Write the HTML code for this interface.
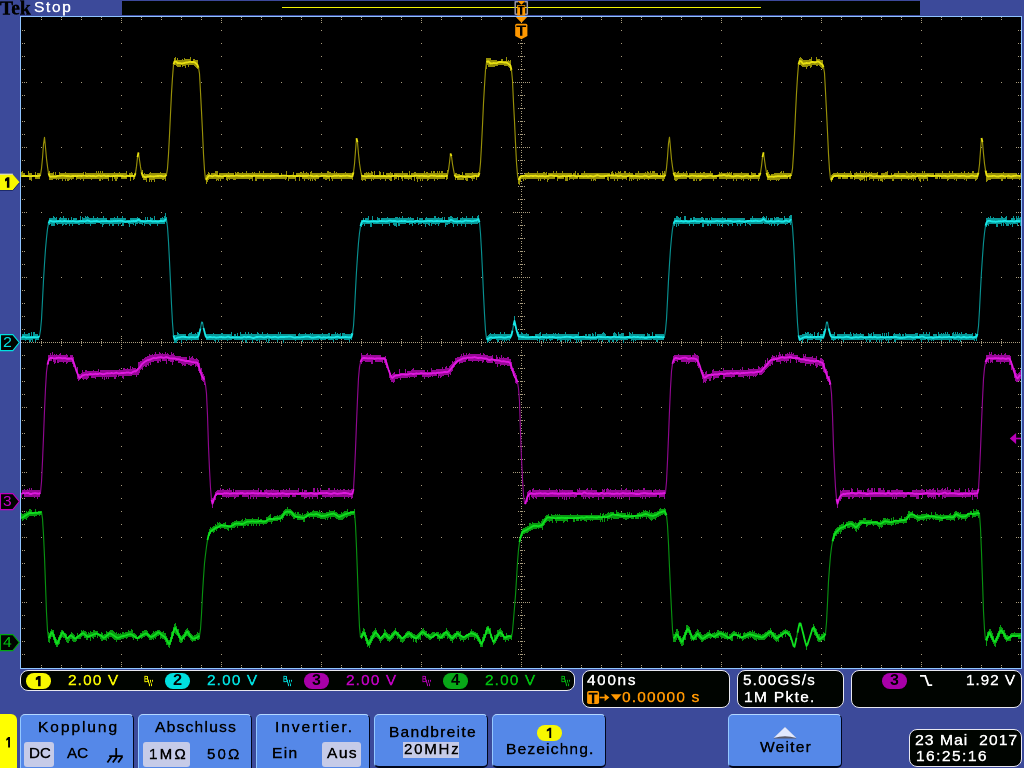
<!DOCTYPE html>
<html><head><meta charset="utf-8"><title>Tek scope</title>
<style>
html,body{margin:0;padding:0}
body{width:1024px;height:768px;overflow:hidden;background:#3c4a9a;position:relative;font-family:"Liberation Sans",sans-serif}
.abs{position:absolute}
.t{position:absolute;line-height:0;white-space:pre;transform-origin:0 0;display:block;-webkit-text-stroke:0.75px currentColor;will-change:transform}
.box{position:absolute;background:#000400;border:1px solid #e8e8f0;border-radius:8px;box-sizing:border-box}
.badge{position:absolute;border-radius:8px/7.8px}
.btn{position:absolute;background:#5588e8;box-sizing:border-box;border-top:1.4px solid #b4d8ff;border-left:1.4px solid #94c8ff;border-right:1.2px solid #00061c;border-radius:5px 5px 0 0;top:714px;height:60px}
.btn.pop{height:54px;border-bottom:2px solid #00061c;border-radius:5px}
.sel{position:absolute;background:#c6cbe8;border-radius:3px}
</style></head><body>
<div class="abs" style="left:122px;top:1px;width:798px;height:14px;background:#000400"></div>
<div class="abs" style="left:282px;top:6.8px;width:479px;height:1.4px;background:#f4f400"></div>
<div class="abs" style="left:20px;top:16px;width:1002px;height:653px;background:#8fc3ff"></div>
<div class="abs" style="left:21px;top:17px;width:1000px;height:651px;background:#000"></div>
<svg class="abs" style="left:0;top:0" width="1024" height="768" viewBox="0 0 1024 768">
<defs><clipPath id="cp"><rect x="21" y="17" width="1000" height="651"/></clipPath></defs>
<g fill="#a99c7e" stroke="#a99c7e" stroke-width="1" shape-rendering="crispEdges"><line x1="41" y1="82.5" x2="1021" y2="82.5" stroke-dasharray="1 19" stroke-dashoffset="0"/><line x1="41" y1="147.5" x2="1021" y2="147.5" stroke-dasharray="1 19" stroke-dashoffset="0"/><line x1="41" y1="212.5" x2="1021" y2="212.5" stroke-dasharray="1 19" stroke-dashoffset="0"/><line x1="41" y1="277.5" x2="1021" y2="277.5" stroke-dasharray="1 19" stroke-dashoffset="0"/><line x1="41" y1="407.5" x2="1021" y2="407.5" stroke-dasharray="1 19" stroke-dashoffset="0"/><line x1="41" y1="472.5" x2="1021" y2="472.5" stroke-dasharray="1 19" stroke-dashoffset="0"/><line x1="41" y1="537.5" x2="1021" y2="537.5" stroke-dasharray="1 19" stroke-dashoffset="0"/><line x1="41" y1="602.5" x2="1021" y2="602.5" stroke-dasharray="1 19" stroke-dashoffset="0"/><line x1="121.5" y1="30" x2="121.5" y2="667" stroke-dasharray="1 12" stroke-dashoffset="0"/><line x1="221.5" y1="30" x2="221.5" y2="667" stroke-dasharray="1 12" stroke-dashoffset="0"/><line x1="321.5" y1="30" x2="321.5" y2="667" stroke-dasharray="1 12" stroke-dashoffset="0"/><line x1="421.5" y1="30" x2="421.5" y2="667" stroke-dasharray="1 12" stroke-dashoffset="0"/><line x1="621.5" y1="30" x2="621.5" y2="667" stroke-dasharray="1 12" stroke-dashoffset="0"/><line x1="721.5" y1="30" x2="721.5" y2="667" stroke-dasharray="1 12" stroke-dashoffset="0"/><line x1="821.5" y1="30" x2="821.5" y2="667" stroke-dasharray="1 12" stroke-dashoffset="0"/><line x1="921.5" y1="30" x2="921.5" y2="667" stroke-dasharray="1 12" stroke-dashoffset="0"/><line x1="21" y1="342.5" x2="1021" y2="342.5" stroke-dasharray="1 1" stroke-dashoffset="0"/><rect stroke="none" x="41" y="339" width="1" height="1"/><rect stroke="none" x="41" y="345" width="1" height="1"/><rect stroke="none" x="41" y="341" width="1" height="3"/><rect stroke="none" x="61" y="339" width="1" height="1"/><rect stroke="none" x="61" y="345" width="1" height="1"/><rect stroke="none" x="61" y="341" width="1" height="3"/><rect stroke="none" x="81" y="339" width="1" height="1"/><rect stroke="none" x="81" y="345" width="1" height="1"/><rect stroke="none" x="81" y="341" width="1" height="3"/><rect stroke="none" x="101" y="339" width="1" height="1"/><rect stroke="none" x="101" y="345" width="1" height="1"/><rect stroke="none" x="101" y="341" width="1" height="3"/><rect stroke="none" x="121" y="336" width="1" height="1"/><rect stroke="none" x="121" y="338" width="1" height="1"/><rect stroke="none" x="121" y="340" width="1" height="1"/><rect stroke="none" x="121" y="344" width="1" height="1"/><rect stroke="none" x="121" y="346" width="1" height="1"/><rect stroke="none" x="121" y="348" width="1" height="1"/><rect stroke="none" x="141" y="339" width="1" height="1"/><rect stroke="none" x="141" y="345" width="1" height="1"/><rect stroke="none" x="141" y="341" width="1" height="3"/><rect stroke="none" x="161" y="339" width="1" height="1"/><rect stroke="none" x="161" y="345" width="1" height="1"/><rect stroke="none" x="161" y="341" width="1" height="3"/><rect stroke="none" x="181" y="339" width="1" height="1"/><rect stroke="none" x="181" y="345" width="1" height="1"/><rect stroke="none" x="181" y="341" width="1" height="3"/><rect stroke="none" x="201" y="339" width="1" height="1"/><rect stroke="none" x="201" y="345" width="1" height="1"/><rect stroke="none" x="201" y="341" width="1" height="3"/><rect stroke="none" x="221" y="336" width="1" height="1"/><rect stroke="none" x="221" y="338" width="1" height="1"/><rect stroke="none" x="221" y="340" width="1" height="1"/><rect stroke="none" x="221" y="344" width="1" height="1"/><rect stroke="none" x="221" y="346" width="1" height="1"/><rect stroke="none" x="221" y="348" width="1" height="1"/><rect stroke="none" x="241" y="339" width="1" height="1"/><rect stroke="none" x="241" y="345" width="1" height="1"/><rect stroke="none" x="241" y="341" width="1" height="3"/><rect stroke="none" x="261" y="339" width="1" height="1"/><rect stroke="none" x="261" y="345" width="1" height="1"/><rect stroke="none" x="261" y="341" width="1" height="3"/><rect stroke="none" x="281" y="339" width="1" height="1"/><rect stroke="none" x="281" y="345" width="1" height="1"/><rect stroke="none" x="281" y="341" width="1" height="3"/><rect stroke="none" x="301" y="339" width="1" height="1"/><rect stroke="none" x="301" y="345" width="1" height="1"/><rect stroke="none" x="301" y="341" width="1" height="3"/><rect stroke="none" x="321" y="336" width="1" height="1"/><rect stroke="none" x="321" y="338" width="1" height="1"/><rect stroke="none" x="321" y="340" width="1" height="1"/><rect stroke="none" x="321" y="344" width="1" height="1"/><rect stroke="none" x="321" y="346" width="1" height="1"/><rect stroke="none" x="321" y="348" width="1" height="1"/><rect stroke="none" x="341" y="339" width="1" height="1"/><rect stroke="none" x="341" y="345" width="1" height="1"/><rect stroke="none" x="341" y="341" width="1" height="3"/><rect stroke="none" x="361" y="339" width="1" height="1"/><rect stroke="none" x="361" y="345" width="1" height="1"/><rect stroke="none" x="361" y="341" width="1" height="3"/><rect stroke="none" x="381" y="339" width="1" height="1"/><rect stroke="none" x="381" y="345" width="1" height="1"/><rect stroke="none" x="381" y="341" width="1" height="3"/><rect stroke="none" x="401" y="339" width="1" height="1"/><rect stroke="none" x="401" y="345" width="1" height="1"/><rect stroke="none" x="401" y="341" width="1" height="3"/><rect stroke="none" x="421" y="336" width="1" height="1"/><rect stroke="none" x="421" y="338" width="1" height="1"/><rect stroke="none" x="421" y="340" width="1" height="1"/><rect stroke="none" x="421" y="344" width="1" height="1"/><rect stroke="none" x="421" y="346" width="1" height="1"/><rect stroke="none" x="421" y="348" width="1" height="1"/><rect stroke="none" x="441" y="339" width="1" height="1"/><rect stroke="none" x="441" y="345" width="1" height="1"/><rect stroke="none" x="441" y="341" width="1" height="3"/><rect stroke="none" x="461" y="339" width="1" height="1"/><rect stroke="none" x="461" y="345" width="1" height="1"/><rect stroke="none" x="461" y="341" width="1" height="3"/><rect stroke="none" x="481" y="339" width="1" height="1"/><rect stroke="none" x="481" y="345" width="1" height="1"/><rect stroke="none" x="481" y="341" width="1" height="3"/><rect stroke="none" x="501" y="339" width="1" height="1"/><rect stroke="none" x="501" y="345" width="1" height="1"/><rect stroke="none" x="501" y="341" width="1" height="3"/><rect stroke="none" x="541" y="339" width="1" height="1"/><rect stroke="none" x="541" y="345" width="1" height="1"/><rect stroke="none" x="541" y="341" width="1" height="3"/><rect stroke="none" x="561" y="339" width="1" height="1"/><rect stroke="none" x="561" y="345" width="1" height="1"/><rect stroke="none" x="561" y="341" width="1" height="3"/><rect stroke="none" x="581" y="339" width="1" height="1"/><rect stroke="none" x="581" y="345" width="1" height="1"/><rect stroke="none" x="581" y="341" width="1" height="3"/><rect stroke="none" x="601" y="339" width="1" height="1"/><rect stroke="none" x="601" y="345" width="1" height="1"/><rect stroke="none" x="601" y="341" width="1" height="3"/><rect stroke="none" x="621" y="336" width="1" height="1"/><rect stroke="none" x="621" y="338" width="1" height="1"/><rect stroke="none" x="621" y="340" width="1" height="1"/><rect stroke="none" x="621" y="344" width="1" height="1"/><rect stroke="none" x="621" y="346" width="1" height="1"/><rect stroke="none" x="621" y="348" width="1" height="1"/><rect stroke="none" x="641" y="339" width="1" height="1"/><rect stroke="none" x="641" y="345" width="1" height="1"/><rect stroke="none" x="641" y="341" width="1" height="3"/><rect stroke="none" x="661" y="339" width="1" height="1"/><rect stroke="none" x="661" y="345" width="1" height="1"/><rect stroke="none" x="661" y="341" width="1" height="3"/><rect stroke="none" x="681" y="339" width="1" height="1"/><rect stroke="none" x="681" y="345" width="1" height="1"/><rect stroke="none" x="681" y="341" width="1" height="3"/><rect stroke="none" x="701" y="339" width="1" height="1"/><rect stroke="none" x="701" y="345" width="1" height="1"/><rect stroke="none" x="701" y="341" width="1" height="3"/><rect stroke="none" x="721" y="336" width="1" height="1"/><rect stroke="none" x="721" y="338" width="1" height="1"/><rect stroke="none" x="721" y="340" width="1" height="1"/><rect stroke="none" x="721" y="344" width="1" height="1"/><rect stroke="none" x="721" y="346" width="1" height="1"/><rect stroke="none" x="721" y="348" width="1" height="1"/><rect stroke="none" x="741" y="339" width="1" height="1"/><rect stroke="none" x="741" y="345" width="1" height="1"/><rect stroke="none" x="741" y="341" width="1" height="3"/><rect stroke="none" x="761" y="339" width="1" height="1"/><rect stroke="none" x="761" y="345" width="1" height="1"/><rect stroke="none" x="761" y="341" width="1" height="3"/><rect stroke="none" x="781" y="339" width="1" height="1"/><rect stroke="none" x="781" y="345" width="1" height="1"/><rect stroke="none" x="781" y="341" width="1" height="3"/><rect stroke="none" x="801" y="339" width="1" height="1"/><rect stroke="none" x="801" y="345" width="1" height="1"/><rect stroke="none" x="801" y="341" width="1" height="3"/><rect stroke="none" x="821" y="336" width="1" height="1"/><rect stroke="none" x="821" y="338" width="1" height="1"/><rect stroke="none" x="821" y="340" width="1" height="1"/><rect stroke="none" x="821" y="344" width="1" height="1"/><rect stroke="none" x="821" y="346" width="1" height="1"/><rect stroke="none" x="821" y="348" width="1" height="1"/><rect stroke="none" x="841" y="339" width="1" height="1"/><rect stroke="none" x="841" y="345" width="1" height="1"/><rect stroke="none" x="841" y="341" width="1" height="3"/><rect stroke="none" x="861" y="339" width="1" height="1"/><rect stroke="none" x="861" y="345" width="1" height="1"/><rect stroke="none" x="861" y="341" width="1" height="3"/><rect stroke="none" x="881" y="339" width="1" height="1"/><rect stroke="none" x="881" y="345" width="1" height="1"/><rect stroke="none" x="881" y="341" width="1" height="3"/><rect stroke="none" x="901" y="339" width="1" height="1"/><rect stroke="none" x="901" y="345" width="1" height="1"/><rect stroke="none" x="901" y="341" width="1" height="3"/><rect stroke="none" x="921" y="336" width="1" height="1"/><rect stroke="none" x="921" y="338" width="1" height="1"/><rect stroke="none" x="921" y="340" width="1" height="1"/><rect stroke="none" x="921" y="344" width="1" height="1"/><rect stroke="none" x="921" y="346" width="1" height="1"/><rect stroke="none" x="921" y="348" width="1" height="1"/><rect stroke="none" x="941" y="339" width="1" height="1"/><rect stroke="none" x="941" y="345" width="1" height="1"/><rect stroke="none" x="941" y="341" width="1" height="3"/><rect stroke="none" x="961" y="339" width="1" height="1"/><rect stroke="none" x="961" y="345" width="1" height="1"/><rect stroke="none" x="961" y="341" width="1" height="3"/><rect stroke="none" x="981" y="339" width="1" height="1"/><rect stroke="none" x="981" y="345" width="1" height="1"/><rect stroke="none" x="981" y="341" width="1" height="3"/><rect stroke="none" x="1001" y="339" width="1" height="1"/><rect stroke="none" x="1001" y="345" width="1" height="1"/><rect stroke="none" x="1001" y="341" width="1" height="3"/><rect stroke="none" x="521" y="19.6" width="1" height="1"/><rect stroke="none" x="521" y="22.2" width="1" height="1"/><rect stroke="none" x="521" y="24.8" width="1" height="1"/><rect stroke="none" x="521" y="27.4" width="1" height="1"/><rect stroke="none" x="521" y="30.0" width="1" height="1"/><rect stroke="none" x="521" y="32.6" width="1" height="1"/><rect stroke="none" x="521" y="35.2" width="1" height="1"/><rect stroke="none" x="521" y="37.8" width="1" height="1"/><rect stroke="none" x="521" y="40.4" width="1" height="1"/><rect stroke="none" x="521" y="43.0" width="1" height="1"/><rect stroke="none" x="521" y="45.6" width="1" height="1"/><rect stroke="none" x="521" y="48.2" width="1" height="1"/><rect stroke="none" x="521" y="50.8" width="1" height="1"/><rect stroke="none" x="521" y="53.4" width="1" height="1"/><rect stroke="none" x="521" y="56.0" width="1" height="1"/><rect stroke="none" x="521" y="58.6" width="1" height="1"/><rect stroke="none" x="521" y="61.2" width="1" height="1"/><rect stroke="none" x="521" y="63.8" width="1" height="1"/><rect stroke="none" x="521" y="66.4" width="1" height="1"/><rect stroke="none" x="521" y="69.0" width="1" height="1"/><rect stroke="none" x="521" y="71.6" width="1" height="1"/><rect stroke="none" x="521" y="74.2" width="1" height="1"/><rect stroke="none" x="521" y="76.8" width="1" height="1"/><rect stroke="none" x="521" y="79.4" width="1" height="1"/><rect stroke="none" x="521" y="82.0" width="1" height="1"/><rect stroke="none" x="521" y="84.6" width="1" height="1"/><rect stroke="none" x="521" y="87.2" width="1" height="1"/><rect stroke="none" x="521" y="89.8" width="1" height="1"/><rect stroke="none" x="521" y="92.4" width="1" height="1"/><rect stroke="none" x="521" y="95.0" width="1" height="1"/><rect stroke="none" x="521" y="97.6" width="1" height="1"/><rect stroke="none" x="521" y="100.2" width="1" height="1"/><rect stroke="none" x="521" y="102.8" width="1" height="1"/><rect stroke="none" x="521" y="105.4" width="1" height="1"/><rect stroke="none" x="521" y="108.0" width="1" height="1"/><rect stroke="none" x="521" y="110.6" width="1" height="1"/><rect stroke="none" x="521" y="113.2" width="1" height="1"/><rect stroke="none" x="521" y="115.8" width="1" height="1"/><rect stroke="none" x="521" y="118.4" width="1" height="1"/><rect stroke="none" x="521" y="121.0" width="1" height="1"/><rect stroke="none" x="521" y="123.6" width="1" height="1"/><rect stroke="none" x="521" y="126.2" width="1" height="1"/><rect stroke="none" x="521" y="128.8" width="1" height="1"/><rect stroke="none" x="521" y="131.4" width="1" height="1"/><rect stroke="none" x="521" y="134.0" width="1" height="1"/><rect stroke="none" x="521" y="136.6" width="1" height="1"/><rect stroke="none" x="521" y="139.2" width="1" height="1"/><rect stroke="none" x="521" y="141.8" width="1" height="1"/><rect stroke="none" x="521" y="144.4" width="1" height="1"/><rect stroke="none" x="521" y="147.0" width="1" height="1"/><rect stroke="none" x="521" y="149.6" width="1" height="1"/><rect stroke="none" x="521" y="152.2" width="1" height="1"/><rect stroke="none" x="521" y="154.8" width="1" height="1"/><rect stroke="none" x="521" y="157.4" width="1" height="1"/><rect stroke="none" x="521" y="160.0" width="1" height="1"/><rect stroke="none" x="521" y="162.6" width="1" height="1"/><rect stroke="none" x="521" y="165.2" width="1" height="1"/><rect stroke="none" x="521" y="167.8" width="1" height="1"/><rect stroke="none" x="521" y="170.4" width="1" height="1"/><rect stroke="none" x="521" y="173.0" width="1" height="1"/><rect stroke="none" x="521" y="175.6" width="1" height="1"/><rect stroke="none" x="521" y="178.2" width="1" height="1"/><rect stroke="none" x="521" y="180.8" width="1" height="1"/><rect stroke="none" x="521" y="183.4" width="1" height="1"/><rect stroke="none" x="521" y="186.0" width="1" height="1"/><rect stroke="none" x="521" y="188.6" width="1" height="1"/><rect stroke="none" x="521" y="191.2" width="1" height="1"/><rect stroke="none" x="521" y="193.8" width="1" height="1"/><rect stroke="none" x="521" y="196.4" width="1" height="1"/><rect stroke="none" x="521" y="199.0" width="1" height="1"/><rect stroke="none" x="521" y="201.6" width="1" height="1"/><rect stroke="none" x="521" y="204.2" width="1" height="1"/><rect stroke="none" x="521" y="206.8" width="1" height="1"/><rect stroke="none" x="521" y="209.4" width="1" height="1"/><rect stroke="none" x="521" y="212.0" width="1" height="1"/><rect stroke="none" x="521" y="214.6" width="1" height="1"/><rect stroke="none" x="521" y="217.2" width="1" height="1"/><rect stroke="none" x="521" y="219.8" width="1" height="1"/><rect stroke="none" x="521" y="222.4" width="1" height="1"/><rect stroke="none" x="521" y="225.0" width="1" height="1"/><rect stroke="none" x="521" y="227.6" width="1" height="1"/><rect stroke="none" x="521" y="230.2" width="1" height="1"/><rect stroke="none" x="521" y="232.8" width="1" height="1"/><rect stroke="none" x="521" y="235.4" width="1" height="1"/><rect stroke="none" x="521" y="238.0" width="1" height="1"/><rect stroke="none" x="521" y="240.6" width="1" height="1"/><rect stroke="none" x="521" y="243.2" width="1" height="1"/><rect stroke="none" x="521" y="245.8" width="1" height="1"/><rect stroke="none" x="521" y="248.4" width="1" height="1"/><rect stroke="none" x="521" y="251.0" width="1" height="1"/><rect stroke="none" x="521" y="253.6" width="1" height="1"/><rect stroke="none" x="521" y="256.2" width="1" height="1"/><rect stroke="none" x="521" y="258.8" width="1" height="1"/><rect stroke="none" x="521" y="261.4" width="1" height="1"/><rect stroke="none" x="521" y="264.0" width="1" height="1"/><rect stroke="none" x="521" y="266.6" width="1" height="1"/><rect stroke="none" x="521" y="269.2" width="1" height="1"/><rect stroke="none" x="521" y="271.8" width="1" height="1"/><rect stroke="none" x="521" y="274.4" width="1" height="1"/><rect stroke="none" x="521" y="277.0" width="1" height="1"/><rect stroke="none" x="521" y="279.6" width="1" height="1"/><rect stroke="none" x="521" y="282.2" width="1" height="1"/><rect stroke="none" x="521" y="284.8" width="1" height="1"/><rect stroke="none" x="521" y="287.4" width="1" height="1"/><rect stroke="none" x="521" y="290.0" width="1" height="1"/><rect stroke="none" x="521" y="292.6" width="1" height="1"/><rect stroke="none" x="521" y="295.2" width="1" height="1"/><rect stroke="none" x="521" y="297.8" width="1" height="1"/><rect stroke="none" x="521" y="300.4" width="1" height="1"/><rect stroke="none" x="521" y="303.0" width="1" height="1"/><rect stroke="none" x="521" y="305.6" width="1" height="1"/><rect stroke="none" x="521" y="308.2" width="1" height="1"/><rect stroke="none" x="521" y="310.8" width="1" height="1"/><rect stroke="none" x="521" y="313.4" width="1" height="1"/><rect stroke="none" x="521" y="316.0" width="1" height="1"/><rect stroke="none" x="521" y="318.6" width="1" height="1"/><rect stroke="none" x="521" y="321.2" width="1" height="1"/><rect stroke="none" x="521" y="323.8" width="1" height="1"/><rect stroke="none" x="521" y="326.4" width="1" height="1"/><rect stroke="none" x="521" y="329.0" width="1" height="1"/><rect stroke="none" x="521" y="331.6" width="1" height="1"/><rect stroke="none" x="521" y="334.2" width="1" height="1"/><rect stroke="none" x="521" y="336.8" width="1" height="1"/><rect stroke="none" x="521" y="339.4" width="1" height="1"/><rect stroke="none" x="521" y="342.0" width="1" height="1"/><rect stroke="none" x="521" y="344.6" width="1" height="1"/><rect stroke="none" x="521" y="347.2" width="1" height="1"/><rect stroke="none" x="521" y="349.8" width="1" height="1"/><rect stroke="none" x="521" y="352.4" width="1" height="1"/><rect stroke="none" x="521" y="355.0" width="1" height="1"/><rect stroke="none" x="521" y="357.6" width="1" height="1"/><rect stroke="none" x="521" y="360.2" width="1" height="1"/><rect stroke="none" x="521" y="362.8" width="1" height="1"/><rect stroke="none" x="521" y="365.4" width="1" height="1"/><rect stroke="none" x="521" y="368.0" width="1" height="1"/><rect stroke="none" x="521" y="370.6" width="1" height="1"/><rect stroke="none" x="521" y="373.2" width="1" height="1"/><rect stroke="none" x="521" y="375.8" width="1" height="1"/><rect stroke="none" x="521" y="378.4" width="1" height="1"/><rect stroke="none" x="521" y="381.0" width="1" height="1"/><rect stroke="none" x="521" y="383.6" width="1" height="1"/><rect stroke="none" x="521" y="386.2" width="1" height="1"/><rect stroke="none" x="521" y="388.8" width="1" height="1"/><rect stroke="none" x="521" y="391.4" width="1" height="1"/><rect stroke="none" x="521" y="394.0" width="1" height="1"/><rect stroke="none" x="521" y="396.6" width="1" height="1"/><rect stroke="none" x="521" y="399.2" width="1" height="1"/><rect stroke="none" x="521" y="401.8" width="1" height="1"/><rect stroke="none" x="521" y="404.4" width="1" height="1"/><rect stroke="none" x="521" y="407.0" width="1" height="1"/><rect stroke="none" x="521" y="409.6" width="1" height="1"/><rect stroke="none" x="521" y="412.2" width="1" height="1"/><rect stroke="none" x="521" y="414.8" width="1" height="1"/><rect stroke="none" x="521" y="417.4" width="1" height="1"/><rect stroke="none" x="521" y="420.0" width="1" height="1"/><rect stroke="none" x="521" y="422.6" width="1" height="1"/><rect stroke="none" x="521" y="425.2" width="1" height="1"/><rect stroke="none" x="521" y="427.8" width="1" height="1"/><rect stroke="none" x="521" y="430.4" width="1" height="1"/><rect stroke="none" x="521" y="433.0" width="1" height="1"/><rect stroke="none" x="521" y="435.6" width="1" height="1"/><rect stroke="none" x="521" y="438.2" width="1" height="1"/><rect stroke="none" x="521" y="440.8" width="1" height="1"/><rect stroke="none" x="521" y="443.4" width="1" height="1"/><rect stroke="none" x="521" y="446.0" width="1" height="1"/><rect stroke="none" x="521" y="448.6" width="1" height="1"/><rect stroke="none" x="521" y="451.2" width="1" height="1"/><rect stroke="none" x="521" y="453.8" width="1" height="1"/><rect stroke="none" x="521" y="456.4" width="1" height="1"/><rect stroke="none" x="521" y="459.0" width="1" height="1"/><rect stroke="none" x="521" y="461.6" width="1" height="1"/><rect stroke="none" x="521" y="464.2" width="1" height="1"/><rect stroke="none" x="521" y="466.8" width="1" height="1"/><rect stroke="none" x="521" y="469.4" width="1" height="1"/><rect stroke="none" x="521" y="472.0" width="1" height="1"/><rect stroke="none" x="521" y="474.6" width="1" height="1"/><rect stroke="none" x="521" y="477.2" width="1" height="1"/><rect stroke="none" x="521" y="479.8" width="1" height="1"/><rect stroke="none" x="521" y="482.4" width="1" height="1"/><rect stroke="none" x="521" y="485.0" width="1" height="1"/><rect stroke="none" x="521" y="487.6" width="1" height="1"/><rect stroke="none" x="521" y="490.2" width="1" height="1"/><rect stroke="none" x="521" y="492.8" width="1" height="1"/><rect stroke="none" x="521" y="495.4" width="1" height="1"/><rect stroke="none" x="521" y="498.0" width="1" height="1"/><rect stroke="none" x="521" y="500.6" width="1" height="1"/><rect stroke="none" x="521" y="503.2" width="1" height="1"/><rect stroke="none" x="521" y="505.8" width="1" height="1"/><rect stroke="none" x="521" y="508.4" width="1" height="1"/><rect stroke="none" x="521" y="511.0" width="1" height="1"/><rect stroke="none" x="521" y="513.6" width="1" height="1"/><rect stroke="none" x="521" y="516.2" width="1" height="1"/><rect stroke="none" x="521" y="518.8" width="1" height="1"/><rect stroke="none" x="521" y="521.4" width="1" height="1"/><rect stroke="none" x="521" y="524.0" width="1" height="1"/><rect stroke="none" x="521" y="526.6" width="1" height="1"/><rect stroke="none" x="521" y="529.2" width="1" height="1"/><rect stroke="none" x="521" y="531.8" width="1" height="1"/><rect stroke="none" x="521" y="534.4" width="1" height="1"/><rect stroke="none" x="521" y="537.0" width="1" height="1"/><rect stroke="none" x="521" y="539.6" width="1" height="1"/><rect stroke="none" x="521" y="542.2" width="1" height="1"/><rect stroke="none" x="521" y="544.8" width="1" height="1"/><rect stroke="none" x="521" y="547.4" width="1" height="1"/><rect stroke="none" x="521" y="550.0" width="1" height="1"/><rect stroke="none" x="521" y="552.6" width="1" height="1"/><rect stroke="none" x="521" y="555.2" width="1" height="1"/><rect stroke="none" x="521" y="557.8" width="1" height="1"/><rect stroke="none" x="521" y="560.4" width="1" height="1"/><rect stroke="none" x="521" y="563.0" width="1" height="1"/><rect stroke="none" x="521" y="565.6" width="1" height="1"/><rect stroke="none" x="521" y="568.2" width="1" height="1"/><rect stroke="none" x="521" y="570.8" width="1" height="1"/><rect stroke="none" x="521" y="573.4" width="1" height="1"/><rect stroke="none" x="521" y="576.0" width="1" height="1"/><rect stroke="none" x="521" y="578.6" width="1" height="1"/><rect stroke="none" x="521" y="581.2" width="1" height="1"/><rect stroke="none" x="521" y="583.8" width="1" height="1"/><rect stroke="none" x="521" y="586.4" width="1" height="1"/><rect stroke="none" x="521" y="589.0" width="1" height="1"/><rect stroke="none" x="521" y="591.6" width="1" height="1"/><rect stroke="none" x="521" y="594.2" width="1" height="1"/><rect stroke="none" x="521" y="596.8" width="1" height="1"/><rect stroke="none" x="521" y="599.4" width="1" height="1"/><rect stroke="none" x="521" y="602.0" width="1" height="1"/><rect stroke="none" x="521" y="604.6" width="1" height="1"/><rect stroke="none" x="521" y="607.2" width="1" height="1"/><rect stroke="none" x="521" y="609.8" width="1" height="1"/><rect stroke="none" x="521" y="612.4" width="1" height="1"/><rect stroke="none" x="521" y="615.0" width="1" height="1"/><rect stroke="none" x="521" y="617.6" width="1" height="1"/><rect stroke="none" x="521" y="620.2" width="1" height="1"/><rect stroke="none" x="521" y="622.8" width="1" height="1"/><rect stroke="none" x="521" y="625.4" width="1" height="1"/><rect stroke="none" x="521" y="628.0" width="1" height="1"/><rect stroke="none" x="521" y="630.6" width="1" height="1"/><rect stroke="none" x="521" y="633.2" width="1" height="1"/><rect stroke="none" x="521" y="635.8" width="1" height="1"/><rect stroke="none" x="521" y="638.4" width="1" height="1"/><rect stroke="none" x="521" y="641.0" width="1" height="1"/><rect stroke="none" x="521" y="643.6" width="1" height="1"/><rect stroke="none" x="521" y="646.2" width="1" height="1"/><rect stroke="none" x="521" y="648.8" width="1" height="1"/><rect stroke="none" x="521" y="651.4" width="1" height="1"/><rect stroke="none" x="521" y="654.0" width="1" height="1"/><rect stroke="none" x="521" y="656.6" width="1" height="1"/><rect stroke="none" x="521" y="659.2" width="1" height="1"/><rect stroke="none" x="521" y="661.8" width="1" height="1"/><rect stroke="none" x="521" y="664.4" width="1" height="1"/><rect stroke="none" x="518" y="30" width="1" height="1"/><rect stroke="none" x="520" y="30" width="1" height="1"/><rect stroke="none" x="522" y="30" width="1" height="1"/><rect stroke="none" x="524" y="30" width="1" height="1"/><rect stroke="none" x="518" y="43" width="1" height="1"/><rect stroke="none" x="520" y="43" width="1" height="1"/><rect stroke="none" x="522" y="43" width="1" height="1"/><rect stroke="none" x="524" y="43" width="1" height="1"/><rect stroke="none" x="518" y="56" width="1" height="1"/><rect stroke="none" x="520" y="56" width="1" height="1"/><rect stroke="none" x="522" y="56" width="1" height="1"/><rect stroke="none" x="524" y="56" width="1" height="1"/><rect stroke="none" x="518" y="69" width="1" height="1"/><rect stroke="none" x="520" y="69" width="1" height="1"/><rect stroke="none" x="522" y="69" width="1" height="1"/><rect stroke="none" x="524" y="69" width="1" height="1"/><rect stroke="none" x="513" y="82" width="1" height="1"/><rect stroke="none" x="515" y="82" width="1" height="1"/><rect stroke="none" x="517" y="82" width="1" height="1"/><rect stroke="none" x="519" y="82" width="1" height="1"/><rect stroke="none" x="523" y="82" width="1" height="1"/><rect stroke="none" x="525" y="82" width="1" height="1"/><rect stroke="none" x="527" y="82" width="1" height="1"/><rect stroke="none" x="529" y="82" width="1" height="1"/><rect stroke="none" x="518" y="95" width="1" height="1"/><rect stroke="none" x="520" y="95" width="1" height="1"/><rect stroke="none" x="522" y="95" width="1" height="1"/><rect stroke="none" x="524" y="95" width="1" height="1"/><rect stroke="none" x="518" y="108" width="1" height="1"/><rect stroke="none" x="520" y="108" width="1" height="1"/><rect stroke="none" x="522" y="108" width="1" height="1"/><rect stroke="none" x="524" y="108" width="1" height="1"/><rect stroke="none" x="518" y="121" width="1" height="1"/><rect stroke="none" x="520" y="121" width="1" height="1"/><rect stroke="none" x="522" y="121" width="1" height="1"/><rect stroke="none" x="524" y="121" width="1" height="1"/><rect stroke="none" x="518" y="134" width="1" height="1"/><rect stroke="none" x="520" y="134" width="1" height="1"/><rect stroke="none" x="522" y="134" width="1" height="1"/><rect stroke="none" x="524" y="134" width="1" height="1"/><rect stroke="none" x="513" y="147" width="1" height="1"/><rect stroke="none" x="515" y="147" width="1" height="1"/><rect stroke="none" x="517" y="147" width="1" height="1"/><rect stroke="none" x="519" y="147" width="1" height="1"/><rect stroke="none" x="523" y="147" width="1" height="1"/><rect stroke="none" x="525" y="147" width="1" height="1"/><rect stroke="none" x="527" y="147" width="1" height="1"/><rect stroke="none" x="529" y="147" width="1" height="1"/><rect stroke="none" x="518" y="160" width="1" height="1"/><rect stroke="none" x="520" y="160" width="1" height="1"/><rect stroke="none" x="522" y="160" width="1" height="1"/><rect stroke="none" x="524" y="160" width="1" height="1"/><rect stroke="none" x="518" y="173" width="1" height="1"/><rect stroke="none" x="520" y="173" width="1" height="1"/><rect stroke="none" x="522" y="173" width="1" height="1"/><rect stroke="none" x="524" y="173" width="1" height="1"/><rect stroke="none" x="518" y="186" width="1" height="1"/><rect stroke="none" x="520" y="186" width="1" height="1"/><rect stroke="none" x="522" y="186" width="1" height="1"/><rect stroke="none" x="524" y="186" width="1" height="1"/><rect stroke="none" x="518" y="199" width="1" height="1"/><rect stroke="none" x="520" y="199" width="1" height="1"/><rect stroke="none" x="522" y="199" width="1" height="1"/><rect stroke="none" x="524" y="199" width="1" height="1"/><rect stroke="none" x="513" y="212" width="1" height="1"/><rect stroke="none" x="515" y="212" width="1" height="1"/><rect stroke="none" x="517" y="212" width="1" height="1"/><rect stroke="none" x="519" y="212" width="1" height="1"/><rect stroke="none" x="523" y="212" width="1" height="1"/><rect stroke="none" x="525" y="212" width="1" height="1"/><rect stroke="none" x="527" y="212" width="1" height="1"/><rect stroke="none" x="529" y="212" width="1" height="1"/><rect stroke="none" x="518" y="225" width="1" height="1"/><rect stroke="none" x="520" y="225" width="1" height="1"/><rect stroke="none" x="522" y="225" width="1" height="1"/><rect stroke="none" x="524" y="225" width="1" height="1"/><rect stroke="none" x="518" y="238" width="1" height="1"/><rect stroke="none" x="520" y="238" width="1" height="1"/><rect stroke="none" x="522" y="238" width="1" height="1"/><rect stroke="none" x="524" y="238" width="1" height="1"/><rect stroke="none" x="518" y="251" width="1" height="1"/><rect stroke="none" x="520" y="251" width="1" height="1"/><rect stroke="none" x="522" y="251" width="1" height="1"/><rect stroke="none" x="524" y="251" width="1" height="1"/><rect stroke="none" x="518" y="264" width="1" height="1"/><rect stroke="none" x="520" y="264" width="1" height="1"/><rect stroke="none" x="522" y="264" width="1" height="1"/><rect stroke="none" x="524" y="264" width="1" height="1"/><rect stroke="none" x="513" y="277" width="1" height="1"/><rect stroke="none" x="515" y="277" width="1" height="1"/><rect stroke="none" x="517" y="277" width="1" height="1"/><rect stroke="none" x="519" y="277" width="1" height="1"/><rect stroke="none" x="523" y="277" width="1" height="1"/><rect stroke="none" x="525" y="277" width="1" height="1"/><rect stroke="none" x="527" y="277" width="1" height="1"/><rect stroke="none" x="529" y="277" width="1" height="1"/><rect stroke="none" x="518" y="290" width="1" height="1"/><rect stroke="none" x="520" y="290" width="1" height="1"/><rect stroke="none" x="522" y="290" width="1" height="1"/><rect stroke="none" x="524" y="290" width="1" height="1"/><rect stroke="none" x="518" y="303" width="1" height="1"/><rect stroke="none" x="520" y="303" width="1" height="1"/><rect stroke="none" x="522" y="303" width="1" height="1"/><rect stroke="none" x="524" y="303" width="1" height="1"/><rect stroke="none" x="518" y="316" width="1" height="1"/><rect stroke="none" x="520" y="316" width="1" height="1"/><rect stroke="none" x="522" y="316" width="1" height="1"/><rect stroke="none" x="524" y="316" width="1" height="1"/><rect stroke="none" x="518" y="329" width="1" height="1"/><rect stroke="none" x="520" y="329" width="1" height="1"/><rect stroke="none" x="522" y="329" width="1" height="1"/><rect stroke="none" x="524" y="329" width="1" height="1"/><rect stroke="none" x="518" y="355" width="1" height="1"/><rect stroke="none" x="520" y="355" width="1" height="1"/><rect stroke="none" x="522" y="355" width="1" height="1"/><rect stroke="none" x="524" y="355" width="1" height="1"/><rect stroke="none" x="518" y="368" width="1" height="1"/><rect stroke="none" x="520" y="368" width="1" height="1"/><rect stroke="none" x="522" y="368" width="1" height="1"/><rect stroke="none" x="524" y="368" width="1" height="1"/><rect stroke="none" x="518" y="381" width="1" height="1"/><rect stroke="none" x="520" y="381" width="1" height="1"/><rect stroke="none" x="522" y="381" width="1" height="1"/><rect stroke="none" x="524" y="381" width="1" height="1"/><rect stroke="none" x="518" y="394" width="1" height="1"/><rect stroke="none" x="520" y="394" width="1" height="1"/><rect stroke="none" x="522" y="394" width="1" height="1"/><rect stroke="none" x="524" y="394" width="1" height="1"/><rect stroke="none" x="513" y="407" width="1" height="1"/><rect stroke="none" x="515" y="407" width="1" height="1"/><rect stroke="none" x="517" y="407" width="1" height="1"/><rect stroke="none" x="519" y="407" width="1" height="1"/><rect stroke="none" x="523" y="407" width="1" height="1"/><rect stroke="none" x="525" y="407" width="1" height="1"/><rect stroke="none" x="527" y="407" width="1" height="1"/><rect stroke="none" x="529" y="407" width="1" height="1"/><rect stroke="none" x="518" y="420" width="1" height="1"/><rect stroke="none" x="520" y="420" width="1" height="1"/><rect stroke="none" x="522" y="420" width="1" height="1"/><rect stroke="none" x="524" y="420" width="1" height="1"/><rect stroke="none" x="518" y="433" width="1" height="1"/><rect stroke="none" x="520" y="433" width="1" height="1"/><rect stroke="none" x="522" y="433" width="1" height="1"/><rect stroke="none" x="524" y="433" width="1" height="1"/><rect stroke="none" x="518" y="446" width="1" height="1"/><rect stroke="none" x="520" y="446" width="1" height="1"/><rect stroke="none" x="522" y="446" width="1" height="1"/><rect stroke="none" x="524" y="446" width="1" height="1"/><rect stroke="none" x="518" y="459" width="1" height="1"/><rect stroke="none" x="520" y="459" width="1" height="1"/><rect stroke="none" x="522" y="459" width="1" height="1"/><rect stroke="none" x="524" y="459" width="1" height="1"/><rect stroke="none" x="513" y="472" width="1" height="1"/><rect stroke="none" x="515" y="472" width="1" height="1"/><rect stroke="none" x="517" y="472" width="1" height="1"/><rect stroke="none" x="519" y="472" width="1" height="1"/><rect stroke="none" x="523" y="472" width="1" height="1"/><rect stroke="none" x="525" y="472" width="1" height="1"/><rect stroke="none" x="527" y="472" width="1" height="1"/><rect stroke="none" x="529" y="472" width="1" height="1"/><rect stroke="none" x="518" y="485" width="1" height="1"/><rect stroke="none" x="520" y="485" width="1" height="1"/><rect stroke="none" x="522" y="485" width="1" height="1"/><rect stroke="none" x="524" y="485" width="1" height="1"/><rect stroke="none" x="518" y="498" width="1" height="1"/><rect stroke="none" x="520" y="498" width="1" height="1"/><rect stroke="none" x="522" y="498" width="1" height="1"/><rect stroke="none" x="524" y="498" width="1" height="1"/><rect stroke="none" x="518" y="511" width="1" height="1"/><rect stroke="none" x="520" y="511" width="1" height="1"/><rect stroke="none" x="522" y="511" width="1" height="1"/><rect stroke="none" x="524" y="511" width="1" height="1"/><rect stroke="none" x="518" y="524" width="1" height="1"/><rect stroke="none" x="520" y="524" width="1" height="1"/><rect stroke="none" x="522" y="524" width="1" height="1"/><rect stroke="none" x="524" y="524" width="1" height="1"/><rect stroke="none" x="513" y="537" width="1" height="1"/><rect stroke="none" x="515" y="537" width="1" height="1"/><rect stroke="none" x="517" y="537" width="1" height="1"/><rect stroke="none" x="519" y="537" width="1" height="1"/><rect stroke="none" x="523" y="537" width="1" height="1"/><rect stroke="none" x="525" y="537" width="1" height="1"/><rect stroke="none" x="527" y="537" width="1" height="1"/><rect stroke="none" x="529" y="537" width="1" height="1"/><rect stroke="none" x="518" y="550" width="1" height="1"/><rect stroke="none" x="520" y="550" width="1" height="1"/><rect stroke="none" x="522" y="550" width="1" height="1"/><rect stroke="none" x="524" y="550" width="1" height="1"/><rect stroke="none" x="518" y="563" width="1" height="1"/><rect stroke="none" x="520" y="563" width="1" height="1"/><rect stroke="none" x="522" y="563" width="1" height="1"/><rect stroke="none" x="524" y="563" width="1" height="1"/><rect stroke="none" x="518" y="576" width="1" height="1"/><rect stroke="none" x="520" y="576" width="1" height="1"/><rect stroke="none" x="522" y="576" width="1" height="1"/><rect stroke="none" x="524" y="576" width="1" height="1"/><rect stroke="none" x="518" y="589" width="1" height="1"/><rect stroke="none" x="520" y="589" width="1" height="1"/><rect stroke="none" x="522" y="589" width="1" height="1"/><rect stroke="none" x="524" y="589" width="1" height="1"/><rect stroke="none" x="513" y="602" width="1" height="1"/><rect stroke="none" x="515" y="602" width="1" height="1"/><rect stroke="none" x="517" y="602" width="1" height="1"/><rect stroke="none" x="519" y="602" width="1" height="1"/><rect stroke="none" x="523" y="602" width="1" height="1"/><rect stroke="none" x="525" y="602" width="1" height="1"/><rect stroke="none" x="527" y="602" width="1" height="1"/><rect stroke="none" x="529" y="602" width="1" height="1"/><rect stroke="none" x="518" y="615" width="1" height="1"/><rect stroke="none" x="520" y="615" width="1" height="1"/><rect stroke="none" x="522" y="615" width="1" height="1"/><rect stroke="none" x="524" y="615" width="1" height="1"/><rect stroke="none" x="518" y="628" width="1" height="1"/><rect stroke="none" x="520" y="628" width="1" height="1"/><rect stroke="none" x="522" y="628" width="1" height="1"/><rect stroke="none" x="524" y="628" width="1" height="1"/><rect stroke="none" x="518" y="641" width="1" height="1"/><rect stroke="none" x="520" y="641" width="1" height="1"/><rect stroke="none" x="522" y="641" width="1" height="1"/><rect stroke="none" x="524" y="641" width="1" height="1"/><rect stroke="none" x="518" y="654" width="1" height="1"/><rect stroke="none" x="520" y="654" width="1" height="1"/><rect stroke="none" x="522" y="654" width="1" height="1"/><rect stroke="none" x="524" y="654" width="1" height="1"/><rect stroke="none" x="41" y="17" width="1" height="1"/><rect stroke="none" x="41" y="19" width="1" height="1"/><rect stroke="none" x="41" y="667" width="1" height="1"/><rect stroke="none" x="41" y="665" width="1" height="1"/><rect stroke="none" x="61" y="17" width="1" height="1"/><rect stroke="none" x="61" y="19" width="1" height="1"/><rect stroke="none" x="61" y="667" width="1" height="1"/><rect stroke="none" x="61" y="665" width="1" height="1"/><rect stroke="none" x="81" y="17" width="1" height="1"/><rect stroke="none" x="81" y="19" width="1" height="1"/><rect stroke="none" x="81" y="667" width="1" height="1"/><rect stroke="none" x="81" y="665" width="1" height="1"/><rect stroke="none" x="101" y="17" width="1" height="1"/><rect stroke="none" x="101" y="19" width="1" height="1"/><rect stroke="none" x="101" y="667" width="1" height="1"/><rect stroke="none" x="101" y="665" width="1" height="1"/><rect stroke="none" x="121" y="18" width="1" height="1"/><rect stroke="none" x="121" y="20" width="1" height="1"/><rect stroke="none" x="121" y="22" width="1" height="1"/><rect stroke="none" x="121" y="666" width="1" height="1"/><rect stroke="none" x="121" y="664" width="1" height="1"/><rect stroke="none" x="121" y="662" width="1" height="1"/><rect stroke="none" x="141" y="17" width="1" height="1"/><rect stroke="none" x="141" y="19" width="1" height="1"/><rect stroke="none" x="141" y="667" width="1" height="1"/><rect stroke="none" x="141" y="665" width="1" height="1"/><rect stroke="none" x="161" y="17" width="1" height="1"/><rect stroke="none" x="161" y="19" width="1" height="1"/><rect stroke="none" x="161" y="667" width="1" height="1"/><rect stroke="none" x="161" y="665" width="1" height="1"/><rect stroke="none" x="181" y="17" width="1" height="1"/><rect stroke="none" x="181" y="19" width="1" height="1"/><rect stroke="none" x="181" y="667" width="1" height="1"/><rect stroke="none" x="181" y="665" width="1" height="1"/><rect stroke="none" x="201" y="17" width="1" height="1"/><rect stroke="none" x="201" y="19" width="1" height="1"/><rect stroke="none" x="201" y="667" width="1" height="1"/><rect stroke="none" x="201" y="665" width="1" height="1"/><rect stroke="none" x="221" y="18" width="1" height="1"/><rect stroke="none" x="221" y="20" width="1" height="1"/><rect stroke="none" x="221" y="22" width="1" height="1"/><rect stroke="none" x="221" y="666" width="1" height="1"/><rect stroke="none" x="221" y="664" width="1" height="1"/><rect stroke="none" x="221" y="662" width="1" height="1"/><rect stroke="none" x="241" y="17" width="1" height="1"/><rect stroke="none" x="241" y="19" width="1" height="1"/><rect stroke="none" x="241" y="667" width="1" height="1"/><rect stroke="none" x="241" y="665" width="1" height="1"/><rect stroke="none" x="261" y="17" width="1" height="1"/><rect stroke="none" x="261" y="19" width="1" height="1"/><rect stroke="none" x="261" y="667" width="1" height="1"/><rect stroke="none" x="261" y="665" width="1" height="1"/><rect stroke="none" x="281" y="17" width="1" height="1"/><rect stroke="none" x="281" y="19" width="1" height="1"/><rect stroke="none" x="281" y="667" width="1" height="1"/><rect stroke="none" x="281" y="665" width="1" height="1"/><rect stroke="none" x="301" y="17" width="1" height="1"/><rect stroke="none" x="301" y="19" width="1" height="1"/><rect stroke="none" x="301" y="667" width="1" height="1"/><rect stroke="none" x="301" y="665" width="1" height="1"/><rect stroke="none" x="321" y="18" width="1" height="1"/><rect stroke="none" x="321" y="20" width="1" height="1"/><rect stroke="none" x="321" y="22" width="1" height="1"/><rect stroke="none" x="321" y="666" width="1" height="1"/><rect stroke="none" x="321" y="664" width="1" height="1"/><rect stroke="none" x="321" y="662" width="1" height="1"/><rect stroke="none" x="341" y="17" width="1" height="1"/><rect stroke="none" x="341" y="19" width="1" height="1"/><rect stroke="none" x="341" y="667" width="1" height="1"/><rect stroke="none" x="341" y="665" width="1" height="1"/><rect stroke="none" x="361" y="17" width="1" height="1"/><rect stroke="none" x="361" y="19" width="1" height="1"/><rect stroke="none" x="361" y="667" width="1" height="1"/><rect stroke="none" x="361" y="665" width="1" height="1"/><rect stroke="none" x="381" y="17" width="1" height="1"/><rect stroke="none" x="381" y="19" width="1" height="1"/><rect stroke="none" x="381" y="667" width="1" height="1"/><rect stroke="none" x="381" y="665" width="1" height="1"/><rect stroke="none" x="401" y="17" width="1" height="1"/><rect stroke="none" x="401" y="19" width="1" height="1"/><rect stroke="none" x="401" y="667" width="1" height="1"/><rect stroke="none" x="401" y="665" width="1" height="1"/><rect stroke="none" x="421" y="18" width="1" height="1"/><rect stroke="none" x="421" y="20" width="1" height="1"/><rect stroke="none" x="421" y="22" width="1" height="1"/><rect stroke="none" x="421" y="666" width="1" height="1"/><rect stroke="none" x="421" y="664" width="1" height="1"/><rect stroke="none" x="421" y="662" width="1" height="1"/><rect stroke="none" x="441" y="17" width="1" height="1"/><rect stroke="none" x="441" y="19" width="1" height="1"/><rect stroke="none" x="441" y="667" width="1" height="1"/><rect stroke="none" x="441" y="665" width="1" height="1"/><rect stroke="none" x="461" y="17" width="1" height="1"/><rect stroke="none" x="461" y="19" width="1" height="1"/><rect stroke="none" x="461" y="667" width="1" height="1"/><rect stroke="none" x="461" y="665" width="1" height="1"/><rect stroke="none" x="481" y="17" width="1" height="1"/><rect stroke="none" x="481" y="19" width="1" height="1"/><rect stroke="none" x="481" y="667" width="1" height="1"/><rect stroke="none" x="481" y="665" width="1" height="1"/><rect stroke="none" x="501" y="17" width="1" height="1"/><rect stroke="none" x="501" y="19" width="1" height="1"/><rect stroke="none" x="501" y="667" width="1" height="1"/><rect stroke="none" x="501" y="665" width="1" height="1"/><rect stroke="none" x="521" y="18" width="1" height="1"/><rect stroke="none" x="521" y="20" width="1" height="1"/><rect stroke="none" x="521" y="22" width="1" height="1"/><rect stroke="none" x="521" y="666" width="1" height="1"/><rect stroke="none" x="521" y="664" width="1" height="1"/><rect stroke="none" x="521" y="662" width="1" height="1"/><rect stroke="none" x="541" y="17" width="1" height="1"/><rect stroke="none" x="541" y="19" width="1" height="1"/><rect stroke="none" x="541" y="667" width="1" height="1"/><rect stroke="none" x="541" y="665" width="1" height="1"/><rect stroke="none" x="561" y="17" width="1" height="1"/><rect stroke="none" x="561" y="19" width="1" height="1"/><rect stroke="none" x="561" y="667" width="1" height="1"/><rect stroke="none" x="561" y="665" width="1" height="1"/><rect stroke="none" x="581" y="17" width="1" height="1"/><rect stroke="none" x="581" y="19" width="1" height="1"/><rect stroke="none" x="581" y="667" width="1" height="1"/><rect stroke="none" x="581" y="665" width="1" height="1"/><rect stroke="none" x="601" y="17" width="1" height="1"/><rect stroke="none" x="601" y="19" width="1" height="1"/><rect stroke="none" x="601" y="667" width="1" height="1"/><rect stroke="none" x="601" y="665" width="1" height="1"/><rect stroke="none" x="621" y="18" width="1" height="1"/><rect stroke="none" x="621" y="20" width="1" height="1"/><rect stroke="none" x="621" y="22" width="1" height="1"/><rect stroke="none" x="621" y="666" width="1" height="1"/><rect stroke="none" x="621" y="664" width="1" height="1"/><rect stroke="none" x="621" y="662" width="1" height="1"/><rect stroke="none" x="641" y="17" width="1" height="1"/><rect stroke="none" x="641" y="19" width="1" height="1"/><rect stroke="none" x="641" y="667" width="1" height="1"/><rect stroke="none" x="641" y="665" width="1" height="1"/><rect stroke="none" x="661" y="17" width="1" height="1"/><rect stroke="none" x="661" y="19" width="1" height="1"/><rect stroke="none" x="661" y="667" width="1" height="1"/><rect stroke="none" x="661" y="665" width="1" height="1"/><rect stroke="none" x="681" y="17" width="1" height="1"/><rect stroke="none" x="681" y="19" width="1" height="1"/><rect stroke="none" x="681" y="667" width="1" height="1"/><rect stroke="none" x="681" y="665" width="1" height="1"/><rect stroke="none" x="701" y="17" width="1" height="1"/><rect stroke="none" x="701" y="19" width="1" height="1"/><rect stroke="none" x="701" y="667" width="1" height="1"/><rect stroke="none" x="701" y="665" width="1" height="1"/><rect stroke="none" x="721" y="18" width="1" height="1"/><rect stroke="none" x="721" y="20" width="1" height="1"/><rect stroke="none" x="721" y="22" width="1" height="1"/><rect stroke="none" x="721" y="666" width="1" height="1"/><rect stroke="none" x="721" y="664" width="1" height="1"/><rect stroke="none" x="721" y="662" width="1" height="1"/><rect stroke="none" x="741" y="17" width="1" height="1"/><rect stroke="none" x="741" y="19" width="1" height="1"/><rect stroke="none" x="741" y="667" width="1" height="1"/><rect stroke="none" x="741" y="665" width="1" height="1"/><rect stroke="none" x="761" y="17" width="1" height="1"/><rect stroke="none" x="761" y="19" width="1" height="1"/><rect stroke="none" x="761" y="667" width="1" height="1"/><rect stroke="none" x="761" y="665" width="1" height="1"/><rect stroke="none" x="781" y="17" width="1" height="1"/><rect stroke="none" x="781" y="19" width="1" height="1"/><rect stroke="none" x="781" y="667" width="1" height="1"/><rect stroke="none" x="781" y="665" width="1" height="1"/><rect stroke="none" x="801" y="17" width="1" height="1"/><rect stroke="none" x="801" y="19" width="1" height="1"/><rect stroke="none" x="801" y="667" width="1" height="1"/><rect stroke="none" x="801" y="665" width="1" height="1"/><rect stroke="none" x="821" y="18" width="1" height="1"/><rect stroke="none" x="821" y="20" width="1" height="1"/><rect stroke="none" x="821" y="22" width="1" height="1"/><rect stroke="none" x="821" y="666" width="1" height="1"/><rect stroke="none" x="821" y="664" width="1" height="1"/><rect stroke="none" x="821" y="662" width="1" height="1"/><rect stroke="none" x="841" y="17" width="1" height="1"/><rect stroke="none" x="841" y="19" width="1" height="1"/><rect stroke="none" x="841" y="667" width="1" height="1"/><rect stroke="none" x="841" y="665" width="1" height="1"/><rect stroke="none" x="861" y="17" width="1" height="1"/><rect stroke="none" x="861" y="19" width="1" height="1"/><rect stroke="none" x="861" y="667" width="1" height="1"/><rect stroke="none" x="861" y="665" width="1" height="1"/><rect stroke="none" x="881" y="17" width="1" height="1"/><rect stroke="none" x="881" y="19" width="1" height="1"/><rect stroke="none" x="881" y="667" width="1" height="1"/><rect stroke="none" x="881" y="665" width="1" height="1"/><rect stroke="none" x="901" y="17" width="1" height="1"/><rect stroke="none" x="901" y="19" width="1" height="1"/><rect stroke="none" x="901" y="667" width="1" height="1"/><rect stroke="none" x="901" y="665" width="1" height="1"/><rect stroke="none" x="921" y="18" width="1" height="1"/><rect stroke="none" x="921" y="20" width="1" height="1"/><rect stroke="none" x="921" y="22" width="1" height="1"/><rect stroke="none" x="921" y="666" width="1" height="1"/><rect stroke="none" x="921" y="664" width="1" height="1"/><rect stroke="none" x="921" y="662" width="1" height="1"/><rect stroke="none" x="941" y="17" width="1" height="1"/><rect stroke="none" x="941" y="19" width="1" height="1"/><rect stroke="none" x="941" y="667" width="1" height="1"/><rect stroke="none" x="941" y="665" width="1" height="1"/><rect stroke="none" x="961" y="17" width="1" height="1"/><rect stroke="none" x="961" y="19" width="1" height="1"/><rect stroke="none" x="961" y="667" width="1" height="1"/><rect stroke="none" x="961" y="665" width="1" height="1"/><rect stroke="none" x="981" y="17" width="1" height="1"/><rect stroke="none" x="981" y="19" width="1" height="1"/><rect stroke="none" x="981" y="667" width="1" height="1"/><rect stroke="none" x="981" y="665" width="1" height="1"/><rect stroke="none" x="1001" y="17" width="1" height="1"/><rect stroke="none" x="1001" y="19" width="1" height="1"/><rect stroke="none" x="1001" y="667" width="1" height="1"/><rect stroke="none" x="1001" y="665" width="1" height="1"/><rect stroke="none" x="22" y="30" width="1" height="1"/><rect stroke="none" x="24" y="30" width="1" height="1"/><rect stroke="none" x="1020" y="30" width="1" height="1"/><rect stroke="none" x="1018" y="30" width="1" height="1"/><rect stroke="none" x="22" y="43" width="1" height="1"/><rect stroke="none" x="24" y="43" width="1" height="1"/><rect stroke="none" x="1020" y="43" width="1" height="1"/><rect stroke="none" x="1018" y="43" width="1" height="1"/><rect stroke="none" x="22" y="56" width="1" height="1"/><rect stroke="none" x="24" y="56" width="1" height="1"/><rect stroke="none" x="1020" y="56" width="1" height="1"/><rect stroke="none" x="1018" y="56" width="1" height="1"/><rect stroke="none" x="22" y="69" width="1" height="1"/><rect stroke="none" x="24" y="69" width="1" height="1"/><rect stroke="none" x="1020" y="69" width="1" height="1"/><rect stroke="none" x="1018" y="69" width="1" height="1"/><rect stroke="none" x="22" y="82" width="1" height="1"/><rect stroke="none" x="24" y="82" width="1" height="1"/><rect stroke="none" x="26" y="82" width="1" height="1"/><rect stroke="none" x="1020" y="82" width="1" height="1"/><rect stroke="none" x="1018" y="82" width="1" height="1"/><rect stroke="none" x="1016" y="82" width="1" height="1"/><rect stroke="none" x="22" y="95" width="1" height="1"/><rect stroke="none" x="24" y="95" width="1" height="1"/><rect stroke="none" x="1020" y="95" width="1" height="1"/><rect stroke="none" x="1018" y="95" width="1" height="1"/><rect stroke="none" x="22" y="108" width="1" height="1"/><rect stroke="none" x="24" y="108" width="1" height="1"/><rect stroke="none" x="1020" y="108" width="1" height="1"/><rect stroke="none" x="1018" y="108" width="1" height="1"/><rect stroke="none" x="22" y="121" width="1" height="1"/><rect stroke="none" x="24" y="121" width="1" height="1"/><rect stroke="none" x="1020" y="121" width="1" height="1"/><rect stroke="none" x="1018" y="121" width="1" height="1"/><rect stroke="none" x="22" y="134" width="1" height="1"/><rect stroke="none" x="24" y="134" width="1" height="1"/><rect stroke="none" x="1020" y="134" width="1" height="1"/><rect stroke="none" x="1018" y="134" width="1" height="1"/><rect stroke="none" x="22" y="147" width="1" height="1"/><rect stroke="none" x="24" y="147" width="1" height="1"/><rect stroke="none" x="26" y="147" width="1" height="1"/><rect stroke="none" x="1020" y="147" width="1" height="1"/><rect stroke="none" x="1018" y="147" width="1" height="1"/><rect stroke="none" x="1016" y="147" width="1" height="1"/><rect stroke="none" x="22" y="160" width="1" height="1"/><rect stroke="none" x="24" y="160" width="1" height="1"/><rect stroke="none" x="1020" y="160" width="1" height="1"/><rect stroke="none" x="1018" y="160" width="1" height="1"/><rect stroke="none" x="22" y="173" width="1" height="1"/><rect stroke="none" x="24" y="173" width="1" height="1"/><rect stroke="none" x="1020" y="173" width="1" height="1"/><rect stroke="none" x="1018" y="173" width="1" height="1"/><rect stroke="none" x="22" y="186" width="1" height="1"/><rect stroke="none" x="24" y="186" width="1" height="1"/><rect stroke="none" x="1020" y="186" width="1" height="1"/><rect stroke="none" x="1018" y="186" width="1" height="1"/><rect stroke="none" x="22" y="199" width="1" height="1"/><rect stroke="none" x="24" y="199" width="1" height="1"/><rect stroke="none" x="1020" y="199" width="1" height="1"/><rect stroke="none" x="1018" y="199" width="1" height="1"/><rect stroke="none" x="22" y="212" width="1" height="1"/><rect stroke="none" x="24" y="212" width="1" height="1"/><rect stroke="none" x="26" y="212" width="1" height="1"/><rect stroke="none" x="1020" y="212" width="1" height="1"/><rect stroke="none" x="1018" y="212" width="1" height="1"/><rect stroke="none" x="1016" y="212" width="1" height="1"/><rect stroke="none" x="22" y="225" width="1" height="1"/><rect stroke="none" x="24" y="225" width="1" height="1"/><rect stroke="none" x="1020" y="225" width="1" height="1"/><rect stroke="none" x="1018" y="225" width="1" height="1"/><rect stroke="none" x="22" y="238" width="1" height="1"/><rect stroke="none" x="24" y="238" width="1" height="1"/><rect stroke="none" x="1020" y="238" width="1" height="1"/><rect stroke="none" x="1018" y="238" width="1" height="1"/><rect stroke="none" x="22" y="251" width="1" height="1"/><rect stroke="none" x="24" y="251" width="1" height="1"/><rect stroke="none" x="1020" y="251" width="1" height="1"/><rect stroke="none" x="1018" y="251" width="1" height="1"/><rect stroke="none" x="22" y="264" width="1" height="1"/><rect stroke="none" x="24" y="264" width="1" height="1"/><rect stroke="none" x="1020" y="264" width="1" height="1"/><rect stroke="none" x="1018" y="264" width="1" height="1"/><rect stroke="none" x="22" y="277" width="1" height="1"/><rect stroke="none" x="24" y="277" width="1" height="1"/><rect stroke="none" x="26" y="277" width="1" height="1"/><rect stroke="none" x="1020" y="277" width="1" height="1"/><rect stroke="none" x="1018" y="277" width="1" height="1"/><rect stroke="none" x="1016" y="277" width="1" height="1"/><rect stroke="none" x="22" y="290" width="1" height="1"/><rect stroke="none" x="24" y="290" width="1" height="1"/><rect stroke="none" x="1020" y="290" width="1" height="1"/><rect stroke="none" x="1018" y="290" width="1" height="1"/><rect stroke="none" x="22" y="303" width="1" height="1"/><rect stroke="none" x="24" y="303" width="1" height="1"/><rect stroke="none" x="1020" y="303" width="1" height="1"/><rect stroke="none" x="1018" y="303" width="1" height="1"/><rect stroke="none" x="22" y="316" width="1" height="1"/><rect stroke="none" x="24" y="316" width="1" height="1"/><rect stroke="none" x="1020" y="316" width="1" height="1"/><rect stroke="none" x="1018" y="316" width="1" height="1"/><rect stroke="none" x="22" y="329" width="1" height="1"/><rect stroke="none" x="24" y="329" width="1" height="1"/><rect stroke="none" x="1020" y="329" width="1" height="1"/><rect stroke="none" x="1018" y="329" width="1" height="1"/><rect stroke="none" x="22" y="355" width="1" height="1"/><rect stroke="none" x="24" y="355" width="1" height="1"/><rect stroke="none" x="1020" y="355" width="1" height="1"/><rect stroke="none" x="1018" y="355" width="1" height="1"/><rect stroke="none" x="22" y="368" width="1" height="1"/><rect stroke="none" x="24" y="368" width="1" height="1"/><rect stroke="none" x="1020" y="368" width="1" height="1"/><rect stroke="none" x="1018" y="368" width="1" height="1"/><rect stroke="none" x="22" y="381" width="1" height="1"/><rect stroke="none" x="24" y="381" width="1" height="1"/><rect stroke="none" x="1020" y="381" width="1" height="1"/><rect stroke="none" x="1018" y="381" width="1" height="1"/><rect stroke="none" x="22" y="394" width="1" height="1"/><rect stroke="none" x="24" y="394" width="1" height="1"/><rect stroke="none" x="1020" y="394" width="1" height="1"/><rect stroke="none" x="1018" y="394" width="1" height="1"/><rect stroke="none" x="22" y="407" width="1" height="1"/><rect stroke="none" x="24" y="407" width="1" height="1"/><rect stroke="none" x="26" y="407" width="1" height="1"/><rect stroke="none" x="1020" y="407" width="1" height="1"/><rect stroke="none" x="1018" y="407" width="1" height="1"/><rect stroke="none" x="1016" y="407" width="1" height="1"/><rect stroke="none" x="22" y="420" width="1" height="1"/><rect stroke="none" x="24" y="420" width="1" height="1"/><rect stroke="none" x="1020" y="420" width="1" height="1"/><rect stroke="none" x="1018" y="420" width="1" height="1"/><rect stroke="none" x="22" y="433" width="1" height="1"/><rect stroke="none" x="24" y="433" width="1" height="1"/><rect stroke="none" x="1020" y="433" width="1" height="1"/><rect stroke="none" x="1018" y="433" width="1" height="1"/><rect stroke="none" x="22" y="446" width="1" height="1"/><rect stroke="none" x="24" y="446" width="1" height="1"/><rect stroke="none" x="1020" y="446" width="1" height="1"/><rect stroke="none" x="1018" y="446" width="1" height="1"/><rect stroke="none" x="22" y="459" width="1" height="1"/><rect stroke="none" x="24" y="459" width="1" height="1"/><rect stroke="none" x="1020" y="459" width="1" height="1"/><rect stroke="none" x="1018" y="459" width="1" height="1"/><rect stroke="none" x="22" y="472" width="1" height="1"/><rect stroke="none" x="24" y="472" width="1" height="1"/><rect stroke="none" x="26" y="472" width="1" height="1"/><rect stroke="none" x="1020" y="472" width="1" height="1"/><rect stroke="none" x="1018" y="472" width="1" height="1"/><rect stroke="none" x="1016" y="472" width="1" height="1"/><rect stroke="none" x="22" y="485" width="1" height="1"/><rect stroke="none" x="24" y="485" width="1" height="1"/><rect stroke="none" x="1020" y="485" width="1" height="1"/><rect stroke="none" x="1018" y="485" width="1" height="1"/><rect stroke="none" x="22" y="498" width="1" height="1"/><rect stroke="none" x="24" y="498" width="1" height="1"/><rect stroke="none" x="1020" y="498" width="1" height="1"/><rect stroke="none" x="1018" y="498" width="1" height="1"/><rect stroke="none" x="22" y="511" width="1" height="1"/><rect stroke="none" x="24" y="511" width="1" height="1"/><rect stroke="none" x="1020" y="511" width="1" height="1"/><rect stroke="none" x="1018" y="511" width="1" height="1"/><rect stroke="none" x="22" y="524" width="1" height="1"/><rect stroke="none" x="24" y="524" width="1" height="1"/><rect stroke="none" x="1020" y="524" width="1" height="1"/><rect stroke="none" x="1018" y="524" width="1" height="1"/><rect stroke="none" x="22" y="537" width="1" height="1"/><rect stroke="none" x="24" y="537" width="1" height="1"/><rect stroke="none" x="26" y="537" width="1" height="1"/><rect stroke="none" x="1020" y="537" width="1" height="1"/><rect stroke="none" x="1018" y="537" width="1" height="1"/><rect stroke="none" x="1016" y="537" width="1" height="1"/><rect stroke="none" x="22" y="550" width="1" height="1"/><rect stroke="none" x="24" y="550" width="1" height="1"/><rect stroke="none" x="1020" y="550" width="1" height="1"/><rect stroke="none" x="1018" y="550" width="1" height="1"/><rect stroke="none" x="22" y="563" width="1" height="1"/><rect stroke="none" x="24" y="563" width="1" height="1"/><rect stroke="none" x="1020" y="563" width="1" height="1"/><rect stroke="none" x="1018" y="563" width="1" height="1"/><rect stroke="none" x="22" y="576" width="1" height="1"/><rect stroke="none" x="24" y="576" width="1" height="1"/><rect stroke="none" x="1020" y="576" width="1" height="1"/><rect stroke="none" x="1018" y="576" width="1" height="1"/><rect stroke="none" x="22" y="589" width="1" height="1"/><rect stroke="none" x="24" y="589" width="1" height="1"/><rect stroke="none" x="1020" y="589" width="1" height="1"/><rect stroke="none" x="1018" y="589" width="1" height="1"/><rect stroke="none" x="22" y="602" width="1" height="1"/><rect stroke="none" x="24" y="602" width="1" height="1"/><rect stroke="none" x="26" y="602" width="1" height="1"/><rect stroke="none" x="1020" y="602" width="1" height="1"/><rect stroke="none" x="1018" y="602" width="1" height="1"/><rect stroke="none" x="1016" y="602" width="1" height="1"/><rect stroke="none" x="22" y="615" width="1" height="1"/><rect stroke="none" x="24" y="615" width="1" height="1"/><rect stroke="none" x="1020" y="615" width="1" height="1"/><rect stroke="none" x="1018" y="615" width="1" height="1"/><rect stroke="none" x="22" y="628" width="1" height="1"/><rect stroke="none" x="24" y="628" width="1" height="1"/><rect stroke="none" x="1020" y="628" width="1" height="1"/><rect stroke="none" x="1018" y="628" width="1" height="1"/><rect stroke="none" x="22" y="641" width="1" height="1"/><rect stroke="none" x="24" y="641" width="1" height="1"/><rect stroke="none" x="1020" y="641" width="1" height="1"/><rect stroke="none" x="1018" y="641" width="1" height="1"/><rect stroke="none" x="22" y="654" width="1" height="1"/><rect stroke="none" x="24" y="654" width="1" height="1"/><rect stroke="none" x="1020" y="654" width="1" height="1"/><rect stroke="none" x="1018" y="654" width="1" height="1"/></g>
<g clip-path="url(#cp)"><path d="M21.5 513.2V518.7M22.5 514.3V520.9M23.5 513.8V519.7M24.5 513.3V519.2M25.5 512.7V518.7M26.5 510.6V519.8M27.5 511.5V517.5M28.5 510.9V516.9M29.5 509.3V516.3M30.5 508.5V515.7M31.5 510.2V515.7M32.5 511.7V515.7M33.5 511.6V515.6M34.5 511.6V516.8M35.5 508.7V515.5M36.5 511.5V515.5M37.5 511.5V515.4M38.5 511.4V515.4M39.5 511.4V516.4M40.5 511.3V515.3M41.5 511.3V515.3M48.5 631.9V641.5M49.5 633.2V642.5M50.5 631.0V638.7M51.5 628.8V636.5M52.5 630.4V636.9M53.5 630.3V639.5M54.5 634.0V642.8M55.5 636.6V644.7M56.5 639.2V647.3M57.5 639.5V647.3M58.5 637.1V644.9M59.5 634.7V644.3M60.5 632.4V640.2M61.5 630.0V637.9M62.5 630.4V637.4M63.5 631.2V637.6M64.5 632.8V638.3M65.5 632.8V639.9M66.5 634.4V641.5M67.5 636.5V643.1M68.5 635.5V642.5M69.5 634.5V641.4M70.5 633.8V638.5M71.5 631.8V638.9M72.5 633.4V641.0M73.5 634.4V641.5M74.5 635.4V641.8M75.5 637.0V641.8M76.5 636.2V641.0M77.5 632.9V638.7M78.5 634.6V639.4M79.5 633.8V638.6M80.5 633.0V638.7M81.5 629.8V637.0M82.5 631.4V636.1M83.5 629.9V636.3M84.5 630.8V638.3M85.5 630.5V638.3M86.5 631.8V640.3M87.5 633.8V639.8M88.5 631.7V638.0M89.5 633.2V637.6M90.5 631.4V640.6M91.5 632.4V636.7M92.5 631.9V637.8M93.5 630.0V638.8M94.5 629.5V637.0M95.5 630.6V636.6M96.5 630.5V634.9M97.5 631.0V638.3M98.5 633.1V636.1M99.5 633.7V636.7M100.5 634.3V638.8M101.5 631.6V640.8M102.5 633.0V641.0M103.5 634.5V640.4M104.5 634.1V640.3M105.5 633.5V639.6M106.5 631.0V640.9M107.5 632.2V638.3M108.5 631.5V638.8M109.5 630.9V637.0M110.5 630.0V636.9M111.5 630.0V637.4M112.5 630.1V638.0M113.5 631.3V638.5M114.5 631.5V639.8M115.5 632.9V639.6M116.5 632.4V642.0M117.5 633.6V640.4M118.5 632.6V640.3M119.5 634.2V640.0M120.5 632.9V639.6M121.5 633.5V639.3M122.5 632.3V639.0M123.5 631.6V638.7M124.5 632.6V638.4M125.5 632.4V638.1M126.5 632.1V639.1M127.5 631.9V637.6M128.5 630.1V637.4M129.5 631.4V637.2M130.5 631.2V636.9M131.5 629.4V637.4M132.5 630.3V638.1M133.5 632.6V640.0M134.5 633.3V637.9M135.5 633.9V638.6M136.5 634.6V639.2M137.5 636.8V641.1M138.5 636.1V639.2M139.5 635.4V638.5M140.5 633.2V637.8M141.5 632.5V638.7M142.5 630.9V638.0M143.5 631.1V637.3M144.5 630.4V636.6M145.5 629.9V635.9M146.5 630.1V636.4M147.5 630.9V637.2M148.5 633.3V638.1M149.5 634.1V640.2M150.5 635.0V639.8M151.5 633.7V639.8M152.5 633.1V639.2M153.5 631.3V639.8M154.5 632.0V638.0M155.5 631.4V638.8M156.5 630.9V636.9M157.5 630.3V636.3M158.5 629.9V635.8M159.5 630.0V634.7M160.5 630.7V638.7M161.5 631.5V637.6M162.5 632.2V639.0M163.5 630.9V639.1M164.5 632.8V639.8M165.5 633.2V641.6M166.5 636.2V645.3M167.5 638.0V645.4M168.5 639.9V647.3M169.5 639.9V647.7M170.5 636.8V645.4M171.5 631.8V642.3M172.5 630.5V639.1M173.5 626.9V636.0M174.5 624.3V632.9M175.5 622.9V633.7M176.5 626.4V634.8M177.5 628.6V636.2M178.5 629.0V638.3M179.5 632.8V641.8M180.5 635.0V642.6M181.5 635.6V643.2M182.5 635.0V642.0M183.5 633.5V638.9M184.5 631.9V640.3M185.5 630.4V637.4M186.5 628.8V635.9M187.5 628.3V635.6M188.5 630.1V636.9M189.5 631.4V638.2M190.5 632.7V639.5M191.5 634.0V640.8M192.5 635.3V641.5M193.5 635.5V641.3M194.5 635.3V641.0M195.5 635.0V640.7M196.5 634.4V638.9M197.5 632.1V639.8M198.5 633.2V640.3M199.5 632.6V638.7M208.5 531.6V538.1M209.5 529.0V535.6M210.5 526.6V533.9M211.5 527.8V532.4M212.5 527.1V531.7M213.5 526.4V532.6M214.5 525.8V531.9M215.5 524.1V529.7M216.5 524.6V531.3M217.5 522.3V528.6M218.5 522.7V528.0M219.5 521.6V527.5M220.5 522.6V528.6M221.5 523.9V528.0M222.5 524.0V528.1M223.5 522.6V528.3M224.5 522.8V528.5M225.5 521.6V528.6M226.5 524.7V528.8M227.5 524.9V529.8M228.5 525.1V531.3M229.5 525.4V528.1M230.5 525.1V528.1M231.5 522.9V530.1M232.5 522.2V528.4M233.5 521.6V527.7M234.5 520.9V527.7M235.5 520.7V527.4M236.5 519.9V526.1M237.5 520.7V527.7M238.5 520.7V526.1M239.5 520.7V526.1M240.5 520.7V526.1M241.5 519.9V526.1M242.5 519.4V526.1M243.5 520.7V527.9M244.5 520.2V526.1M245.5 517.9V525.7M246.5 519.2V525.2M247.5 518.9V525.8M248.5 518.8V525.7M249.5 518.8V524.3M250.5 518.8V524.3M251.5 518.8V526.3M252.5 518.0V524.3M253.5 518.8V526.2M254.5 518.7V524.2M255.5 518.7V524.2M256.5 518.7V526.0M257.5 518.7V524.2M258.5 517.0V524.2M259.5 520.2V526.0M260.5 518.6V524.1M261.5 518.6V524.1M262.5 520.1V524.1M263.5 520.1V524.9M264.5 520.1V524.1M265.5 519.6V524.0M266.5 517.4V523.6M267.5 516.8V522.9M268.5 516.2V522.3M269.5 515.3V522.4M270.5 514.1V521.7M271.5 517.6V523.5M272.5 517.5V521.5M273.5 517.4V521.4M274.5 515.8V521.4M275.5 515.7V521.3M276.5 515.7V521.2M277.5 515.1V521.1M278.5 515.5V519.5M279.5 515.4V519.5M280.5 514.8V522.1M281.5 514.0V519.3M282.5 512.5V519.5M283.5 511.0V518.0M284.5 509.8V516.4M285.5 509.2V515.3M286.5 508.5V516.1M287.5 506.7V515.7M288.5 508.5V514.3M289.5 508.8V516.0M290.5 509.1V514.9M291.5 509.5V515.9M292.5 510.5V516.9M293.5 511.5V518.6M294.5 512.5V518.9M295.5 511.8V517.7M296.5 513.8V517.9M297.5 512.3V519.6M298.5 512.4V519.7M299.5 514.3V519.9M300.5 514.4V520.1M301.5 514.6V520.2M302.5 513.2V520.4M303.5 514.9V522.1M304.5 514.4V521.7M305.5 513.8V518.4M306.5 513.2V517.8M307.5 511.3V517.2M308.5 512.0V516.5M309.5 513.3V517.5M310.5 511.6V517.2M311.5 511.5V517.1M312.5 511.4V517.0M313.5 509.6V518.6M314.5 511.1V516.7M315.5 511.0V516.6M316.5 511.0V516.8M317.5 511.3V518.1M318.5 511.8V517.8M319.5 510.4V518.4M320.5 511.9V518.9M321.5 513.4V519.1M322.5 512.3V519.0M323.5 513.0V518.8M324.5 512.8V519.3M325.5 512.5V520.0M326.5 512.3V518.0M327.5 512.0V519.7M328.5 511.8V517.5M329.5 510.0V517.3M330.5 511.4V519.0M331.5 511.3V516.9M332.5 511.1V516.8M333.5 511.0V516.6M334.5 510.3V517.2M335.5 511.8V517.9M336.5 512.4V518.6M337.5 512.5V519.2M338.5 513.7V519.9M339.5 514.0V519.9M340.5 513.5V519.5M341.5 511.7V520.1M342.5 512.5V519.8M343.5 512.1V519.0M344.5 510.9V517.5M345.5 511.3V517.1M346.5 511.0V518.4M347.5 508.6V516.5M348.5 511.8V516.1M349.5 511.5V515.8M350.5 511.3V515.5M351.5 511.2V515.3M352.5 511.0V515.1M353.5 510.8V514.9M354.5 509.3V517.7M361.5 632.9V638.9M362.5 630.9V638.4M363.5 628.0V636.4M364.5 628.8V637.2M365.5 631.7V640.7M366.5 634.6V644.2M367.5 637.5V646.5M368.5 640.4V645.8M369.5 639.0V648.2M370.5 635.7V644.5M371.5 635.3V642.7M372.5 631.7V640.8M373.5 630.5V639.0M374.5 629.8V637.7M375.5 628.3V637.2M376.5 629.6V636.5M377.5 632.5V637.9M378.5 633.9V639.3M379.5 635.4V640.7M380.5 636.8V643.4M381.5 635.7V640.9M382.5 634.5V639.7M383.5 633.3V638.5M384.5 629.2V638.3M385.5 630.4V637.6M386.5 632.2V638.7M387.5 633.2V640.5M388.5 633.6V640.7M389.5 633.7V641.5M390.5 634.5V641.2M391.5 633.3V640.0M392.5 632.1V638.8M393.5 631.0V637.6M394.5 629.8V636.4M395.5 628.0V635.3M396.5 631.2V636.2M397.5 632.3V638.7M398.5 631.8V638.3M399.5 634.4V639.4M400.5 635.4V642.4M401.5 636.5V641.5M402.5 636.7V643.2M403.5 635.9V642.1M404.5 635.2V640.5M405.5 632.8V639.1M406.5 632.1V638.3M407.5 631.3V637.5M408.5 630.9V637.6M409.5 631.2V637.4M410.5 631.9V638.1M411.5 631.7V638.7M412.5 633.3V637.9M413.5 633.9V641.5M414.5 633.5V639.3M415.5 635.3V642.0M416.5 635.0V642.7M417.5 634.0V639.0M418.5 633.1V639.5M419.5 632.1V638.5M420.5 631.1V639.6M421.5 630.2V635.1M422.5 629.2V635.6M423.5 627.6V635.4M424.5 629.9V636.1M425.5 630.6V636.8M426.5 630.7V637.5M427.5 633.6V638.3M428.5 632.8V639.0M429.5 633.5V639.7M430.5 634.2V640.4M431.5 632.7V638.9M432.5 632.4V638.2M433.5 631.7V637.6M434.5 632.2V636.9M435.5 633.1V636.2M436.5 631.6V636.2M437.5 632.2V639.0M438.5 632.1V639.1M439.5 633.6V640.5M440.5 633.1V638.9M441.5 633.8V638.9M442.5 632.6V639.3M443.5 631.5V638.1M444.5 631.9V637.8M445.5 630.7V635.8M446.5 627.5V635.7M447.5 630.3V638.8M448.5 631.3V637.9M449.5 632.4V639.0M450.5 633.5V641.3M451.5 634.6V641.1M452.5 634.6V643.0M453.5 633.6V640.1M454.5 632.6V639.1M455.5 633.1V638.1M456.5 630.5V638.7M457.5 630.5V636.7M458.5 631.2V637.4M459.5 631.9V638.7M460.5 631.4V640.6M461.5 634.8V640.1M462.5 635.5V640.1M463.5 636.1V641.6M464.5 635.6V640.1M465.5 635.0V639.6M466.5 634.4V639.0M467.5 633.8V638.4M468.5 633.2V639.8M469.5 632.7V637.2M470.5 630.5V636.6M471.5 628.9V636.5M472.5 631.0V636.9M473.5 631.4V637.4M474.5 631.9V639.7M475.5 632.4V638.3M476.5 632.8V638.7M477.5 633.3V640.5M478.5 635.1V642.3M479.5 636.9V644.1M480.5 638.7V646.7M481.5 640.5V647.3M482.5 637.1V646.6M483.5 634.4V642.2M484.5 634.2V641.0M485.5 629.9V638.2M486.5 627.1V635.4M487.5 625.8V634.3M488.5 625.8V633.8M489.5 628.6V633.8M490.5 627.8V638.1M491.5 634.1V639.3M492.5 636.9V642.1M493.5 639.7V645.0M494.5 635.1V644.2M495.5 635.3V642.5M496.5 633.6V640.8M497.5 629.9V639.0M498.5 630.1V637.3M499.5 628.8V635.6M500.5 628.0V636.8M501.5 630.4V637.1M502.5 631.0V636.8M503.5 634.3V640.3M504.5 635.6V640.4M505.5 636.0V641.8M506.5 632.5V639.9M507.5 635.2V639.5M508.5 634.8V640.5M509.5 634.8V639.1M510.5 635.1V639.4M511.5 633.9V639.8M521.5 530.5V538.0M522.5 528.9V536.0M523.5 528.4V534.4M524.5 527.8V533.8M525.5 527.2V533.3M526.5 526.6V532.7M527.5 526.0V533.0M528.5 525.5V531.5M529.5 523.3V531.0M530.5 522.5V530.5M531.5 524.0V530.0M532.5 521.7V529.5M533.5 523.2V528.9M534.5 523.1V528.7M535.5 523.0V528.6M536.5 522.9V528.5M537.5 522.8V528.4M538.5 521.0V528.8M539.5 521.9V528.2M540.5 522.5V528.1M541.5 521.1V528.0M542.5 519.0V529.7M543.5 519.3V526.4M544.5 517.8V524.8M545.5 516.4V523.3M546.5 515.0V521.9M547.5 514.5V520.5M548.5 514.0V520.9M549.5 516.3V522.2M550.5 516.4V520.6M551.5 513.7V520.7M552.5 514.6V522.7M553.5 515.4V519.3M554.5 515.4V519.3M555.5 514.4V520.8M556.5 515.4V522.6M557.5 514.0V520.8M558.5 515.4V520.8M559.5 513.7V520.8M560.5 515.4V520.8M561.5 515.4V520.8M562.5 515.4V520.8M563.5 515.4V522.5M564.5 515.4V522.3M565.5 515.4V520.8M566.5 515.4V520.8M567.5 515.4V521.6M568.5 515.4V519.3M569.5 515.4V519.3M570.5 514.3V519.3M571.5 514.5V519.3M572.5 515.4V519.3M573.5 515.4V521.6M574.5 514.6V522.4M575.5 515.4V519.3M576.5 515.4V520.8M577.5 514.3V520.8M578.5 514.5V520.8M579.5 515.1V519.1M580.5 515.0V521.3M581.5 514.9V520.5M582.5 514.8V520.4M583.5 514.7V520.3M584.5 514.6V520.8M585.5 514.5V520.9M586.5 514.5V521.9M587.5 514.5V519.9M588.5 514.5V519.9M589.5 514.5V519.9M590.5 514.5V521.1M591.5 513.3V519.9M592.5 514.5V520.8M593.5 514.5V519.9M594.5 514.5V519.9M595.5 514.5V519.9M596.5 514.5V519.9M597.5 514.5V519.9M598.5 514.5V519.9M599.5 514.5V519.9M600.5 513.2V521.7M601.5 516.0V519.9M602.5 513.7V521.9M603.5 512.7V518.4M604.5 514.5V521.5M605.5 514.2V518.4M606.5 513.9V518.2M607.5 512.9V520.6M608.5 511.8V519.0M609.5 512.8V518.6M610.5 512.4V518.2M611.5 512.0V519.7M612.5 511.9V517.5M613.5 511.9V519.3M614.5 513.6V519.0M615.5 513.7V518.9M616.5 510.4V519.4M617.5 512.3V518.7M618.5 512.4V519.0M619.5 512.5V518.1M620.5 512.6V518.2M621.5 511.8V518.3M622.5 512.8V518.4M623.5 512.9V518.5M624.5 513.0V518.6M625.5 513.1V519.6M626.5 514.8V520.1M627.5 511.8V518.9M628.5 513.5V519.0M629.5 512.0V517.6M630.5 515.1V517.6M631.5 512.9V519.1M632.5 514.9V519.0M633.5 514.9V518.9M634.5 514.8V517.3M635.5 514.7V518.7M636.5 514.6V519.1M637.5 513.0V518.5M638.5 512.9V518.5M639.5 511.7V516.8M640.5 512.6V519.3M641.5 512.3V516.6M642.5 511.9V517.8M643.5 509.6V517.4M644.5 511.2V517.1M645.5 510.2V516.7M646.5 511.0V518.8M647.5 511.4V517.3M648.5 511.8V517.7M649.5 510.3V519.0M650.5 512.6V520.0M651.5 511.8V520.8M652.5 513.3V519.9M653.5 513.1V519.1M654.5 511.5V518.6M655.5 512.1V520.0M656.5 511.6V517.5M657.5 511.0V517.0M658.5 510.5V516.5M659.5 508.8V516.0M660.5 507.9V515.5M661.5 509.2V515.1M662.5 508.9V514.7M663.5 508.5V514.3M664.5 508.4V514.9M665.5 509.4V516.4M673.5 633.6V642.1M674.5 634.3V641.7M675.5 632.4V641.5M676.5 629.4V639.7M677.5 628.8V637.9M678.5 631.3V639.8M679.5 635.9V641.7M680.5 636.2V643.6M681.5 638.1V645.5M682.5 637.4V645.5M683.5 634.8V644.6M684.5 632.3V640.3M685.5 629.7V639.5M686.5 625.3V635.2M687.5 625.2V632.6M688.5 625.7V633.3M689.5 626.9V635.3M690.5 629.9V638.8M691.5 633.5V641.1M692.5 635.6V640.1M693.5 634.7V640.6M694.5 634.4V639.6M695.5 631.6V639.9M696.5 630.9V639.5M697.5 629.1V637.3M698.5 629.9V637.9M699.5 632.4V639.1M700.5 632.3V640.3M701.5 634.0V641.5M702.5 635.4V641.5M703.5 634.8V640.9M704.5 634.2V640.3M705.5 633.6V639.7M706.5 633.0V639.1M707.5 632.4V638.5M708.5 631.9V637.9M709.5 630.0V638.0M710.5 633.4V639.3M711.5 633.9V638.4M712.5 632.9V637.4M713.5 633.4V637.9M714.5 631.8V637.9M715.5 632.7V638.8M716.5 632.1V638.2M717.5 630.1V637.6M718.5 629.9V638.1M719.5 630.5V636.3M720.5 630.8V636.7M721.5 631.2V638.6M722.5 631.6V637.6M723.5 631.2V638.0M724.5 632.5V638.5M725.5 632.2V638.9M726.5 633.4V639.3M727.5 631.9V639.8M728.5 635.8V638.7M729.5 633.8V638.9M730.5 633.8V640.1M731.5 633.1V640.9M732.5 632.3V640.5M733.5 630.5V636.3M734.5 631.2V635.5M735.5 631.5V635.9M736.5 632.0V636.4M737.5 634.0V639.2M738.5 631.7V637.4M739.5 633.5V639.4M740.5 632.7V638.4M741.5 636.0V638.9M742.5 636.0V641.0M743.5 632.7V639.9M744.5 632.0V639.4M745.5 633.0V638.9M746.5 632.5V638.4M747.5 632.0V637.9M748.5 631.5V638.9M749.5 631.2V636.9M750.5 630.7V638.0M751.5 631.7V637.4M752.5 630.4V637.7M753.5 632.3V638.8M754.5 630.6V640.3M755.5 632.9V639.9M756.5 633.2V640.5M757.5 633.5V639.2M758.5 632.7V639.5M759.5 634.1V639.8M760.5 634.4V640.1M761.5 634.7V640.4M762.5 634.3V640.4M763.5 633.6V639.8M764.5 632.9V640.2M765.5 632.2V639.4M766.5 631.6V637.7M767.5 630.9V637.0M768.5 630.2V636.4M769.5 629.5V636.9M770.5 627.8V635.2M771.5 629.7V637.8M772.5 632.3V637.4M773.5 631.9V638.5M774.5 633.0V640.4M775.5 632.6V640.6M776.5 635.2V641.5M777.5 635.0V641.3M778.5 634.2V642.0M779.5 633.5V638.2M780.5 631.9V637.4M781.5 631.9V636.6M782.5 631.1V638.3M783.5 630.3V635.1M784.5 629.6V634.3M785.5 629.2V637.0M786.5 629.6V634.4M787.5 630.4V635.2M788.5 631.2V636.0M789.5 630.8V636.8M790.5 632.9V640.4M806.5 643.1V650.0M813.5 624.3V631.7M814.5 626.2V634.6M815.5 628.2V635.7M816.5 629.1V637.7M817.5 632.2V640.7M818.5 634.2V641.6M819.5 634.3V642.1M820.5 635.5V641.7M821.5 633.9V641.0M822.5 634.2V640.3M823.5 631.8V640.3M824.5 632.9V640.6M833.5 533.1V541.4M834.5 531.0V538.5M835.5 529.1V536.4M836.5 528.3V536.3M837.5 526.9V533.8M838.5 526.8V534.3M839.5 524.5V532.3M840.5 525.3V533.5M841.5 524.2V531.9M842.5 524.1V530.2M843.5 522.1V529.6M844.5 524.6V529.1M845.5 524.0V529.1M846.5 522.0V526.4M847.5 521.7V528.2M848.5 521.3V527.8M849.5 521.0V527.5M850.5 520.7V527.2M851.5 520.8V526.9M852.5 521.4V528.8M853.5 522.0V528.3M854.5 522.8V529.4M855.5 522.2V531.4M856.5 522.9V532.0M857.5 522.8V529.4M858.5 521.6V529.7M859.5 520.3V528.2M860.5 519.8V525.8M861.5 519.8V525.2M862.5 519.8V523.7M863.5 518.3V523.7M864.5 518.4V523.7M865.5 518.2V523.7M866.5 519.8V526.7M867.5 519.8V526.1M868.5 519.8V525.2M869.5 519.8V525.2M870.5 519.8V525.2M871.5 519.1V523.7M872.5 521.2V525.2M873.5 521.1V526.0M874.5 520.9V525.0M875.5 520.8V524.9M876.5 520.8V525.2M877.5 521.3V525.7M878.5 521.8V526.8M879.5 522.3V528.6M880.5 519.9V527.0M881.5 520.5V527.5M882.5 519.8V527.3M883.5 517.8V525.2M884.5 518.3V524.5M885.5 518.3V525.2M886.5 518.5V524.3M887.5 517.7V524.6M888.5 519.1V524.9M889.5 519.4V525.2M890.5 521.1V525.2M891.5 518.3V525.6M892.5 520.5V524.8M893.5 516.9V524.5M894.5 520.0V522.7M895.5 519.8V525.3M896.5 519.7V523.7M897.5 519.6V523.6M898.5 519.5V523.5M899.5 517.8V523.4M900.5 517.7V523.3M901.5 515.6V523.2M902.5 519.1V523.1M903.5 519.0V524.0M904.5 517.4V522.9M905.5 517.3V522.8M906.5 515.8V522.7M907.5 514.4V519.8M908.5 511.2V518.3M909.5 510.5V520.2M910.5 512.1V517.5M911.5 512.1V517.5M912.5 510.9V517.5M913.5 513.6V518.1M914.5 514.2V518.7M915.5 514.8V519.3M916.5 515.4V519.9M917.5 513.9V521.7M918.5 515.0V520.7M919.5 514.9V520.6M920.5 514.7V520.4M921.5 514.4V520.1M922.5 514.2V519.9M923.5 514.0V521.4M924.5 513.8V519.5M925.5 513.7V519.2M926.5 512.9V520.8M927.5 513.7V519.1M928.5 513.7V519.1M929.5 515.2V519.9M930.5 515.2V519.1M931.5 512.4V517.6M932.5 515.2V519.1M933.5 515.2V520.4M934.5 515.2V519.3M935.5 512.3V519.5M936.5 514.1V519.8M937.5 514.3V520.0M938.5 514.5V520.2M939.5 514.7V522.0M940.5 513.9V520.7M941.5 515.2V520.7M942.5 515.0V520.6M943.5 513.9V518.9M944.5 514.7V518.8M945.5 514.5V518.6M946.5 514.5V520.0M947.5 514.5V519.9M948.5 514.5V519.9M949.5 513.6V519.9M950.5 512.5V520.7M951.5 514.5V519.9M952.5 514.5V519.9M953.5 513.9V519.9M954.5 511.5V521.4M955.5 511.3V518.1M956.5 511.1V517.0M957.5 511.5V517.5M958.5 512.0V520.0M959.5 512.6V518.7M960.5 511.6V517.6M961.5 513.7V519.9M962.5 513.7V519.1M963.5 513.7V519.1M964.5 513.7V519.1M965.5 513.6V520.5M966.5 514.1V519.0M967.5 513.1V518.0M968.5 512.6V517.0M969.5 512.6V516.5M970.5 511.1V515.0M971.5 511.1V515.0M972.5 512.6V518.0M973.5 509.1V516.5M974.5 511.0V517.2M975.5 510.8V516.5M976.5 508.6V516.2M977.5 510.3V516.0M978.5 510.1V517.8M986.5 635.7V645.9M987.5 631.9V641.2M988.5 631.4V638.3M989.5 629.2V636.1M990.5 628.7V638.0M991.5 631.3V639.8M992.5 632.9V641.7M993.5 636.2V643.6M994.5 639.7V645.5M995.5 637.8V646.7M996.5 635.5V643.2M997.5 633.3V641.0M998.5 631.0V638.7M999.5 627.1V636.5M1000.5 624.8V634.2M1001.5 626.5V633.6M1002.5 627.5V633.8M1003.5 629.8V636.9M1004.5 629.9V638.6M1005.5 633.1V640.2M1006.5 634.7V641.5M1007.5 635.3V641.3M1008.5 636.3V640.8M1009.5 635.7V641.3M1010.5 633.7V640.5M1011.5 633.3V637.6M1012.5 633.3V637.2M1013.5 633.3V637.2M1014.5 632.2V637.2M1015.5 633.3V637.2M1016.5 633.3V637.2M1017.5 633.3V637.2M1018.5 633.3V638.7M1019.5 633.3V638.7M1020.5 633.3V638.7" stroke="#089810" stroke-width="1" fill="none" shape-rendering="crispEdges"/><path d="M41.5 512.2L42.5 518.6L43.5 534.9L44.5 556.6L45.5 584.8L46.5 612.6L47.5 630.5L48.5 637.9M199.5 635.7L200.5 629.2L201.5 614.2L202.5 593.6L203.5 577.6L204.5 563.2L205.5 554.5L206.5 546.7L207.5 540.1M354.5 512.6L355.5 524.8L356.5 547.8L357.5 575.1L358.5 604.2L359.5 627.2L360.5 637.4M511.5 636.9L512.5 631.3L513.5 619.7L514.5 607.5L515.5 595.1L516.5 579.3L517.5 562.1L518.5 549.8L519.5 542.1M666.5 515.2L667.5 525.3L668.5 543.8L669.5 567.2L670.5 589.5L671.5 610.3L672.5 629.8L673.5 638.1M796.5 637.8L797.5 632.7M825.5 633.7L826.5 622.5L827.5 602.8L828.5 581.2L829.5 567.4L830.5 555.5L831.5 547.5L832.5 541.5M979.5 514.1L980.5 528.0L981.5 552.2L982.5 580.9L983.5 611.3L984.5 629.5L985.5 640.0" stroke="#089010" stroke-width="1.15" fill="none" stroke-linejoin="round"/><path d="M21.5 517.6L22.5 517.4L23.5 517.0L24.5 516.3L25.5 515.6L26.5 514.8L27.5 514.4L28.5 513.6L29.5 513.1L30.5 512.8L31.5 513.2L32.5 513.2L33.5 513.2L34.5 512.7L35.5 512.9L36.5 512.6L37.5 512.9L38.5 512.5L39.5 512.6L40.5 512.3L41.5 512.2M48.5 637.9L49.5 636.8L50.5 634.7L51.5 632.4L52.5 632.7L53.5 635.4L54.5 638.0L55.5 640.9L56.5 643.5L57.5 643.5L58.5 640.9L59.5 638.4L60.5 636.3L61.5 634.1L62.5 632.2L63.5 633.1L64.5 634.5L65.5 636.1L66.5 637.7L67.5 638.1L68.5 637.4L69.5 636.4L70.5 635.5L71.5 635.7L72.5 636.6L73.5 637.5L74.5 638.4L75.5 638.7L76.5 637.8L77.5 637.1L78.5 636.2L79.5 635.6L80.5 634.7L81.5 634.0L82.5 633.3L83.5 633.3L84.5 634.2L85.5 635.1L86.5 635.9L87.5 636.9L88.5 636.5L89.5 636.1L90.5 635.7L91.5 635.4L92.5 635.0L93.5 634.5L94.5 634.1L95.5 633.9L96.5 633.5L97.5 634.0L98.5 634.3L99.5 634.7L100.5 635.2L101.5 636.0L102.5 636.9L103.5 637.9L104.5 637.5L105.5 636.9L106.5 635.8L107.5 635.3L108.5 634.3L109.5 633.5L110.5 633.4L111.5 634.0L112.5 634.7L113.5 635.3L114.5 636.1L115.5 636.7L116.5 637.4L117.5 637.8L118.5 637.6L119.5 637.3L120.5 636.8L121.5 636.4L122.5 636.2L123.5 636.0L124.5 635.8L125.5 635.5L126.5 635.1L127.5 634.9L128.5 634.3L129.5 634.4L130.5 634.1L131.5 634.5L132.5 635.1L133.5 635.8L134.5 636.4L135.5 637.1L136.5 637.8L137.5 638.2L138.5 637.6L139.5 636.7L140.5 636.3L141.5 635.5L142.5 635.1L143.5 634.4L144.5 634.0L145.5 633.4L146.5 633.6L147.5 634.3L148.5 635.3L149.5 636.1L150.5 636.8L151.5 636.9L152.5 636.4L153.5 635.9L154.5 635.2L155.5 634.5L156.5 633.7L157.5 632.7L158.5 632.3L159.5 632.9L160.5 633.8L161.5 634.7L162.5 635.4L163.5 636.2L164.5 636.8L165.5 638.0L166.5 639.7L167.5 641.6L168.5 643.4L169.5 644.0L170.5 641.3L171.5 638.0L172.5 634.9L173.5 631.6L174.5 628.5L175.5 628.0L176.5 630.2L177.5 632.4L178.5 634.5L179.5 636.6L180.5 638.7L181.5 639.7L182.5 638.5L183.5 637.0L184.5 635.8L185.5 634.1L186.5 632.2L187.5 631.8L188.5 633.3L189.5 635.0L190.5 636.3L191.5 637.3L192.5 638.5L193.5 638.6L194.5 638.5L195.5 638.1L196.5 637.7L197.5 637.2L198.5 636.3L199.5 635.7M207.5 540.1L208.5 535.4L209.5 533.5L210.5 531.7L211.5 530.7L212.5 530.0L213.5 529.5L214.5 528.7L215.5 527.9L216.5 527.5L217.5 527.3L218.5 527.0L219.5 526.3L220.5 525.5L221.5 525.2L222.5 525.5L223.5 525.6L224.5 525.8L225.5 525.5L226.5 525.8L227.5 526.0L228.5 526.3L229.5 526.4L230.5 526.3L231.5 525.9L232.5 525.4L233.5 524.9L234.5 524.0L235.5 523.8L236.5 523.5L237.5 523.7L238.5 523.5L239.5 523.5L240.5 523.8L241.5 524.0L242.5 524.0L243.5 523.7L244.5 523.1L245.5 522.5L246.5 522.0L247.5 521.6L248.5 521.6L249.5 521.6L250.5 521.6L251.5 521.4L252.5 521.3L253.5 521.3L254.5 521.6L255.5 521.6L256.5 521.7L257.5 521.4L258.5 521.5L259.5 521.0L260.5 521.2L261.5 521.2L262.5 521.6L263.5 521.6L264.5 521.6L265.5 521.3L266.5 520.7L267.5 520.0L268.5 519.3L269.5 518.9L270.5 519.0L271.5 519.0L272.5 519.2L273.5 519.0L274.5 519.0L275.5 518.6L276.5 518.6L277.5 518.4L278.5 518.6L279.5 518.5L280.5 518.4L281.5 517.6L282.5 516.1L283.5 514.6L284.5 513.0L285.5 512.1L286.5 511.8L287.5 511.5L288.5 511.9L289.5 511.7L290.5 511.8L291.5 512.4L292.5 513.5L293.5 514.8L294.5 515.7L295.5 516.5L296.5 516.8L297.5 516.9L298.5 517.1L299.5 517.0L300.5 517.3L301.5 517.4L302.5 517.9L303.5 517.9L304.5 517.7L305.5 517.0L306.5 516.3L307.5 515.6L308.5 514.8L309.5 514.4L310.5 514.3L311.5 514.4L312.5 514.7L313.5 514.7L314.5 514.6L315.5 514.1L316.5 514.0L317.5 514.3L318.5 514.6L319.5 515.3L320.5 515.7L321.5 516.3L322.5 515.9L323.5 515.8L324.5 515.9L325.5 515.6L326.5 515.3L327.5 514.9L328.5 514.6L329.5 514.3L330.5 514.2L331.5 513.9L332.5 513.9L333.5 513.5L334.5 514.1L335.5 514.5L336.5 515.3L337.5 515.8L338.5 516.7L339.5 516.8L340.5 516.4L341.5 516.0L342.5 515.6L343.5 515.2L344.5 514.6L345.5 514.2L346.5 514.0L347.5 513.5L348.5 513.3L349.5 512.9L350.5 512.6L351.5 512.5L352.5 512.3L353.5 512.2L354.5 512.6M360.5 637.4L361.5 636.6L362.5 634.8L363.5 632.8L364.5 633.3L365.5 636.2L366.5 639.1L367.5 641.8L368.5 644.2L369.5 643.1L370.5 641.1L371.5 639.1L372.5 637.0L373.5 635.4L374.5 633.5L375.5 632.2L376.5 633.0L377.5 634.1L378.5 635.7L379.5 637.1L380.5 638.4L381.5 637.6L382.5 636.3L383.5 635.1L384.5 633.8L385.5 634.1L386.5 635.5L387.5 636.5L388.5 637.7L389.5 638.4L390.5 637.5L391.5 636.4L392.5 635.1L393.5 634.2L394.5 633.0L395.5 631.9L396.5 632.8L397.5 633.9L398.5 634.9L399.5 635.7L400.5 636.6L401.5 638.0L402.5 638.2L403.5 637.5L404.5 636.7L405.5 635.8L406.5 635.0L407.5 634.0L408.5 633.3L409.5 633.5L410.5 634.5L411.5 635.4L412.5 636.6L413.5 637.0L414.5 637.7L415.5 638.1L416.5 638.1L417.5 637.3L418.5 636.3L419.5 635.3L420.5 633.9L421.5 632.8L422.5 632.1L423.5 632.4L424.5 633.4L425.5 633.9L426.5 634.5L427.5 634.9L428.5 635.8L429.5 636.5L430.5 637.4L431.5 637.6L432.5 636.8L433.5 636.2L434.5 635.1L435.5 634.6L436.5 634.5L437.5 635.3L438.5 635.9L439.5 636.9L440.5 637.5L441.5 637.2L442.5 635.7L443.5 634.6L444.5 633.4L445.5 632.3L446.5 632.2L447.5 633.5L448.5 634.6L449.5 635.7L450.5 636.9L451.5 637.9L452.5 638.0L453.5 637.1L454.5 636.2L455.5 635.0L456.5 633.6L457.5 633.5L458.5 634.1L459.5 635.0L460.5 635.5L461.5 636.1L462.5 636.7L463.5 637.2L464.5 636.8L465.5 636.3L466.5 635.6L467.5 635.1L468.5 634.6L469.5 633.9L470.5 633.3L471.5 633.1L472.5 633.7L473.5 633.9L474.5 634.4L475.5 634.9L476.5 635.6L477.5 636.6L478.5 638.7L479.5 640.3L480.5 642.4L481.5 644.0L482.5 642.5L483.5 639.7L484.5 637.0L485.5 634.3L486.5 631.5L487.5 628.4L488.5 628.4L489.5 631.1L490.5 633.8L491.5 636.7L492.5 639.6L493.5 641.9L494.5 640.9L495.5 639.2L496.5 637.6L497.5 635.6L498.5 634.0L499.5 632.4L500.5 632.6L501.5 633.5L502.5 634.5L503.5 636.1L504.5 637.5L505.5 637.6L506.5 637.1L507.5 636.7L508.5 636.2L509.5 636.2L510.5 636.4L511.5 636.9M519.5 542.1L520.5 537.4L521.5 533.9L522.5 532.1L523.5 531.3L524.5 530.9L525.5 530.4L526.5 530.0L527.5 529.3L528.5 528.7L529.5 528.2L530.5 527.6L531.5 527.1L532.5 526.3L533.5 525.9L534.5 525.7L535.5 525.8L536.5 525.9L537.5 526.2L538.5 526.1L539.5 525.8L540.5 525.5L541.5 525.3L542.5 524.5L543.5 522.8L544.5 521.2L545.5 519.7L546.5 518.5L547.5 517.4L548.5 517.4L549.5 517.5L550.5 517.7L551.5 517.8L552.5 517.7L553.5 517.9L554.5 518.1L555.5 518.3L556.5 518.1L557.5 518.0L558.5 518.0L559.5 517.9L560.5 518.0L561.5 517.7L562.5 517.9L563.5 517.9L564.5 518.2L565.5 517.9L566.5 518.1L567.5 517.8L568.5 518.2L569.5 518.1L570.5 518.2L571.5 518.1L572.5 518.1L573.5 518.1L574.5 518.1L575.5 518.0L576.5 518.1L577.5 517.9L578.5 518.0L579.5 517.9L580.5 517.7L581.5 517.3L582.5 517.4L583.5 517.8L584.5 517.8L585.5 517.3L586.5 517.0L587.5 517.1L588.5 517.4L589.5 517.4L590.5 517.1L591.5 517.2L592.5 517.2L593.5 517.3L594.5 517.3L595.5 517.5L596.5 517.5L597.5 517.5L598.5 517.0L599.5 517.2L600.5 517.2L601.5 517.5L602.5 517.0L603.5 516.9L604.5 516.9L605.5 517.3L606.5 517.2L607.5 516.9L608.5 516.3L609.5 516.1L610.5 515.5L611.5 514.9L612.5 514.3L613.5 514.4L614.5 514.6L615.5 514.9L616.5 514.9L617.5 515.0L618.5 515.0L619.5 515.5L620.5 515.5L621.5 516.1L622.5 516.1L623.5 516.1L624.5 516.0L625.5 516.0L626.5 516.1L627.5 516.1L628.5 516.1L629.5 516.5L630.5 516.3L631.5 516.2L632.5 516.1L633.5 516.1L634.5 516.0L635.5 515.8L636.5 515.6L637.5 515.7L638.5 515.3L639.5 515.5L640.5 515.4L641.5 515.5L642.5 515.0L643.5 514.5L644.5 514.4L645.5 513.8L646.5 514.2L647.5 514.3L648.5 515.0L649.5 515.3L650.5 515.5L651.5 515.7L652.5 515.8L653.5 515.8L654.5 515.2L655.5 515.2L656.5 514.7L657.5 514.1L658.5 513.3L659.5 512.8L660.5 512.3L661.5 512.1L662.5 511.6L663.5 511.3L664.5 511.1L665.5 512.7L666.5 515.2M673.5 638.1L674.5 637.6L675.5 635.9L676.5 634.3L677.5 634.6L678.5 636.5L679.5 638.2L680.5 640.0L681.5 641.9L682.5 641.5L683.5 639.0L684.5 636.3L685.5 633.9L686.5 631.4L687.5 628.9L688.5 629.5L689.5 631.1L690.5 633.2L691.5 635.3L692.5 637.6L693.5 638.8L694.5 637.8L695.5 636.4L696.5 634.9L697.5 633.7L698.5 634.3L699.5 635.6L700.5 636.7L701.5 638.1L702.5 638.7L703.5 638.3L704.5 637.6L705.5 636.9L706.5 636.1L707.5 635.5L708.5 634.9L709.5 634.4L710.5 634.7L711.5 635.3L712.5 636.0L713.5 636.4L714.5 636.7L715.5 635.8L716.5 635.3L717.5 634.5L718.5 633.9L719.5 633.4L720.5 633.6L721.5 633.7L722.5 634.2L723.5 634.5L724.5 635.3L725.5 635.8L726.5 636.5L727.5 637.2L728.5 637.7L729.5 638.0L730.5 637.3L731.5 636.5L732.5 635.5L733.5 634.7L734.5 634.2L735.5 634.7L736.5 635.1L737.5 635.3L738.5 635.8L739.5 636.6L740.5 637.3L741.5 637.4L742.5 637.2L743.5 636.5L744.5 636.1L745.5 635.8L746.5 635.3L747.5 635.0L748.5 634.5L749.5 634.2L750.5 634.4L751.5 634.8L752.5 634.8L753.5 635.2L754.5 635.5L755.5 636.0L756.5 636.2L757.5 636.2L758.5 636.6L759.5 636.7L760.5 637.1L761.5 637.5L762.5 637.3L763.5 636.9L764.5 636.1L765.5 635.7L766.5 634.7L767.5 633.8L768.5 633.0L769.5 632.5L770.5 631.8L771.5 632.5L772.5 633.7L773.5 635.3L774.5 636.4L775.5 637.4L776.5 638.4L777.5 638.1L778.5 637.3L779.5 636.6L780.5 635.8L781.5 635.0L782.5 634.3L783.5 633.6L784.5 633.0L785.5 632.0L786.5 632.5L787.5 633.2L788.5 634.2L789.5 635.1L790.5 636.1L791.5 639.3L792.5 642.5L793.5 645.9L794.5 646.8L795.5 642.4L796.5 637.8M797.5 632.7L798.5 628.0L799.5 623.4L800.5 623.3L801.5 627.0L802.5 630.9L803.5 634.8L804.5 639.0L805.5 642.7L806.5 645.9L807.5 644.5L808.5 641.2L809.5 638.2L810.5 635.1L811.5 631.9L812.5 628.4L813.5 627.6L814.5 629.5L815.5 631.9L816.5 633.8L817.5 636.0L818.5 637.9L819.5 639.2L820.5 638.7L821.5 637.9L822.5 637.3L823.5 636.4L824.5 635.7L825.5 633.7M832.5 541.5L833.5 537.1L834.5 534.7L835.5 532.9L836.5 531.7L837.5 531.0L838.5 529.7L839.5 528.8L840.5 528.1L841.5 527.7L842.5 527.3L843.5 527.0L844.5 526.4L845.5 525.8L846.5 525.0L847.5 524.6L848.5 524.3L849.5 524.0L850.5 523.7L851.5 523.7L852.5 524.4L853.5 525.1L854.5 526.2L855.5 527.2L856.5 527.1L857.5 525.9L858.5 524.9L859.5 523.6L860.5 522.6L861.5 522.3L862.5 522.5L863.5 522.5L864.5 523.1L865.5 523.2L866.5 523.0L867.5 522.6L868.5 522.3L869.5 522.6L870.5 522.6L871.5 522.5L872.5 522.5L873.5 522.4L874.5 522.3L875.5 522.1L876.5 522.4L877.5 522.9L878.5 523.3L879.5 523.6L880.5 523.8L881.5 523.3L882.5 522.7L883.5 522.0L884.5 521.4L885.5 521.2L886.5 521.5L887.5 521.7L888.5 521.9L889.5 522.1L890.5 522.2L891.5 522.2L892.5 521.7L893.5 521.5L894.5 520.8L895.5 520.7L896.5 520.7L897.5 520.8L898.5 520.9L899.5 520.6L900.5 520.5L901.5 520.1L902.5 520.2L903.5 520.1L904.5 520.0L905.5 519.9L906.5 519.3L907.5 517.9L908.5 516.5L909.5 515.0L910.5 514.6L911.5 514.4L912.5 514.3L913.5 514.7L914.5 515.2L915.5 516.0L916.5 516.6L917.5 517.3L918.5 517.6L919.5 517.6L920.5 517.5L921.5 517.4L922.5 517.3L923.5 517.3L924.5 516.9L925.5 516.6L926.5 516.2L927.5 516.2L928.5 516.0L929.5 516.2L930.5 516.4L931.5 516.4L932.5 516.4L933.5 516.5L934.5 516.7L935.5 517.0L936.5 517.2L937.5 517.3L938.5 517.2L939.5 517.3L940.5 517.6L941.5 518.0L942.5 518.1L943.5 517.9L944.5 517.5L945.5 517.3L946.5 517.2L947.5 517.2L948.5 516.9L949.5 516.9L950.5 517.1L951.5 517.4L952.5 517.2L953.5 517.3L954.5 515.9L955.5 514.7L956.5 513.9L957.5 514.8L958.5 515.2L959.5 515.7L960.5 516.4L961.5 516.7L962.5 516.5L963.5 516.6L964.5 516.3L965.5 516.4L966.5 515.4L967.5 514.6L968.5 513.7L969.5 513.7L970.5 513.6L971.5 513.7L972.5 513.8L973.5 514.0L974.5 514.0L975.5 513.7L976.5 513.4L977.5 513.0L978.5 512.8L979.5 514.1M985.5 640.0L986.5 639.6L987.5 636.9L988.5 634.0L989.5 632.4L990.5 634.3L991.5 636.5L992.5 638.4L993.5 640.1L994.5 641.8L995.5 641.4L996.5 639.0L997.5 636.9L998.5 634.7L999.5 632.7L1000.5 630.6L1001.5 630.4L1002.5 632.1L1003.5 633.5L1004.5 634.9L1005.5 636.7L1006.5 638.4L1007.5 638.8L1008.5 638.0L1009.5 637.1L1010.5 636.6L1011.5 635.8L1012.5 635.9L1013.5 635.6L1014.5 635.9L1015.5 636.1L1016.5 636.2L1017.5 635.9L1018.5 635.9L1019.5 635.6L1020.5 635.9" stroke="#10e020" stroke-width="1.8" fill="none" stroke-linejoin="round"/><path d="M21.5 492.8V498.0M22.5 490.1V494.2M23.5 490.1V494.2M24.5 488.8V496.9M25.5 490.1V496.9M26.5 490.1V496.9M27.5 488.9V496.9M28.5 490.1V496.9M29.5 487.6V496.9M30.5 490.1V496.9M31.5 488.0V496.9M32.5 490.1V496.9M33.5 490.1V496.9M34.5 490.1V498.4M35.5 490.1V496.9M36.5 490.1V496.9M37.5 490.1V498.5M38.5 490.1V496.9M39.5 490.1V496.9M48.5 355.0V364.4M49.5 354.6V360.9M50.5 352.9V361.4M51.5 354.6V361.4M52.5 352.4V359.4M53.5 354.7V361.5M54.5 353.6V363.5M55.5 354.7V363.2M56.5 353.8V359.5M57.5 354.8V363.2M58.5 354.8V363.1M59.5 354.0V361.6M60.5 353.3V361.6M61.5 354.9V361.7M62.5 354.9V362.4M63.5 354.9V362.9M64.5 354.9V361.7M65.5 355.0V361.8M66.5 353.7V363.7M67.5 355.0V362.5M68.5 357.0V361.8M69.5 357.1V361.8M70.5 355.1V361.9M71.5 355.1V361.9M72.5 355.1V364.1M73.5 357.4V367.1M77.5 367.1V378.6M78.5 373.8V380.8M79.5 374.0V379.9M80.5 373.6V379.4M81.5 372.6V378.4M82.5 369.5V379.4M83.5 371.9V379.7M84.5 371.7V378.6M85.5 369.8V378.5M86.5 370.3V380.0M87.5 371.2V379.4M88.5 371.1V378.0M89.5 370.9V375.8M90.5 370.9V375.7M91.5 370.8V377.6M92.5 370.8V377.6M93.5 369.8V377.5M94.5 370.7V377.5M95.5 370.6V379.1M96.5 370.6V377.4M97.5 370.5V377.3M98.5 368.9V377.3M99.5 372.4V377.2M100.5 370.4V377.2M101.5 370.3V377.1M102.5 370.3V378.5M103.5 370.3V377.1M104.5 370.2V379.5M105.5 370.2V377.0M106.5 370.1V379.2M107.5 370.1V376.9M108.5 370.1V378.8M109.5 370.0V376.8M110.5 370.0V376.8M111.5 369.9V376.7M112.5 369.9V376.7M113.5 369.9V376.7M114.5 369.8V378.5M115.5 369.8V378.8M116.5 369.7V376.5M117.5 369.7V374.5M118.5 369.7V376.5M119.5 368.9V376.4M120.5 369.6V376.4M121.5 369.5V376.3M122.5 369.5V377.5M123.5 368.4V378.8M124.5 368.2V376.2M125.5 369.3V376.2M126.5 369.2V376.1M127.5 367.5V376.0M128.5 368.9V375.8M129.5 368.8V375.7M130.5 366.4V375.6M131.5 368.6V375.5M132.5 367.2V375.4M133.5 368.3V375.2M134.5 368.2V375.1M135.5 368.1V375.0M136.5 369.0V377.3M137.5 367.9V375.0M138.5 362.4V375.3M139.5 361.8V372.9M140.5 361.2V370.4M141.5 361.2V369.2M142.5 359.2V369.8M143.5 358.8V366.8M144.5 357.6V366.3M145.5 357.2V366.7M146.5 356.8V366.6M147.5 356.4V364.8M148.5 356.0V365.6M149.5 353.5V362.8M150.5 355.4V365.0M151.5 355.1V362.1M152.5 353.5V361.9M153.5 354.6V361.6M154.5 353.8V361.4M155.5 351.8V361.3M156.5 354.3V361.2M157.5 354.2V362.9M158.5 354.1V363.2M159.5 351.6V360.9M160.5 352.5V362.1M161.5 353.9V358.7M162.5 352.9V361.4M163.5 353.9V360.7M164.5 354.0V360.9M165.5 351.5V361.0M166.5 354.2V363.6M167.5 353.3V359.2M168.5 354.4V361.3M169.5 354.5V361.4M170.5 354.6V361.6M171.5 352.4V361.7M172.5 353.9V364.5M173.5 353.0V362.1M174.5 355.3V360.3M175.5 355.5V360.5M176.5 355.7V360.6M177.5 355.9V360.8M178.5 356.1V363.0M179.5 356.2V363.2M180.5 356.4V363.3M181.5 356.6V363.5M182.5 356.7V366.0M183.5 356.9V364.9M184.5 357.0V366.2M185.5 357.2V366.2M186.5 357.3V364.2M187.5 359.5V364.4M188.5 359.6V364.5M189.5 356.1V364.7M190.5 357.9V366.2M191.5 356.6V366.0M192.5 356.0V365.2M193.5 358.4V365.3M194.5 358.6V363.5M195.5 358.7V367.0M196.5 357.6V365.8M197.5 359.0V367.2M198.5 360.4V370.8M199.5 363.1V372.9M201.5 367.9V380.4M202.5 372.1V380.9M203.5 374.1V382.3M204.5 375.5V384.7M212.5 497.9V508.4M215.5 491.6V500.3M216.5 490.6V496.4M217.5 490.1V495.4M218.5 490.1V494.9M219.5 490.1V494.9M220.5 487.6V494.9M221.5 490.1V494.9M222.5 488.8V496.9M223.5 489.3V496.9M224.5 490.1V496.9M225.5 490.1V496.9M226.5 490.1V498.0M227.5 488.7V496.9M228.5 490.1V497.7M229.5 488.4V496.9M230.5 490.1V496.9M231.5 490.1V496.9M232.5 492.1V496.9M233.5 488.7V496.9M234.5 492.1V499.0M235.5 490.1V497.7M236.5 490.1V496.9M237.5 490.1V496.9M238.5 490.1V496.9M239.5 490.1V494.9M240.5 490.1V494.9M241.5 490.1V494.9M242.5 490.1V496.9M243.5 490.1V496.9M244.5 490.1V496.9M245.5 490.1V496.9M246.5 490.1V496.9M247.5 490.1V496.9M248.5 490.1V499.2M249.5 490.1V494.9M250.5 490.1V498.5M251.5 490.1V496.9M252.5 490.1V496.9M253.5 488.8V498.6M254.5 490.1V496.9M255.5 490.1V496.9M256.5 490.1V499.3M257.5 490.1V496.9M258.5 488.1V496.9M259.5 492.1V496.9M260.5 490.1V496.9M261.5 490.1V496.9M262.5 492.1V496.9M263.5 492.1V496.9M264.5 490.1V496.9M265.5 490.1V496.9M266.5 489.3V497.7M267.5 490.1V497.9M268.5 490.1V498.3M269.5 490.1V496.9M270.5 490.1V496.9M271.5 489.1V496.9M272.5 490.1V496.9M273.5 489.2V499.4M274.5 490.1V496.9M275.5 490.1V496.9M276.5 490.1V498.0M277.5 490.1V497.8M278.5 490.1V496.9M279.5 492.1V496.9M280.5 490.1V496.9M281.5 490.1V499.0M282.5 490.1V496.9M283.5 488.8V496.9M284.5 490.1V496.9M285.5 490.1V496.9M286.5 488.6V496.9M287.5 490.1V496.9M288.5 490.1V498.0M289.5 488.3V496.9M290.5 490.1V494.9M291.5 490.1V494.9M292.5 490.1V496.9M293.5 490.1V496.9M294.5 490.1V496.9M295.5 490.1V496.9M296.5 490.1V494.9M297.5 490.1V494.9M298.5 487.6V494.9M299.5 492.1V494.9M300.5 492.1V494.9M301.5 492.1V496.9M302.5 489.3V496.9M303.5 492.1V496.9M304.5 490.1V498.7M305.5 490.1V498.0M306.5 490.1V498.2M307.5 492.1V496.9M308.5 492.1V496.9M309.5 492.1V499.0M310.5 492.1V496.9M311.5 492.1V496.9M312.5 492.1V499.0M313.5 487.5V496.9M314.5 488.3V496.9M315.5 492.1V496.9M316.5 492.1V496.9M317.5 487.7V498.8M318.5 490.1V494.9M319.5 492.1V494.9M320.5 488.3V494.9M321.5 490.1V494.9M322.5 490.1V496.9M323.5 490.1V496.9M324.5 490.1V496.9M325.5 490.1V498.1M326.5 490.1V496.9M327.5 490.1V496.9M328.5 488.4V496.9M329.5 487.9V496.9M330.5 490.1V497.6M331.5 490.1V496.9M332.5 490.1V497.8M333.5 490.1V496.9M334.5 488.1V496.9M335.5 490.1V496.9M336.5 490.1V496.9M337.5 488.8V496.9M338.5 490.1V496.9M339.5 490.1V496.9M340.5 488.9V496.9M341.5 490.1V496.9M342.5 490.1V496.9M343.5 489.3V496.9M344.5 488.6V499.2M345.5 490.1V496.9M346.5 490.1V496.9M347.5 490.1V496.9M348.5 489.0V498.2M349.5 490.1V496.9M350.5 490.1V496.9M351.5 488.6V498.9M352.5 492.1V498.1M361.5 353.3V363.6M362.5 354.6V362.1M363.5 354.6V361.4M364.5 354.6V361.4M365.5 354.7V361.5M366.5 353.9V361.5M367.5 352.9V361.5M368.5 354.7V361.5M369.5 354.8V361.6M370.5 354.1V361.6M371.5 354.8V363.9M372.5 354.8V363.7M373.5 354.9V359.6M374.5 354.9V359.7M375.5 354.9V361.7M376.5 354.9V361.7M377.5 354.9V361.7M378.5 355.0V361.8M379.5 355.0V361.8M380.5 355.0V361.8M381.5 357.0V361.8M382.5 357.1V363.4M383.5 357.1V359.9M384.5 357.1V363.0M385.5 356.2V365.3M386.5 358.5V368.1M389.5 370.0V377.5M390.5 372.7V379.7M391.5 374.9V381.9M392.5 374.1V381.9M393.5 373.1V382.6M394.5 372.1V381.6M395.5 374.0V378.9M396.5 373.8V378.7M397.5 373.6V378.6M398.5 373.5V378.4M399.5 368.7V378.2M400.5 373.2V380.4M401.5 373.0V377.9M402.5 372.9V377.8M403.5 372.9V377.7M404.5 372.8V377.6M405.5 369.0V377.6M406.5 372.7V377.5M407.5 370.6V377.5M408.5 370.6V377.4M409.5 370.5V378.2M410.5 370.5V377.3M411.5 370.4V377.3M412.5 369.2V377.2M413.5 368.3V377.2M414.5 370.3V377.9M415.5 370.3V377.1M416.5 370.2V377.0M417.5 370.2V375.0M418.5 370.2V375.0M419.5 370.1V374.9M420.5 370.1V374.9M421.5 370.0V374.8M422.5 370.0V376.8M423.5 370.0V376.8M424.5 369.9V378.5M425.5 371.9V376.7M426.5 371.8V376.6M427.5 369.8V376.6M428.5 371.8V377.5M429.5 371.7V376.5M430.5 371.7V376.5M431.5 367.8V376.4M432.5 369.6V377.2M433.5 369.6V376.4M434.5 369.5V376.3M435.5 369.5V376.3M436.5 369.4V376.2M437.5 369.4V374.2M438.5 369.2V377.8M439.5 369.1V376.0M440.5 369.0V377.8M441.5 368.9V377.1M442.5 366.5V375.7M443.5 368.6V375.5M444.5 368.5V375.4M445.5 367.2V375.3M446.5 366.4V375.2M447.5 368.2V375.1M448.5 367.5V376.5M449.5 366.4V374.3M450.5 365.3V375.4M451.5 364.2V372.1M452.5 360.5V371.0M453.5 361.8V367.8M454.5 360.6V366.6M455.5 358.4V365.4M456.5 358.2V364.2M457.5 357.4V363.0M458.5 357.0V362.2M459.5 356.6V363.8M460.5 356.2V363.4M461.5 354.2V363.0M462.5 355.5V362.6M463.5 353.3V362.3M464.5 355.0V362.0M465.5 354.7V361.8M466.5 352.8V359.5M467.5 354.5V359.3M468.5 354.4V361.2M469.5 353.1V361.2M470.5 354.2V361.1M471.5 354.1V361.0M472.5 354.0V361.9M473.5 353.9V360.8M474.5 353.8V360.7M475.5 353.8V360.7M476.5 353.9V360.8M477.5 354.0V360.9M478.5 354.1V362.1M479.5 354.2V361.1M480.5 353.1V361.2M481.5 354.5V361.3M482.5 354.6V362.6M483.5 352.5V361.7M484.5 353.7V359.8M485.5 355.1V360.0M486.5 355.2V362.2M487.5 355.4V363.1M488.5 355.6V362.6M489.5 355.8V362.7M490.5 356.0V362.9M491.5 356.1V363.1M492.5 355.3V363.3M493.5 358.5V361.4M494.5 358.7V361.5M495.5 358.8V363.7M496.5 355.1V363.9M497.5 357.1V366.5M498.5 359.3V364.2M499.5 357.4V364.3M500.5 357.5V365.9M501.5 355.0V364.6M502.5 357.8V364.8M503.5 356.6V364.9M504.5 358.2V366.0M505.5 358.3V365.2M506.5 357.6V365.4M507.5 357.4V365.6M508.5 356.5V365.7M509.5 359.0V365.9M510.5 359.1V368.5M511.5 361.8V371.2M513.5 367.9V375.8M514.5 371.0V377.8M515.5 373.1V382.8M516.5 374.8V384.3M527.5 492.1V502.2M528.5 491.1V496.9M529.5 490.1V499.8M530.5 490.1V494.9M531.5 492.1V496.9M532.5 489.0V497.8M533.5 488.4V498.8M534.5 490.1V496.9M535.5 490.1V498.3M536.5 490.1V498.6M537.5 490.1V496.9M538.5 490.1V496.9M539.5 489.0V496.9M540.5 490.1V496.9M541.5 490.1V496.9M542.5 490.1V496.9M543.5 490.1V496.9M544.5 490.1V498.7M545.5 490.1V496.9M546.5 490.1V496.9M547.5 490.1V496.9M548.5 490.1V496.9M549.5 487.6V496.9M550.5 490.1V496.9M551.5 490.1V496.9M552.5 490.1V496.9M553.5 490.1V496.9M554.5 490.1V496.9M555.5 490.1V496.9M556.5 488.7V496.9M557.5 490.1V496.9M558.5 492.1V499.0M559.5 489.4V496.9M560.5 490.1V496.9M561.5 490.1V496.9M562.5 488.6V499.3M563.5 490.1V496.9M564.5 490.1V499.5M565.5 490.1V496.9M566.5 490.1V499.5M567.5 490.1V496.9M568.5 490.1V496.9M569.5 490.1V498.8M570.5 490.1V496.9M571.5 490.1V496.9M572.5 490.1V496.9M573.5 492.1V496.9M574.5 492.1V498.0M575.5 492.1V496.9M576.5 492.1V496.9M577.5 489.1V494.9M578.5 490.1V494.9M579.5 487.9V494.9M580.5 490.1V494.9M581.5 490.1V496.9M582.5 490.1V496.9M583.5 490.1V498.7M584.5 490.1V496.9M585.5 490.1V498.6M586.5 489.0V496.9M587.5 487.9V496.9M588.5 490.1V497.9M589.5 490.1V498.6M590.5 490.1V496.9M591.5 488.4V496.9M592.5 490.1V497.7M593.5 490.1V497.8M594.5 490.1V496.9M595.5 490.1V496.9M596.5 490.1V496.9M597.5 492.1V496.9M598.5 492.1V499.5M599.5 492.1V496.9M600.5 492.1V496.9M601.5 492.1V496.9M602.5 488.9V498.6M603.5 490.1V498.6M604.5 488.8V496.9M605.5 492.1V496.9M606.5 489.0V496.9M607.5 487.5V496.9M608.5 489.1V496.9M609.5 490.1V496.9M610.5 489.4V498.1M611.5 490.1V496.9M612.5 490.1V496.9M613.5 490.1V496.9M614.5 490.1V498.3M615.5 488.5V496.9M616.5 490.1V496.9M617.5 490.1V499.4M618.5 490.1V496.9M619.5 490.1V499.0M620.5 490.1V496.9M621.5 488.1V498.1M622.5 490.1V496.9M623.5 490.1V497.6M624.5 490.1V496.9M625.5 489.4V496.9M626.5 488.4V496.9M627.5 490.1V496.9M628.5 490.1V496.9M629.5 490.1V499.5M630.5 490.1V496.9M631.5 492.1V496.9M632.5 488.9V496.9M633.5 492.1V496.9M634.5 490.1V496.9M635.5 490.1V496.9M636.5 490.1V496.9M637.5 490.1V496.9M638.5 488.6V496.9M639.5 490.1V496.9M640.5 490.1V498.1M641.5 490.1V496.9M642.5 490.1V499.3M643.5 487.7V496.9M644.5 488.1V496.9M645.5 490.1V499.1M646.5 490.1V496.9M647.5 490.1V496.9M648.5 490.1V496.9M649.5 490.1V498.0M650.5 490.1V496.9M651.5 490.1V496.9M652.5 492.1V496.9M653.5 490.1V496.9M654.5 490.1V496.9M655.5 488.6V496.9M656.5 490.1V496.9M657.5 490.1V494.9M658.5 490.1V494.9M659.5 489.3V498.2M660.5 490.1V496.9M661.5 490.1V496.9M662.5 490.1V496.9M663.5 490.1V496.9M664.5 490.1V498.9M673.5 356.1V362.4M674.5 354.6V362.9M675.5 354.6V361.4M676.5 354.6V361.4M677.5 354.7V361.5M678.5 353.9V359.5M679.5 354.7V359.5M680.5 354.7V359.5M681.5 354.7V361.5M682.5 354.8V361.6M683.5 354.8V361.6M684.5 354.8V361.6M685.5 354.8V361.6M686.5 354.9V364.2M687.5 354.9V361.7M688.5 354.9V364.2M689.5 354.9V363.1M690.5 355.0V361.8M691.5 357.0V361.8M692.5 355.0V361.8M693.5 355.0V361.8M694.5 353.0V361.8M695.5 353.5V363.3M696.5 355.1V361.9M697.5 355.1V365.5M698.5 355.8V368.1M702.5 369.6V379.3M703.5 371.8V383.1M704.5 374.0V381.9M705.5 372.1V383.3M706.5 370.8V381.4M707.5 374.0V379.4M708.5 373.9V378.8M709.5 373.7V381.2M710.5 373.6V380.5M711.5 373.4V378.3M712.5 369.9V376.2M713.5 369.1V380.1M714.5 370.9V379.0M715.5 370.9V377.7M716.5 370.8V377.6M717.5 370.8V377.6M718.5 370.7V377.5M719.5 369.9V375.5M720.5 370.6V375.4M721.5 370.6V375.4M722.5 370.5V375.3M723.5 367.9V378.8M724.5 370.4V378.7M725.5 370.4V377.2M726.5 370.3V377.1M727.5 370.3V377.1M728.5 370.3V377.1M729.5 370.2V377.0M730.5 370.2V377.0M731.5 370.1V377.7M732.5 368.3V376.9M733.5 370.1V376.9M734.5 370.0V376.8M735.5 370.0V374.8M736.5 369.9V374.7M737.5 369.9V374.7M738.5 369.9V376.7M739.5 369.8V376.6M740.5 369.0V377.4M741.5 369.7V376.5M742.5 367.1V376.5M743.5 369.7V378.0M744.5 369.6V376.4M745.5 369.6V376.4M746.5 369.5V376.3M747.5 369.5V377.3M748.5 367.8V376.3M749.5 368.6V378.7M750.5 368.5V376.2M751.5 369.2V376.1M752.5 369.1V376.0M753.5 367.5V377.4M754.5 368.8V375.7M755.5 368.7V376.7M756.5 368.6V375.5M757.5 368.5V375.4M758.5 366.4V373.2M759.5 366.6V375.1M760.5 368.1V375.0M761.5 367.0V374.9M762.5 365.9V373.8M763.5 366.8V372.6M764.5 363.6V371.5M765.5 359.8V370.4M766.5 363.2V369.2M767.5 358.1V368.0M768.5 360.8V366.8M769.5 359.6V365.6M770.5 359.2V366.0M771.5 356.8V364.0M772.5 355.4V365.0M773.5 356.0V361.2M774.5 355.6V360.8M775.5 357.4V360.4M776.5 355.1V362.1M777.5 356.9V361.9M778.5 354.6V361.6M779.5 352.4V362.3M780.5 354.4V363.9M781.5 356.3V361.2M782.5 353.5V361.1M783.5 356.2V361.0M784.5 356.1V362.1M785.5 354.0V360.8M786.5 353.9V362.8M787.5 352.6V360.6M788.5 353.9V360.7M789.5 351.6V358.8M790.5 354.1V362.5M791.5 351.7V359.1M792.5 354.3V359.2M793.5 353.0V359.3M794.5 354.5V359.4M795.5 354.6V359.6M796.5 354.8V362.8M797.5 355.0V359.9M798.5 357.2V362.1M799.5 357.3V362.3M800.5 357.5V362.5M801.5 357.7V362.6M802.5 357.9V362.8M803.5 354.0V363.0M804.5 356.2V363.2M805.5 354.1V365.5M806.5 356.6V363.5M807.5 356.7V363.6M808.5 356.9V363.8M809.5 357.0V363.9M810.5 357.2V365.5M811.5 356.6V364.2M812.5 355.6V364.4M813.5 357.6V365.4M814.5 357.8V362.7M815.5 357.9V365.7M816.5 355.9V367.5M817.5 360.2V366.6M818.5 360.4V365.3M819.5 360.6V365.5M820.5 357.5V365.6M821.5 357.8V365.8M822.5 359.0V369.0M823.5 360.4V371.9M824.5 363.1V372.9M826.5 368.6V378.8M827.5 371.0V380.9M828.5 376.1V382.3M829.5 375.5V384.7M837.5 499.1V508.4M840.5 489.5V500.7M841.5 490.6V499.4M842.5 490.1V497.4M843.5 487.8V496.9M844.5 490.1V496.9M845.5 490.1V496.9M846.5 490.1V496.9M847.5 490.1V496.9M848.5 490.1V498.7M849.5 490.1V499.0M850.5 492.1V496.9M851.5 487.6V496.9M852.5 488.5V498.6M853.5 492.1V498.1M854.5 492.1V496.9M855.5 492.1V496.9M856.5 492.1V496.9M857.5 488.2V496.9M858.5 490.1V496.9M859.5 490.1V497.7M860.5 490.1V496.9M861.5 490.1V496.9M862.5 492.1V499.1M863.5 490.1V496.9M864.5 492.1V496.9M865.5 492.1V496.9M866.5 492.1V496.9M867.5 489.3V496.9M868.5 488.1V496.9M869.5 490.1V496.9M870.5 490.1V499.5M871.5 488.2V496.9M872.5 488.2V496.9M873.5 492.1V496.9M874.5 487.9V496.9M875.5 492.1V496.9M876.5 492.1V496.9M877.5 492.1V496.9M878.5 488.4V496.9M879.5 488.1V496.9M880.5 488.4V496.9M881.5 490.1V496.9M882.5 490.1V496.9M883.5 488.2V496.9M884.5 490.1V496.9M885.5 492.1V496.9M886.5 492.1V496.9M887.5 490.1V496.9M888.5 490.1V496.9M889.5 490.1V496.9M890.5 492.1V496.9M891.5 490.1V496.9M892.5 490.1V499.2M893.5 490.1V496.9M894.5 490.1V498.7M895.5 490.1V496.9M896.5 488.6V499.3M897.5 489.4V496.9M898.5 490.1V496.9M899.5 490.1V496.9M900.5 490.1V496.9M901.5 490.1V496.9M902.5 490.1V496.9M903.5 492.1V497.6M904.5 492.1V497.8M905.5 492.1V496.9M906.5 492.1V496.9M907.5 492.1V494.9M908.5 492.1V494.9M909.5 492.1V494.9M910.5 492.1V496.9M911.5 492.1V496.9M912.5 490.1V496.9M913.5 490.1V496.9M914.5 490.1V496.9M915.5 490.1V496.9M916.5 488.8V499.4M917.5 490.1V498.8M918.5 490.1V498.8M919.5 490.1V494.9M920.5 490.1V494.9M921.5 489.1V494.9M922.5 488.9V498.0M923.5 490.1V494.9M924.5 490.1V494.9M925.5 492.1V494.9M926.5 488.7V494.9M927.5 490.1V496.9M928.5 490.1V497.9M929.5 489.0V496.9M930.5 489.2V496.9M931.5 490.1V498.3M932.5 489.3V496.9M933.5 487.6V498.7M934.5 490.1V496.9M935.5 490.1V499.0M936.5 492.1V494.9M937.5 487.7V494.9M938.5 490.1V496.9M939.5 490.1V496.9M940.5 490.1V494.9M941.5 489.4V494.9M942.5 488.3V499.0M943.5 490.1V496.9M944.5 489.1V498.3M945.5 487.6V497.9M946.5 490.1V496.9M947.5 487.4V496.9M948.5 490.1V496.9M949.5 490.1V496.9M950.5 488.8V496.9M951.5 492.1V496.9M952.5 492.1V496.9M953.5 492.1V496.9M954.5 488.8V496.9M955.5 490.1V496.9M956.5 490.1V496.9M957.5 490.1V496.9M958.5 490.1V496.9M959.5 487.9V496.9M960.5 492.1V496.9M961.5 492.1V496.9M962.5 492.1V498.2M963.5 492.1V496.9M964.5 492.1V496.9M965.5 489.1V498.1M966.5 492.1V496.9M967.5 492.1V496.9M968.5 487.6V496.9M969.5 490.1V496.9M970.5 492.1V496.9M971.5 490.1V494.9M972.5 487.7V499.5M973.5 490.1V494.9M974.5 490.1V496.9M975.5 490.1V496.9M976.5 490.1V496.9M977.5 490.1V498.7M986.5 355.4V363.6M987.5 354.6V362.1M988.5 354.6V363.2M989.5 352.2V359.4M990.5 354.0V363.4M991.5 352.4V361.5M992.5 354.7V363.4M993.5 354.7V359.5M994.5 353.7V359.5M995.5 354.0V359.6M996.5 354.8V361.6M997.5 354.8V361.6M998.5 353.7V361.6M999.5 354.9V361.7M1000.5 354.9V363.7M1001.5 352.6V362.4M1002.5 354.9V361.7M1003.5 355.0V361.8M1004.5 353.5V363.3M1005.5 352.6V361.8M1006.5 355.0V361.8M1007.5 355.1V361.9M1008.5 355.1V361.9M1009.5 355.1V364.9M1010.5 356.2V365.3M1011.5 360.5V370.1M1014.5 367.9V377.5M1015.5 369.6V381.2M1016.5 372.9V381.9M1017.5 374.1V381.9M1018.5 373.1V380.9M1019.5 372.1V381.1M1020.5 370.2V378.9" stroke="#960896" stroke-width="1" fill="none" shape-rendering="crispEdges"/><path d="M40.5 492.5L41.5 481.8L42.5 461.1L43.5 436.9L44.5 410.7L45.5 388.5L46.5 371.9L47.5 364.7M204.5 379.7L205.5 384.8L206.5 393.5L207.5 415.3L208.5 446.6L209.5 469.6L210.5 487.8L211.5 499.6M353.5 489.0L354.5 471.5L355.5 449.4L356.5 423.3L357.5 398.8L358.5 378.0L359.5 367.1L360.5 362.0M517.5 382.2L518.5 388.4L519.5 401.4L520.5 432.2L521.5 458.8L522.5 479.3L523.5 495.0L524.5 502.7M665.5 492.5L666.5 481.8L667.5 460.7L668.5 436.7L669.5 410.5L670.5 388.2L671.5 371.0L672.5 363.9M830.5 384.8L831.5 393.8L832.5 415.1L833.5 446.5L834.5 468.8L835.5 487.4L836.5 499.0M978.5 488.8L979.5 471.4L980.5 449.5L981.5 423.2L982.5 399.4L983.5 378.9L984.5 368.1L985.5 362.1" stroke="#900890" stroke-width="1.15" fill="none" stroke-linejoin="round"/><path d="M21.5 493.4L22.5 493.5L23.5 493.0L24.5 493.4L25.5 493.3L26.5 493.0L27.5 493.1L28.5 493.0L29.5 493.9L30.5 494.0L31.5 494.0L32.5 493.4L33.5 493.3L34.5 493.2L35.5 493.1L36.5 493.3L37.5 493.5L38.5 493.7L39.5 493.6L40.5 492.5M47.5 364.7L48.5 360.5L49.5 358.8L50.5 358.0L51.5 358.0L52.5 358.0L53.5 358.3L54.5 358.4L55.5 358.4L56.5 357.8L57.5 358.0L58.5 357.7L59.5 357.9L60.5 357.8L61.5 358.1L62.5 358.4L63.5 358.2L64.5 358.1L65.5 358.2L66.5 358.6L67.5 358.8L68.5 358.8L69.5 358.8L70.5 358.7L71.5 358.5L72.5 359.5L73.5 361.9L74.5 364.8L75.5 367.9L76.5 371.2L77.5 373.6L78.5 376.0L79.5 377.8L80.5 377.4L81.5 376.3L82.5 375.2L83.5 375.3L84.5 374.8L85.5 374.7L86.5 374.5L87.5 374.9L88.5 374.5L89.5 374.1L90.5 373.9L91.5 374.1L92.5 374.4L93.5 374.1L94.5 374.2L95.5 373.7L96.5 374.1L97.5 374.0L98.5 374.0L99.5 373.5L100.5 373.7L101.5 373.9L102.5 374.2L103.5 374.1L104.5 374.0L105.5 373.7L106.5 373.4L107.5 373.1L108.5 373.4L109.5 373.3L110.5 373.3L111.5 372.9L112.5 373.2L113.5 373.3L114.5 373.1L115.5 372.8L116.5 372.6L117.5 373.0L118.5 373.4L119.5 373.4L120.5 373.1L121.5 373.0L122.5 372.9L123.5 373.0L124.5 372.8L125.5 372.8L126.5 372.5L127.5 372.6L128.5 372.5L129.5 372.8L130.5 372.9L131.5 373.0L132.5 372.1L133.5 371.6L134.5 371.2L135.5 371.5L136.5 370.5L137.5 369.7L138.5 368.7L139.5 367.7L140.5 366.2L141.5 364.7L142.5 363.7L143.5 362.8L144.5 362.1L145.5 361.2L146.5 360.8L147.5 360.1L148.5 360.1L149.5 359.6L150.5 359.5L151.5 358.8L152.5 358.4L153.5 357.8L154.5 358.0L155.5 358.1L156.5 358.1L157.5 357.7L158.5 357.5L159.5 357.4L160.5 357.2L161.5 357.1L162.5 357.6L163.5 357.8L164.5 357.7L165.5 357.2L166.5 357.1L167.5 357.4L168.5 357.8L169.5 358.2L170.5 358.3L171.5 358.3L172.5 358.5L173.5 358.4L174.5 358.5L175.5 358.7L176.5 359.0L177.5 359.2L178.5 359.2L179.5 359.4L180.5 359.8L181.5 360.0L182.5 360.2L183.5 360.4L184.5 360.7L185.5 361.2L186.5 360.8L187.5 361.0L188.5 360.8L189.5 361.3L190.5 361.5L191.5 361.9L192.5 362.2L193.5 362.2L194.5 362.5L195.5 362.4L196.5 362.5L197.5 362.9L198.5 365.2L199.5 368.3L200.5 371.7L201.5 375.2L202.5 377.0L203.5 378.5L204.5 379.7M211.5 499.6L212.5 503.7L213.5 501.0L214.5 497.3L215.5 495.0L216.5 494.2L217.5 493.6L218.5 493.7L219.5 493.8L220.5 493.9L221.5 493.9L222.5 493.9L223.5 493.5L224.5 493.2L225.5 493.3L226.5 493.1L227.5 493.4L228.5 493.3L229.5 493.8L230.5 493.7L231.5 493.5L232.5 493.4L233.5 493.3L234.5 493.4L235.5 493.4L236.5 493.5L237.5 493.5L238.5 493.3L239.5 493.3L240.5 493.0L241.5 493.1L242.5 492.9L243.5 493.5L244.5 493.7L245.5 493.6L246.5 493.4L247.5 493.2L248.5 493.3L249.5 493.4L250.5 493.3L251.5 493.2L252.5 493.1L253.5 493.1L254.5 493.4L255.5 493.3L256.5 493.4L257.5 493.5L258.5 493.5L259.5 493.3L260.5 493.2L261.5 493.3L262.5 493.7L263.5 493.7L264.5 493.7L265.5 493.2L266.5 493.2L267.5 493.7L268.5 493.8L269.5 493.9L270.5 493.6L271.5 493.6L272.5 494.0L273.5 493.8L274.5 493.9L275.5 493.6L276.5 493.8L277.5 493.4L278.5 493.7L279.5 493.6L280.5 493.8L281.5 493.3L282.5 493.2L283.5 493.3L284.5 493.6L285.5 493.9L286.5 494.0L287.5 493.9L288.5 493.8L289.5 493.8L290.5 493.7L291.5 493.7L292.5 493.7L293.5 493.8L294.5 493.9L295.5 493.7L296.5 493.6L297.5 493.9L298.5 493.9L299.5 493.8L300.5 493.4L301.5 493.7L302.5 493.4L303.5 493.5L304.5 493.5L305.5 493.6L306.5 493.8L307.5 493.7L308.5 493.7L309.5 493.5L310.5 493.2L311.5 493.2L312.5 493.5L313.5 493.6L314.5 494.0L315.5 493.6L316.5 494.0L317.5 493.7L318.5 493.3L319.5 493.0L320.5 493.1L321.5 493.2L322.5 493.1L323.5 493.1L324.5 493.2L325.5 493.2L326.5 493.0L327.5 493.2L328.5 493.5L329.5 493.7L330.5 493.8L331.5 493.9L332.5 493.6L333.5 493.1L334.5 493.1L335.5 493.4L336.5 493.7L337.5 493.8L338.5 493.6L339.5 493.6L340.5 493.4L341.5 493.4L342.5 493.1L343.5 493.0L344.5 492.9L345.5 493.0L346.5 493.1L347.5 493.3L348.5 493.4L349.5 494.1L350.5 494.1L351.5 494.0L352.5 493.7L353.5 489.0M360.5 362.0L361.5 359.5L362.5 358.2L363.5 358.0L364.5 357.9L365.5 358.2L366.5 358.2L367.5 358.4L368.5 358.4L369.5 358.2L370.5 358.3L371.5 358.2L372.5 358.3L373.5 358.3L374.5 358.9L375.5 358.7L376.5 358.5L377.5 358.3L378.5 358.3L379.5 358.5L380.5 358.4L381.5 358.7L382.5 358.6L383.5 358.5L384.5 358.3L385.5 360.2L386.5 362.8L387.5 366.3L388.5 369.7L389.5 372.4L390.5 375.0L391.5 377.3L392.5 377.9L393.5 376.9L394.5 376.0L395.5 375.7L396.5 375.3L397.5 375.4L398.5 375.2L399.5 375.1L400.5 374.6L401.5 374.3L402.5 374.3L403.5 374.3L404.5 374.5L405.5 374.4L406.5 374.6L407.5 374.5L408.5 374.4L409.5 373.8L410.5 373.6L411.5 373.7L412.5 374.0L413.5 374.0L414.5 373.8L415.5 373.6L416.5 373.3L417.5 373.6L418.5 373.7L419.5 373.7L420.5 373.2L421.5 373.1L422.5 373.4L423.5 373.7L424.5 373.5L425.5 373.5L426.5 373.6L427.5 373.8L428.5 373.7L429.5 373.6L430.5 373.5L431.5 373.5L432.5 373.1L433.5 373.2L434.5 373.1L435.5 373.5L436.5 372.9L437.5 372.9L438.5 372.6L439.5 372.8L440.5 372.6L441.5 372.5L442.5 372.5L443.5 372.2L444.5 372.0L445.5 371.9L446.5 372.1L447.5 372.0L448.5 371.6L449.5 370.4L450.5 369.5L451.5 368.2L452.5 366.8L453.5 365.4L454.5 364.2L455.5 363.1L456.5 361.9L457.5 361.1L458.5 360.5L459.5 360.2L460.5 359.5L461.5 359.3L462.5 358.5L463.5 358.4L464.5 358.1L465.5 358.1L466.5 357.9L467.5 357.6L468.5 357.7L469.5 357.7L470.5 357.7L471.5 357.7L472.5 357.5L473.5 357.3L474.5 357.0L475.5 357.3L476.5 357.6L477.5 358.0L478.5 358.0L479.5 357.9L480.5 357.9L481.5 357.9L482.5 358.2L483.5 358.4L484.5 358.5L485.5 358.5L486.5 358.6L487.5 359.2L488.5 359.8L489.5 360.0L490.5 359.9L491.5 359.2L492.5 359.5L493.5 359.6L494.5 360.0L495.5 360.2L496.5 360.1L497.5 360.4L498.5 360.4L499.5 360.6L500.5 361.0L501.5 361.3L502.5 361.4L503.5 361.2L504.5 361.3L505.5 361.6L506.5 361.8L507.5 361.8L508.5 362.0L509.5 362.3L510.5 363.9L511.5 366.7L512.5 370.0L513.5 373.5L514.5 376.1L515.5 377.9L516.5 379.4L517.5 382.2M524.5 502.7L525.5 503.4L526.5 499.7L527.5 496.6L528.5 495.0L529.5 493.9L530.5 493.5L531.5 493.5L532.5 493.6L533.5 493.9L534.5 493.8L535.5 493.8L536.5 493.4L537.5 493.6L538.5 493.4L539.5 493.3L540.5 493.2L541.5 493.5L542.5 493.6L543.5 493.5L544.5 493.3L545.5 493.4L546.5 493.7L547.5 493.9L548.5 493.8L549.5 493.7L550.5 493.4L551.5 493.4L552.5 493.2L553.5 493.5L554.5 493.5L555.5 493.3L556.5 493.5L557.5 493.8L558.5 493.9L559.5 493.8L560.5 493.6L561.5 493.7L562.5 493.4L563.5 493.7L564.5 493.4L565.5 493.9L566.5 493.6L567.5 493.7L568.5 493.4L569.5 493.6L570.5 493.5L571.5 493.4L572.5 493.2L573.5 493.1L574.5 493.3L575.5 493.5L576.5 493.8L577.5 493.8L578.5 493.5L579.5 493.5L580.5 493.6L581.5 493.9L582.5 493.6L583.5 492.7L584.5 492.4L585.5 492.9L586.5 493.4L587.5 493.6L588.5 493.5L589.5 493.4L590.5 493.5L591.5 493.5L592.5 493.7L593.5 493.8L594.5 493.5L595.5 493.6L596.5 493.4L597.5 493.7L598.5 494.1L599.5 494.0L600.5 493.4L601.5 492.9L602.5 493.1L603.5 493.7L604.5 493.9L605.5 493.7L606.5 493.4L607.5 493.4L608.5 493.4L609.5 493.7L610.5 493.5L611.5 493.8L612.5 493.7L613.5 493.9L614.5 493.9L615.5 493.6L616.5 493.5L617.5 493.4L618.5 493.6L619.5 493.8L620.5 493.7L621.5 493.5L622.5 493.2L623.5 493.2L624.5 493.5L625.5 493.4L626.5 493.7L627.5 493.6L628.5 493.7L629.5 493.3L630.5 493.3L631.5 493.4L632.5 493.4L633.5 493.5L634.5 493.7L635.5 494.0L636.5 493.9L637.5 494.0L638.5 494.2L639.5 494.0L640.5 493.6L641.5 493.3L642.5 493.4L643.5 493.1L644.5 493.2L645.5 493.1L646.5 493.5L647.5 493.4L648.5 493.7L649.5 493.6L650.5 493.5L651.5 493.4L652.5 493.7L653.5 493.8L654.5 493.9L655.5 493.7L656.5 493.7L657.5 493.7L658.5 493.5L659.5 493.8L660.5 493.4L661.5 493.7L662.5 493.3L663.5 493.2L664.5 493.3L665.5 492.5M672.5 363.9L673.5 360.0L674.5 358.5L675.5 357.9L676.5 358.0L677.5 358.3L678.5 358.5L679.5 358.8L680.5 358.5L681.5 358.3L682.5 357.8L683.5 357.8L684.5 357.6L685.5 357.7L686.5 357.9L687.5 358.6L688.5 358.9L689.5 358.6L690.5 358.5L691.5 358.2L692.5 358.5L693.5 358.4L694.5 358.7L695.5 359.0L696.5 359.2L697.5 360.6L698.5 362.5L699.5 365.0L700.5 368.2L701.5 371.8L702.5 374.5L703.5 376.5L704.5 377.7L705.5 377.2L706.5 376.4L707.5 375.7L708.5 375.4L709.5 374.8L710.5 374.7L711.5 374.8L712.5 375.0L713.5 374.8L714.5 374.3L715.5 374.4L716.5 374.3L717.5 374.4L718.5 374.2L719.5 373.8L720.5 373.8L721.5 373.6L722.5 374.0L723.5 374.1L724.5 374.2L725.5 373.8L726.5 373.5L727.5 373.4L728.5 373.7L729.5 373.5L730.5 373.1L731.5 373.1L732.5 373.4L733.5 373.6L734.5 373.2L735.5 373.4L736.5 372.9L737.5 373.0L738.5 373.1L739.5 373.5L740.5 373.5L741.5 373.0L742.5 373.2L743.5 372.9L744.5 373.1L745.5 372.8L746.5 372.8L747.5 372.9L748.5 372.6L749.5 372.6L750.5 372.4L751.5 372.4L752.5 372.5L753.5 372.6L754.5 372.5L755.5 372.2L756.5 371.8L757.5 371.7L758.5 371.8L759.5 371.7L760.5 371.7L761.5 371.0L762.5 369.7L763.5 368.7L764.5 367.4L765.5 366.4L766.5 365.3L767.5 364.1L768.5 362.9L769.5 361.1L770.5 360.4L771.5 359.8L772.5 359.6L773.5 359.2L774.5 359.1L775.5 359.1L776.5 359.0L777.5 358.8L778.5 358.3L779.5 358.0L780.5 357.7L781.5 357.3L782.5 357.2L783.5 357.6L784.5 357.8L785.5 357.7L786.5 357.6L787.5 357.3L788.5 357.4L789.5 357.0L790.5 357.1L791.5 357.2L792.5 357.9L793.5 358.1L794.5 358.1L795.5 357.8L796.5 358.0L797.5 358.0L798.5 358.3L799.5 358.7L800.5 359.2L801.5 359.4L802.5 359.3L803.5 359.1L804.5 359.4L805.5 360.0L806.5 360.2L807.5 360.1L808.5 360.1L809.5 360.6L810.5 360.8L811.5 360.8L812.5 360.9L813.5 361.0L814.5 361.3L815.5 361.1L816.5 360.7L817.5 360.8L818.5 360.9L819.5 361.7L820.5 362.1L821.5 362.5L822.5 362.9L823.5 365.1L824.5 368.1L825.5 371.3L826.5 374.6L827.5 376.6L828.5 378.5L829.5 380.2L830.5 384.8M836.5 499.0L837.5 503.7L838.5 500.8L839.5 497.7L840.5 495.8L841.5 495.0L842.5 494.3L843.5 493.9L844.5 494.2L845.5 494.0L846.5 493.6L847.5 493.5L848.5 493.5L849.5 493.6L850.5 493.2L851.5 492.9L852.5 493.1L853.5 493.0L854.5 493.5L855.5 493.7L856.5 493.6L857.5 493.1L858.5 492.9L859.5 492.8L860.5 493.1L861.5 493.2L862.5 493.3L863.5 493.3L864.5 493.4L865.5 493.7L866.5 494.1L867.5 494.0L868.5 493.9L869.5 493.5L870.5 493.6L871.5 493.3L872.5 493.5L873.5 493.3L874.5 493.3L875.5 493.1L876.5 493.4L877.5 493.4L878.5 493.3L879.5 493.2L880.5 493.5L881.5 493.4L882.5 493.4L883.5 493.3L884.5 493.7L885.5 493.8L886.5 493.6L887.5 493.0L888.5 492.9L889.5 493.3L890.5 493.7L891.5 493.9L892.5 493.6L893.5 493.3L894.5 493.3L895.5 493.4L896.5 493.8L897.5 493.4L898.5 493.4L899.5 493.2L900.5 493.6L901.5 493.4L902.5 493.4L903.5 493.2L904.5 493.5L905.5 493.6L906.5 493.6L907.5 493.2L908.5 493.0L909.5 493.4L910.5 493.3L911.5 493.3L912.5 493.2L913.5 493.7L914.5 493.8L915.5 493.8L916.5 493.7L917.5 493.9L918.5 493.8L919.5 494.0L920.5 493.8L921.5 494.1L922.5 493.6L923.5 493.7L924.5 493.3L925.5 493.2L926.5 493.1L927.5 493.2L928.5 493.5L929.5 493.3L930.5 493.7L931.5 493.6L932.5 493.6L933.5 493.4L934.5 493.5L935.5 493.6L936.5 493.6L937.5 493.8L938.5 494.1L939.5 494.0L940.5 493.6L941.5 493.5L942.5 493.3L943.5 492.9L944.5 492.6L945.5 492.7L946.5 493.5L947.5 493.7L948.5 493.7L949.5 493.2L950.5 493.3L951.5 493.3L952.5 493.4L953.5 493.3L954.5 493.4L955.5 493.5L956.5 493.6L957.5 493.8L958.5 494.1L959.5 493.8L960.5 494.0L961.5 493.7L962.5 494.2L963.5 493.6L964.5 493.7L965.5 493.5L966.5 493.6L967.5 493.7L968.5 493.8L969.5 493.6L970.5 493.5L971.5 493.5L972.5 493.8L973.5 493.7L974.5 493.5L975.5 493.4L976.5 493.3L977.5 493.1L978.5 488.8M985.5 362.1L986.5 359.5L987.5 358.5L988.5 358.4L989.5 358.4L990.5 358.3L991.5 358.3L992.5 358.5L993.5 358.4L994.5 358.2L995.5 358.1L996.5 358.1L997.5 358.3L998.5 358.2L999.5 358.5L1000.5 358.5L1001.5 358.6L1002.5 358.1L1003.5 358.3L1004.5 358.6L1005.5 358.8L1006.5 358.8L1007.5 358.4L1008.5 358.3L1009.5 358.5L1010.5 360.6L1011.5 363.2L1012.5 366.1L1013.5 370.0L1014.5 372.9L1015.5 375.7L1016.5 377.5L1017.5 378.4L1018.5 377.4L1019.5 375.7L1020.5 375.0" stroke="#e018e0" stroke-width="1.8" fill="none" stroke-linejoin="round"/><path d="M21.5 336.5V340.3M22.5 334.1V340.3M23.5 334.1V340.3M24.5 332.2V340.3M25.5 334.1V341.0M26.5 334.1V340.3M27.5 334.1V340.3M28.5 332.7V340.3M29.5 333.2V342.2M30.5 335.9V341.6M31.5 331.8V340.3M32.5 335.9V341.7M33.5 331.8V338.5M34.5 332.0V338.5M35.5 334.1V341.6M36.5 334.1V340.3M37.5 334.1V340.3M38.5 335.9V340.3M49.5 218.1V224.8M50.5 218.1V224.3M51.5 218.1V225.9M52.5 218.1V226.3M53.5 216.0V226.4M54.5 216.8V226.3M55.5 218.1V222.5M56.5 217.0V224.3M57.5 219.9V225.3M58.5 219.9V224.3M59.5 218.1V224.3M60.5 216.8V224.3M61.5 218.1V224.3M62.5 218.1V226.2M63.5 216.2V225.0M64.5 218.1V224.3M65.5 218.1V225.1M66.5 218.1V225.3M67.5 219.9V224.3M68.5 218.1V224.3M69.5 219.9V225.7M70.5 219.9V224.3M71.5 217.1V224.3M72.5 219.9V226.2M73.5 218.1V224.3M74.5 218.1V224.3M75.5 218.1V224.3M76.5 218.1V224.3M77.5 219.9V224.3M78.5 219.9V225.2M79.5 219.9V225.4M80.5 216.2V224.3M81.5 219.9V224.3M82.5 217.2V224.3M83.5 218.1V224.3M84.5 218.1V222.5M85.5 216.1V224.3M86.5 216.7V224.3M87.5 216.3V224.3M88.5 217.3V224.3M89.5 218.1V224.3M90.5 218.1V225.5M91.5 218.1V224.3M92.5 218.1V224.3M93.5 215.9V224.3M94.5 218.1V224.3M95.5 218.1V224.3M96.5 218.1V222.5M97.5 217.1V222.5M98.5 218.1V222.5M99.5 218.1V222.5M100.5 218.1V224.3M101.5 218.1V224.3M102.5 218.1V226.5M103.5 215.9V225.3M104.5 218.1V224.3M105.5 218.1V224.3M106.5 218.1V224.3M107.5 219.9V224.3M108.5 219.9V224.3M109.5 219.9V226.0M110.5 218.1V224.3M111.5 218.1V224.3M112.5 218.1V226.3M113.5 218.1V226.3M114.5 217.2V224.3M115.5 218.1V224.3M116.5 218.1V224.3M117.5 216.4V224.3M118.5 218.1V226.1M119.5 218.1V224.3M120.5 218.1V224.3M121.5 218.1V222.5M122.5 216.2V225.5M123.5 218.1V225.5M124.5 218.1V222.5M125.5 218.1V222.5M126.5 219.9V222.5M127.5 219.9V222.5M128.5 219.9V224.3M129.5 219.9V226.5M130.5 218.1V224.3M131.5 218.1V224.3M132.5 218.1V224.3M133.5 218.1V225.3M134.5 218.1V222.5M135.5 218.1V226.3M136.5 217.5V224.3M137.5 216.5V223.7M138.5 217.7V222.7M139.5 218.3V223.7M140.5 219.3V224.3M141.5 219.9V224.3M142.5 219.9V225.0M143.5 219.9V222.5M144.5 219.9V225.9M145.5 216.5V224.3M146.5 219.9V224.3M147.5 217.2V224.3M148.5 219.9V224.3M149.5 219.9V225.1M150.5 217.0V226.4M151.5 218.1V224.3M152.5 218.1V224.3M153.5 219.9V224.3M154.5 216.3V224.3M155.5 219.9V224.3M156.5 219.9V224.3M157.5 219.9V226.4M158.5 219.9V224.3M159.5 219.9V224.3M160.5 217.5V224.3M161.5 218.1V224.3M162.5 216.9V224.3M163.5 218.1V224.3M164.5 216.2V224.3M165.5 213.4V221.6M166.5 217.2V222.5M174.5 335.4V343.1M175.5 335.4V342.5M176.5 334.8V342.7M177.5 332.3V340.9M178.5 333.3V340.3M179.5 334.1V340.3M180.5 334.1V340.3M181.5 334.1V342.5M182.5 334.1V340.3M183.5 334.1V340.3M184.5 334.1V340.3M185.5 334.1V340.3M186.5 335.9V341.2M187.5 335.9V340.3M188.5 334.1V340.3M189.5 332.5V340.3M190.5 332.5V340.3M191.5 331.8V341.0M192.5 334.1V340.3M193.5 334.1V340.3M194.5 334.1V340.3M195.5 332.8V340.3M196.5 334.1V340.3M197.5 332.1V340.3M198.5 331.9V340.3M206.5 334.1V340.3M207.5 333.5V340.3M208.5 334.1V340.3M209.5 334.1V340.3M210.5 334.1V340.3M211.5 334.1V340.3M212.5 334.1V340.3M213.5 332.5V340.3M214.5 334.1V341.3M215.5 334.1V342.0M216.5 334.1V340.3M217.5 334.1V340.3M218.5 334.1V342.4M219.5 334.1V340.3M220.5 334.1V340.3M221.5 332.8V340.3M222.5 332.9V340.3M223.5 334.1V340.3M224.5 334.1V340.3M225.5 334.1V340.3M226.5 334.1V340.3M227.5 334.1V341.0M228.5 334.1V340.3M229.5 334.1V340.3M230.5 334.1V340.3M231.5 332.2V340.3M232.5 335.9V338.5M233.5 335.9V338.5M234.5 334.1V340.3M235.5 334.1V340.3M236.5 335.9V340.3M237.5 333.3V340.3M238.5 335.9V340.3M239.5 335.9V340.3M240.5 331.8V340.3M241.5 334.1V340.3M242.5 334.1V342.3M243.5 334.1V340.3M244.5 334.1V340.3M245.5 332.0V342.3M246.5 334.1V342.6M247.5 334.1V340.3M248.5 331.9V340.3M249.5 334.1V340.3M250.5 334.1V340.3M251.5 332.9V340.3M252.5 334.1V342.6M253.5 334.1V340.3M254.5 334.1V340.3M255.5 334.1V340.3M256.5 334.1V341.2M257.5 332.0V341.3M258.5 333.4V340.3M259.5 334.1V341.7M260.5 334.1V340.3M261.5 334.1V340.3M262.5 331.7V340.3M263.5 334.1V340.3M264.5 334.1V340.3M265.5 334.1V340.3M266.5 334.1V342.4M267.5 333.4V338.5M268.5 334.1V342.5M269.5 334.1V341.1M270.5 334.1V338.5M271.5 334.1V340.3M272.5 334.1V340.3M273.5 334.1V340.3M274.5 334.1V340.3M275.5 334.1V340.3M276.5 334.1V340.3M277.5 334.1V341.5M278.5 332.0V340.3M279.5 334.1V340.3M280.5 332.0V340.3M281.5 334.1V340.3M282.5 334.1V340.3M283.5 334.1V342.5M284.5 334.1V340.3M285.5 334.1V340.3M286.5 334.1V340.3M287.5 334.1V340.3M288.5 334.1V340.3M289.5 334.1V340.3M290.5 334.1V340.3M291.5 334.1V340.3M292.5 334.1V340.3M293.5 334.1V340.3M294.5 334.1V340.3M295.5 334.1V341.2M296.5 335.9V340.3M297.5 335.9V340.3M298.5 334.1V340.3M299.5 333.3V340.3M300.5 334.1V340.3M301.5 334.1V340.3M302.5 334.1V342.3M303.5 334.1V340.3M304.5 334.1V340.3M305.5 333.3V340.3M306.5 334.1V340.3M307.5 334.1V340.3M308.5 334.1V340.3M309.5 334.1V340.3M310.5 332.7V340.3M311.5 334.1V340.3M312.5 333.2V341.8M313.5 334.1V340.3M314.5 334.1V340.3M315.5 334.1V340.3M316.5 334.1V340.3M317.5 334.1V340.3M318.5 334.1V340.3M319.5 334.1V338.5M320.5 334.1V340.3M321.5 334.1V340.3M322.5 333.1V340.3M323.5 334.1V340.3M324.5 334.1V340.3M325.5 334.1V340.3M326.5 334.1V338.5M327.5 334.1V338.5M328.5 333.4V340.3M329.5 333.0V340.3M330.5 335.9V340.3M331.5 334.1V340.3M332.5 334.1V340.3M333.5 334.1V342.3M334.5 334.1V338.5M335.5 331.7V340.3M336.5 334.1V340.3M337.5 332.7V340.3M338.5 334.1V338.5M339.5 334.1V338.5M340.5 333.4V338.5M341.5 335.9V338.5M342.5 333.4V338.5M343.5 332.7V338.5M344.5 332.5V340.3M345.5 334.1V340.3M346.5 334.1V340.3M347.5 334.1V340.3M348.5 334.1V340.3M349.5 334.1V341.6M350.5 334.1V338.5M351.5 333.1V340.3M361.5 220.2V226.9M362.5 219.9V224.5M363.5 218.1V224.3M364.5 219.9V225.6M365.5 218.1V224.3M366.5 218.1V224.3M367.5 218.1V224.3M368.5 215.8V224.3M369.5 219.9V224.3M370.5 219.9V226.6M371.5 219.9V226.6M372.5 216.1V222.5M373.5 219.9V224.3M374.5 219.9V224.3M375.5 219.9V224.3M376.5 219.9V224.3M377.5 216.7V224.3M378.5 218.1V224.3M379.5 218.1V224.3M380.5 219.9V224.3M381.5 218.1V224.3M382.5 218.1V225.9M383.5 218.1V224.3M384.5 218.1V224.3M385.5 218.1V224.3M386.5 218.1V224.3M387.5 217.4V224.3M388.5 218.1V224.3M389.5 218.1V225.6M390.5 218.1V222.5M391.5 218.1V222.5M392.5 218.1V222.5M393.5 218.1V225.4M394.5 218.1V226.1M395.5 217.2V225.5M396.5 217.4V226.5M397.5 217.2V222.5M398.5 218.1V226.4M399.5 217.0V225.7M400.5 218.1V224.3M401.5 218.1V224.3M402.5 216.3V224.3M403.5 218.1V224.3M404.5 218.1V224.3M405.5 218.1V224.3M406.5 218.1V222.5M407.5 218.1V222.5M408.5 216.6V222.5M409.5 218.1V225.0M410.5 217.0V224.3M411.5 218.1V224.3M412.5 218.1V226.4M413.5 218.1V222.5M414.5 219.9V224.3M415.5 219.9V224.3M416.5 219.9V222.5M417.5 217.2V222.5M418.5 219.9V225.0M419.5 218.1V224.3M420.5 218.1V224.3M421.5 218.1V224.3M422.5 218.1V222.5M423.5 219.9V224.3M424.5 219.9V224.3M425.5 218.1V226.6M426.5 217.1V224.3M427.5 218.1V224.3M428.5 218.1V225.3M429.5 218.1V226.2M430.5 218.1V222.5M431.5 218.1V226.4M432.5 218.1V224.3M433.5 218.1V224.3M434.5 215.9V224.3M435.5 215.9V224.9M436.5 218.1V224.3M437.5 218.1V224.3M438.5 216.7V226.2M439.5 218.1V224.3M440.5 218.1V222.5M441.5 218.1V222.5M442.5 217.1V222.5M443.5 219.9V222.5M444.5 216.9V222.5M445.5 219.9V226.5M446.5 219.9V225.3M447.5 219.9V225.3M448.5 216.8V224.3M449.5 217.0V224.3M450.5 215.9V223.2M451.5 215.9V223.2M452.5 217.0V224.3M453.5 218.1V226.5M454.5 218.1V224.3M455.5 218.1V224.3M456.5 218.1V224.3M457.5 217.0V225.8M458.5 219.9V224.3M459.5 219.9V224.3M460.5 218.1V224.3M461.5 218.1V225.7M462.5 217.4V224.3M463.5 218.1V224.3M464.5 218.1V224.3M465.5 218.1V226.6M466.5 215.8V224.3M467.5 218.1V224.3M468.5 218.1V224.3M469.5 218.1V224.3M470.5 218.1V224.3M471.5 218.1V225.3M472.5 215.7V224.3M473.5 218.1V224.3M474.5 218.1V224.3M475.5 218.1V224.3M476.5 218.1V224.3M477.5 216.3V224.3M478.5 215.4V222.9M487.5 335.8V342.9M488.5 335.1V342.0M489.5 334.4V341.3M490.5 333.0V340.6M491.5 334.1V340.3M492.5 334.1V338.5M493.5 334.1V338.5M494.5 332.9V338.5M495.5 334.1V338.5M496.5 334.1V340.3M497.5 334.1V342.2M498.5 334.1V341.5M499.5 334.1V340.3M500.5 332.3V340.3M501.5 334.1V340.3M502.5 334.1V341.4M503.5 334.1V340.3M504.5 331.7V342.4M505.5 334.1V340.3M506.5 334.1V341.3M507.5 334.1V340.3M508.5 334.1V340.3M509.5 334.1V341.3M510.5 334.1V338.5M514.5 316.4V325.6M518.5 332.4V340.3M519.5 334.1V340.3M520.5 334.1V340.3M521.5 332.0V340.3M522.5 332.5V340.3M523.5 334.1V340.3M524.5 334.1V340.3M525.5 334.1V340.3M526.5 333.2V340.3M527.5 334.1V340.3M528.5 334.1V340.3M529.5 335.9V340.3M530.5 335.9V340.3M531.5 335.9V340.3M532.5 335.9V340.3M533.5 335.9V340.3M534.5 335.9V340.3M535.5 334.1V340.3M536.5 334.1V340.3M537.5 334.1V340.9M538.5 334.1V338.5M539.5 332.7V342.3M540.5 332.3V340.3M541.5 335.9V340.3M542.5 334.1V340.3M543.5 334.1V342.0M544.5 334.1V340.3M545.5 334.1V338.5M546.5 332.8V340.9M547.5 334.1V338.5M548.5 334.1V338.5M549.5 334.1V340.3M550.5 334.1V341.1M551.5 334.1V340.3M552.5 334.1V340.3M553.5 333.1V338.5M554.5 334.1V338.5M555.5 332.7V338.5M556.5 333.5V338.5M557.5 334.1V341.1M558.5 332.7V340.3M559.5 334.1V340.3M560.5 334.1V342.4M561.5 334.1V340.9M562.5 334.1V340.3M563.5 334.1V340.3M564.5 334.1V340.3M565.5 332.3V341.8M566.5 334.1V340.3M567.5 334.1V341.7M568.5 334.1V341.0M569.5 334.1V340.3M570.5 334.1V342.0M571.5 334.1V338.5M572.5 334.1V338.5M573.5 334.1V338.5M574.5 334.1V340.3M575.5 334.1V340.3M576.5 334.1V342.6M577.5 334.1V340.3M578.5 332.4V342.2M579.5 335.9V340.3M580.5 335.9V341.7M581.5 335.9V341.3M582.5 335.9V340.3M583.5 335.9V340.3M584.5 335.9V340.3M585.5 334.1V340.3M586.5 334.1V340.3M587.5 335.9V340.3M588.5 334.1V340.3M589.5 334.1V340.3M590.5 334.1V341.0M591.5 335.9V340.3M592.5 333.4V340.3M593.5 334.1V340.3M594.5 335.9V340.3M595.5 332.4V340.3M596.5 335.9V340.3M597.5 334.1V338.5M598.5 334.1V342.3M599.5 334.1V340.3M600.5 334.1V340.3M601.5 334.1V340.3M602.5 332.7V342.4M603.5 331.9V340.3M604.5 333.3V340.3M605.5 334.1V340.3M606.5 335.9V340.3M607.5 335.9V340.3M608.5 335.9V342.0M609.5 335.9V342.5M610.5 335.9V340.3M611.5 335.9V340.3M612.5 335.9V342.1M613.5 332.9V341.6M614.5 332.3V340.3M615.5 332.5V340.3M616.5 334.1V341.7M617.5 335.9V341.3M618.5 332.3V340.3M619.5 334.1V340.3M620.5 334.1V340.3M621.5 333.2V340.3M622.5 332.6V340.3M623.5 333.2V342.5M624.5 335.9V340.3M625.5 335.9V340.3M626.5 335.9V340.3M627.5 335.9V340.3M628.5 335.9V338.5M629.5 331.7V338.5M630.5 332.9V338.5M631.5 334.1V341.1M632.5 331.8V340.3M633.5 334.1V341.9M634.5 334.1V340.3M635.5 334.1V341.1M636.5 334.1V340.3M637.5 334.1V340.3M638.5 334.1V340.3M639.5 334.1V340.3M640.5 334.1V340.3M641.5 334.1V340.3M642.5 334.1V340.3M643.5 334.1V340.3M644.5 334.1V340.3M645.5 335.9V340.3M646.5 335.9V340.3M647.5 333.4V340.3M648.5 334.1V340.3M649.5 334.1V340.3M650.5 335.9V340.3M651.5 335.9V340.3M652.5 332.4V338.5M653.5 335.9V340.3M654.5 335.9V340.3M655.5 334.1V340.3M656.5 334.1V341.5M657.5 334.1V341.7M658.5 334.1V340.3M659.5 334.1V340.3M660.5 334.1V340.3M661.5 334.1V340.3M662.5 334.1V340.3M663.5 334.1V340.3M674.5 218.1V225.6M675.5 218.1V224.3M676.5 216.4V226.6M677.5 215.8V224.3M678.5 217.2V225.8M679.5 218.1V224.3M680.5 217.3V224.3M681.5 219.9V224.3M682.5 219.9V224.3M683.5 219.9V224.3M684.5 216.3V224.3M685.5 215.8V224.3M686.5 219.9V224.3M687.5 219.9V224.3M688.5 219.9V224.3M689.5 219.9V226.2M690.5 218.1V224.3M691.5 218.1V224.3M692.5 219.9V224.3M693.5 216.6V226.1M694.5 216.6V224.3M695.5 218.1V224.3M696.5 218.1V224.3M697.5 218.1V224.3M698.5 218.1V224.3M699.5 218.1V224.3M700.5 218.1V222.5M701.5 216.9V222.5M702.5 217.1V226.5M703.5 218.1V226.6M704.5 219.9V224.3M705.5 218.1V224.3M706.5 218.1V224.3M707.5 218.1V225.5M708.5 219.9V226.3M709.5 218.1V224.3M710.5 219.9V226.1M711.5 216.8V224.3M712.5 218.1V224.3M713.5 218.1V224.3M714.5 218.1V224.3M715.5 218.1V224.3M716.5 218.1V224.3M717.5 218.1V225.7M718.5 218.1V224.3M719.5 218.1V226.0M720.5 218.1V224.3M721.5 218.1V224.3M722.5 217.3V226.7M723.5 218.1V224.3M724.5 218.1V224.3M725.5 218.1V224.3M726.5 219.9V224.3M727.5 218.1V225.0M728.5 218.1V225.6M729.5 218.1V224.3M730.5 218.1V224.3M731.5 218.1V224.3M732.5 218.1V225.8M733.5 218.1V222.5M734.5 218.1V222.5M735.5 218.1V222.5M736.5 218.1V224.3M737.5 218.1V226.4M738.5 218.1V224.3M739.5 218.1V224.3M740.5 218.1V225.8M741.5 218.1V224.3M742.5 218.1V224.3M743.5 218.1V222.5M744.5 218.1V222.5M745.5 219.9V225.7M746.5 219.9V222.5M747.5 219.9V224.3M748.5 219.9V224.3M749.5 219.9V225.3M750.5 218.1V225.9M751.5 218.1V224.3M752.5 216.0V224.3M753.5 218.1V224.3M754.5 218.1V224.3M755.5 218.1V224.3M756.5 218.1V224.3M757.5 218.1V224.3M758.5 218.1V224.3M759.5 218.1V224.3M760.5 218.1V224.3M761.5 217.5V224.3M762.5 216.5V223.7M763.5 215.9V222.7M764.5 216.5V223.7M765.5 217.5V224.3M766.5 215.9V224.3M767.5 219.9V224.3M768.5 218.1V224.3M769.5 219.9V225.2M770.5 217.5V224.3M771.5 218.1V226.2M772.5 218.1V224.3M773.5 219.9V224.3M774.5 216.6V226.1M775.5 218.1V224.3M776.5 216.8V224.3M777.5 216.8V226.0M778.5 217.1V225.0M779.5 218.1V224.3M780.5 218.1V224.3M781.5 218.1V224.3M782.5 218.1V224.3M783.5 219.9V224.3M784.5 216.2V224.3M785.5 218.1V225.0M786.5 218.1V224.3M787.5 218.1V224.3M788.5 218.1V222.5M789.5 215.8V222.5M790.5 215.4V224.6M791.5 215.4V222.5M799.5 337.2V341.3M800.5 335.4V340.7M801.5 334.8V339.8M802.5 334.1V342.7M803.5 334.1V340.3M804.5 334.1V338.5M805.5 332.2V338.5M806.5 332.5V338.5M807.5 331.8V342.0M808.5 332.1V340.3M809.5 334.1V340.3M810.5 333.4V340.3M811.5 334.1V340.3M812.5 334.1V340.3M813.5 335.9V338.5M814.5 331.9V338.5M815.5 335.9V340.3M816.5 335.9V340.3M817.5 333.1V340.3M818.5 332.4V340.3M819.5 335.9V340.3M820.5 334.1V342.2M821.5 334.1V340.3M822.5 334.1V338.5M823.5 331.1V338.5M831.5 334.1V340.3M832.5 334.1V340.3M833.5 334.1V341.4M834.5 332.4V340.3M835.5 335.9V340.3M836.5 335.9V338.5M837.5 334.1V338.5M838.5 334.1V340.3M839.5 334.1V338.5M840.5 334.1V338.5M841.5 334.1V340.3M842.5 334.1V340.3M843.5 334.1V341.6M844.5 331.8V340.3M845.5 334.1V340.3M846.5 334.1V340.3M847.5 334.1V340.3M848.5 334.1V340.3M849.5 334.1V340.3M850.5 331.7V340.3M851.5 334.1V340.3M852.5 335.9V340.3M853.5 333.0V340.3M854.5 334.1V340.3M855.5 334.1V340.3M856.5 332.6V340.3M857.5 334.1V340.3M858.5 334.1V340.3M859.5 334.1V340.3M860.5 332.7V340.3M861.5 334.1V340.3M862.5 334.1V340.3M863.5 334.1V340.3M864.5 335.9V338.5M865.5 335.9V340.3M866.5 335.9V341.5M867.5 335.9V340.3M868.5 333.3V340.3M869.5 334.1V341.7M870.5 334.1V341.5M871.5 333.1V340.3M872.5 335.9V340.3M873.5 332.2V340.3M874.5 334.1V340.3M875.5 334.1V340.3M876.5 334.1V341.5M877.5 334.1V340.3M878.5 334.1V340.3M879.5 334.1V341.5M880.5 334.1V340.3M881.5 335.9V342.0M882.5 332.8V340.3M883.5 335.9V340.3M884.5 333.4V338.5M885.5 335.9V340.3M886.5 333.4V341.1M887.5 335.9V340.3M888.5 332.0V342.5M889.5 335.9V340.3M890.5 335.9V340.3M891.5 335.9V340.3M892.5 335.9V338.5M893.5 334.1V338.5M894.5 333.4V341.8M895.5 334.1V341.9M896.5 334.1V340.3M897.5 334.1V340.3M898.5 334.1V340.3M899.5 333.1V340.3M900.5 334.1V340.3M901.5 335.9V340.3M902.5 334.1V340.3M903.5 334.1V340.3M904.5 335.9V340.3M905.5 333.0V340.3M906.5 334.1V340.3M907.5 334.1V340.3M908.5 334.1V340.3M909.5 334.1V340.3M910.5 334.1V340.3M911.5 334.1V340.3M912.5 334.1V340.9M913.5 334.1V340.3M914.5 334.1V340.3M915.5 332.7V340.3M916.5 333.0V338.5M917.5 333.2V338.5M918.5 335.9V338.5M919.5 334.1V338.5M920.5 334.1V340.3M921.5 334.1V342.0M922.5 334.1V340.3M923.5 332.2V340.3M924.5 334.1V340.3M925.5 334.1V340.3M926.5 331.8V338.5M927.5 334.1V340.3M928.5 334.1V341.8M929.5 331.9V340.3M930.5 335.9V340.3M931.5 335.9V341.0M932.5 335.9V340.3M933.5 334.1V341.4M934.5 334.1V340.3M935.5 334.1V340.3M936.5 334.1V340.3M937.5 335.9V340.3M938.5 331.9V340.3M939.5 334.1V340.3M940.5 334.1V340.3M941.5 333.2V341.1M942.5 334.1V340.3M943.5 333.2V340.3M944.5 334.1V340.3M945.5 332.3V340.3M946.5 334.1V340.3M947.5 331.8V340.3M948.5 334.1V340.3M949.5 334.1V342.1M950.5 335.9V340.3M951.5 335.9V341.3M952.5 332.5V338.5M953.5 332.0V340.3M954.5 334.1V340.3M955.5 332.4V340.3M956.5 334.1V340.3M957.5 332.0V340.3M958.5 334.1V341.1M959.5 333.1V340.3M960.5 334.1V342.4M961.5 332.3V340.3M962.5 334.1V340.3M963.5 334.1V340.3M964.5 334.1V340.3M965.5 333.0V340.3M966.5 333.0V340.3M967.5 334.1V340.3M968.5 334.1V340.3M969.5 334.1V340.3M970.5 334.1V340.3M971.5 334.1V340.3M972.5 332.9V340.3M973.5 335.9V340.3M974.5 335.9V340.9M975.5 332.7V338.5M976.5 334.1V341.0M986.5 218.3V226.9M987.5 218.1V224.5M988.5 217.4V225.9M989.5 218.1V224.3M990.5 216.3V224.3M991.5 218.1V224.3M992.5 218.1V224.3M993.5 216.6V224.3M994.5 218.1V224.3M995.5 218.1V224.3M996.5 218.1V226.6M997.5 218.1V226.6M998.5 218.1V224.3M999.5 218.1V224.3M1000.5 218.1V224.3M1001.5 216.4V225.5M1002.5 217.1V222.5M1003.5 218.1V226.4M1004.5 218.1V222.5M1005.5 217.3V224.3M1006.5 216.0V225.9M1007.5 219.9V226.1M1008.5 219.9V225.6M1009.5 219.9V224.3M1010.5 219.9V225.2M1011.5 218.1V224.3M1012.5 218.1V226.6M1013.5 216.0V224.3M1014.5 218.1V224.3M1015.5 219.9V224.3M1016.5 216.4V224.3M1017.5 218.1V226.2M1018.5 216.2V222.5M1019.5 218.1V222.5M1020.5 216.5V225.9" stroke="#089696" stroke-width="1" fill="none" shape-rendering="crispEdges"/><path d="M39.5 336.0L40.5 330.2L41.5 319.5L42.5 300.2L43.5 280.3L44.5 263.7L45.5 249.0L46.5 238.0L47.5 228.9L48.5 223.6M166.5 219.6L167.5 227.1L168.5 241.7L169.5 261.0L170.5 282.8L171.5 304.5L172.5 322.9L173.5 335.4M200.5 328.4L201.5 322.6M202.5 322.3L203.5 327.9M352.5 333.3L353.5 326.0L354.5 310.0L355.5 290.1L356.5 271.3L357.5 256.1L358.5 242.8L359.5 233.0L360.5 226.3M479.5 222.3L480.5 233.5L481.5 250.8L482.5 271.5L483.5 294.2L484.5 314.0L485.5 330.7L486.5 338.2M512.5 330.5L513.5 325.4M664.5 336.5L665.5 330.3L666.5 319.3L667.5 300.1L668.5 280.4L669.5 263.9L670.5 249.0L671.5 237.8L672.5 228.9L673.5 223.8M791.5 220.0L792.5 227.1L793.5 241.9L794.5 260.8L795.5 282.7L796.5 304.2L797.5 323.1L798.5 335.3M825.5 328.5L826.5 322.4M827.5 322.4L828.5 328.2M977.5 334.0L978.5 326.2L979.5 310.0L980.5 289.9L981.5 271.5L982.5 256.6L983.5 242.7L984.5 233.0L985.5 225.8" stroke="#089090" stroke-width="1.15" fill="none" stroke-linejoin="round"/><path d="M21.5 337.1L22.5 337.1L23.5 336.7L24.5 337.0L25.5 337.3L26.5 337.6L27.5 337.4L28.5 337.3L29.5 337.3L30.5 337.3L31.5 337.2L32.5 337.3L33.5 337.0L34.5 337.1L35.5 337.1L36.5 337.3L37.5 337.2L38.5 337.2L39.5 336.0M48.5 223.6L49.5 220.7L50.5 220.8L51.5 221.1L52.5 221.5L53.5 221.5L54.5 221.5L55.5 221.4L56.5 221.2L57.5 221.3L58.5 221.1L59.5 221.1L60.5 221.0L61.5 221.4L62.5 221.4L63.5 221.2L64.5 220.8L65.5 221.1L66.5 221.2L67.5 221.5L68.5 221.1L69.5 221.3L70.5 221.2L71.5 221.3L72.5 221.2L73.5 221.2L74.5 221.4L75.5 221.5L76.5 221.7L77.5 221.7L78.5 221.6L79.5 221.1L80.5 221.1L81.5 221.2L82.5 221.2L83.5 221.1L84.5 221.3L85.5 221.1L86.5 220.9L87.5 220.4L88.5 220.8L89.5 221.0L90.5 221.6L91.5 221.4L92.5 221.3L93.5 221.2L94.5 221.1L95.5 221.1L96.5 220.9L97.5 221.1L98.5 221.4L99.5 221.6L100.5 221.3L101.5 221.1L102.5 221.2L103.5 221.2L104.5 221.2L105.5 221.1L106.5 220.9L107.5 221.1L108.5 221.3L109.5 221.3L110.5 221.5L111.5 221.2L112.5 221.3L113.5 221.0L114.5 221.1L115.5 221.0L116.5 221.1L117.5 221.0L118.5 220.9L119.5 220.9L120.5 220.7L121.5 220.8L122.5 221.0L123.5 221.4L124.5 221.5L125.5 221.8L126.5 221.7L127.5 221.5L128.5 221.5L129.5 221.3L130.5 221.5L131.5 221.0L132.5 221.3L133.5 220.8L134.5 221.1L135.5 221.0L136.5 221.0L137.5 220.2L138.5 219.5L139.5 220.5L140.5 221.1L141.5 221.1L142.5 221.1L143.5 221.3L144.5 221.4L145.5 221.3L146.5 221.1L147.5 220.9L148.5 220.8L149.5 220.8L150.5 220.9L151.5 221.2L152.5 221.5L153.5 221.4L154.5 221.4L155.5 221.1L156.5 221.5L157.5 221.4L158.5 221.6L159.5 221.1L160.5 221.0L161.5 221.0L162.5 221.1L163.5 221.2L164.5 220.7L165.5 219.3L166.5 219.6M173.5 335.4L174.5 339.3L175.5 338.8L176.5 338.2L177.5 337.6L178.5 337.4L179.5 337.4L180.5 337.1L181.5 336.9L182.5 336.8L183.5 336.7L184.5 337.0L185.5 337.0L186.5 337.2L187.5 337.3L188.5 337.4L189.5 337.5L190.5 337.2L191.5 337.1L192.5 337.1L193.5 337.2L194.5 337.3L195.5 337.3L196.5 337.1L197.5 337.0L198.5 336.1L199.5 332.8L200.5 328.4M201.5 322.6L202.5 322.3M203.5 327.9L204.5 331.8L205.5 335.7L206.5 337.5L207.5 337.5L208.5 337.4L209.5 336.9L210.5 337.0L211.5 337.1L212.5 337.3L213.5 337.2L214.5 337.2L215.5 337.5L216.5 337.6L217.5 337.4L218.5 337.3L219.5 337.0L220.5 337.2L221.5 336.9L222.5 337.3L223.5 337.1L224.5 337.4L225.5 337.3L226.5 337.2L227.5 336.7L228.5 336.6L229.5 337.1L230.5 337.4L231.5 337.4L232.5 337.2L233.5 337.3L234.5 337.3L235.5 337.4L236.5 337.2L237.5 337.3L238.5 337.4L239.5 337.4L240.5 337.6L241.5 337.5L242.5 337.6L243.5 336.9L244.5 336.9L245.5 337.1L246.5 337.3L247.5 336.9L248.5 337.0L249.5 337.0L250.5 337.2L251.5 337.5L252.5 337.9L253.5 338.1L254.5 337.6L255.5 337.4L256.5 336.9L257.5 337.0L258.5 336.8L259.5 336.9L260.5 336.7L261.5 336.8L262.5 337.1L263.5 337.3L264.5 337.4L265.5 337.2L266.5 337.0L267.5 336.6L268.5 336.7L269.5 337.0L270.5 337.2L271.5 337.4L272.5 337.1L273.5 337.0L274.5 336.8L275.5 336.8L276.5 337.2L277.5 337.4L278.5 337.5L279.5 337.1L280.5 337.0L281.5 336.9L282.5 337.0L283.5 336.9L284.5 337.0L285.5 336.8L286.5 336.9L287.5 336.8L288.5 336.7L289.5 336.6L290.5 336.7L291.5 336.9L292.5 337.1L293.5 337.4L294.5 337.6L295.5 337.5L296.5 337.4L297.5 337.2L298.5 337.4L299.5 337.4L300.5 337.3L301.5 337.2L302.5 337.2L303.5 337.0L304.5 336.8L305.5 336.6L306.5 336.7L307.5 336.7L308.5 336.6L309.5 337.0L310.5 337.2L311.5 337.7L312.5 337.6L313.5 337.7L314.5 337.3L315.5 337.4L316.5 337.1L317.5 336.8L318.5 336.6L319.5 336.9L320.5 337.4L321.5 337.6L322.5 337.6L323.5 337.2L324.5 337.4L325.5 337.5L326.5 337.6L327.5 337.3L328.5 337.0L329.5 337.3L330.5 337.3L331.5 337.5L332.5 337.3L333.5 337.3L334.5 337.3L335.5 337.0L336.5 336.8L337.5 336.6L338.5 336.8L339.5 337.3L340.5 337.3L341.5 337.3L342.5 337.0L343.5 337.1L344.5 337.1L345.5 336.9L346.5 337.2L347.5 337.1L348.5 337.3L349.5 337.2L350.5 337.3L351.5 337.0L352.5 333.3M360.5 226.3L361.5 222.5L362.5 221.4L363.5 220.8L364.5 221.0L365.5 221.1L366.5 221.5L367.5 221.4L368.5 221.7L369.5 221.7L370.5 221.6L371.5 221.4L372.5 221.3L373.5 221.2L374.5 221.4L375.5 221.4L376.5 221.7L377.5 221.5L378.5 221.4L379.5 221.0L380.5 221.1L381.5 221.0L382.5 221.1L383.5 221.1L384.5 221.2L385.5 221.3L386.5 221.2L387.5 221.3L388.5 220.8L389.5 220.7L390.5 220.6L391.5 220.9L392.5 221.2L393.5 221.0L394.5 221.0L395.5 221.0L396.5 221.4L397.5 221.4L398.5 221.5L399.5 221.1L400.5 221.1L401.5 221.0L402.5 221.2L403.5 221.1L404.5 221.0L405.5 221.0L406.5 221.4L407.5 221.6L408.5 221.6L409.5 221.3L410.5 221.4L411.5 221.4L412.5 221.7L413.5 221.6L414.5 221.4L415.5 221.0L416.5 220.8L417.5 220.8L418.5 221.1L419.5 221.3L420.5 221.3L421.5 221.4L422.5 221.3L423.5 221.4L424.5 221.2L425.5 221.1L426.5 221.1L427.5 220.8L428.5 220.8L429.5 221.0L430.5 220.9L431.5 220.9L432.5 221.0L433.5 221.3L434.5 221.2L435.5 221.1L436.5 221.0L437.5 221.0L438.5 221.2L439.5 221.1L440.5 221.2L441.5 221.0L442.5 221.2L443.5 221.1L444.5 220.8L445.5 220.8L446.5 220.9L447.5 221.1L448.5 221.1L449.5 221.0L450.5 219.8L451.5 219.9L452.5 220.5L453.5 221.1L454.5 221.3L455.5 221.3L456.5 221.5L457.5 221.5L458.5 221.4L459.5 221.4L460.5 221.1L461.5 221.7L462.5 221.5L463.5 221.4L464.5 220.7L465.5 220.6L466.5 220.6L467.5 220.8L468.5 220.8L469.5 220.8L470.5 220.9L471.5 221.3L472.5 221.1L473.5 221.1L474.5 220.7L475.5 220.7L476.5 220.6L477.5 219.7L478.5 218.9L479.5 222.3M486.5 338.2L487.5 339.4L488.5 338.6L489.5 337.7L490.5 337.3L491.5 337.3L492.5 337.9L493.5 337.6L494.5 337.7L495.5 337.2L496.5 337.3L497.5 337.3L498.5 337.2L499.5 337.2L500.5 337.1L501.5 337.2L502.5 337.3L503.5 337.5L504.5 337.6L505.5 337.5L506.5 337.3L507.5 337.0L508.5 336.9L509.5 336.8L510.5 337.1L511.5 335.0L512.5 330.5M513.5 325.4L514.5 321.0L515.5 325.4L516.5 330.0L517.5 333.6L518.5 336.4L519.5 336.7L520.5 336.7L521.5 337.0L522.5 337.0L523.5 336.9L524.5 337.2L525.5 337.3L526.5 337.4L527.5 337.4L528.5 337.4L529.5 337.3L530.5 337.1L531.5 337.1L532.5 336.9L533.5 337.1L534.5 337.1L535.5 337.2L536.5 336.9L537.5 337.2L538.5 337.4L539.5 337.6L540.5 337.2L541.5 336.8L542.5 336.9L543.5 337.1L544.5 337.1L545.5 337.2L546.5 337.3L547.5 337.3L548.5 337.1L549.5 336.9L550.5 337.1L551.5 337.1L552.5 337.0L553.5 337.2L554.5 337.2L555.5 337.7L556.5 337.6L557.5 337.5L558.5 337.4L559.5 337.3L560.5 337.5L561.5 337.4L562.5 337.2L563.5 337.1L564.5 337.0L565.5 337.0L566.5 336.7L567.5 336.8L568.5 336.8L569.5 337.0L570.5 337.0L571.5 337.2L572.5 337.5L573.5 337.6L574.5 337.3L575.5 337.0L576.5 336.9L577.5 337.2L578.5 337.1L579.5 337.1L580.5 336.9L581.5 336.9L582.5 336.8L583.5 336.7L584.5 336.8L585.5 337.3L586.5 337.3L587.5 337.3L588.5 337.2L589.5 337.3L590.5 337.6L591.5 337.6L592.5 337.5L593.5 337.5L594.5 337.6L595.5 337.6L596.5 337.4L597.5 336.9L598.5 336.9L599.5 336.8L600.5 337.0L601.5 337.0L602.5 337.1L603.5 337.1L604.5 337.2L605.5 337.3L606.5 337.2L607.5 337.0L608.5 337.1L609.5 337.4L610.5 337.5L611.5 337.4L612.5 337.0L613.5 336.8L614.5 336.7L615.5 337.1L616.5 337.2L617.5 337.1L618.5 337.2L619.5 337.0L620.5 337.3L621.5 337.1L622.5 337.3L623.5 337.3L624.5 337.6L625.5 337.5L626.5 337.4L627.5 336.9L628.5 337.0L629.5 336.9L630.5 337.1L631.5 337.3L632.5 337.2L633.5 336.9L634.5 336.9L635.5 337.2L636.5 337.1L637.5 337.0L638.5 337.0L639.5 337.3L640.5 337.4L641.5 337.0L642.5 337.3L643.5 337.2L644.5 337.8L645.5 337.9L646.5 337.9L647.5 337.4L648.5 337.1L649.5 337.1L650.5 337.2L651.5 337.0L652.5 337.2L653.5 337.2L654.5 337.2L655.5 336.9L656.5 336.7L657.5 337.0L658.5 337.0L659.5 337.0L660.5 337.1L661.5 337.0L662.5 337.3L663.5 337.4L664.5 336.5M673.5 223.8L674.5 221.4L675.5 221.0L676.5 221.0L677.5 221.1L678.5 221.2L679.5 221.3L680.5 221.2L681.5 221.0L682.5 221.3L683.5 221.5L684.5 221.4L685.5 221.0L686.5 221.2L687.5 221.6L688.5 221.7L689.5 221.6L690.5 221.2L691.5 221.2L692.5 221.1L693.5 221.0L694.5 220.9L695.5 220.9L696.5 221.4L697.5 221.4L698.5 221.3L699.5 221.4L700.5 221.4L701.5 221.2L702.5 220.9L703.5 220.9L704.5 221.3L705.5 221.4L706.5 221.3L707.5 221.5L708.5 221.4L709.5 221.6L710.5 221.3L711.5 221.5L712.5 221.4L713.5 221.4L714.5 221.3L715.5 221.1L716.5 220.9L717.5 220.9L718.5 221.1L719.5 221.2L720.5 221.1L721.5 221.3L722.5 221.5L723.5 221.3L724.5 221.1L725.5 220.8L726.5 220.7L727.5 220.8L728.5 220.8L729.5 221.1L730.5 221.0L731.5 221.2L732.5 221.5L733.5 221.6L734.5 221.5L735.5 221.3L736.5 221.3L737.5 221.1L738.5 221.1L739.5 221.0L740.5 221.2L741.5 221.3L742.5 221.4L743.5 221.5L744.5 221.8L745.5 221.5L746.5 221.3L747.5 220.8L748.5 221.0L749.5 220.8L750.5 220.9L751.5 221.0L752.5 221.1L753.5 221.0L754.5 221.0L755.5 220.7L756.5 220.9L757.5 221.0L758.5 221.2L759.5 221.1L760.5 221.0L761.5 220.7L762.5 219.8L763.5 218.9L764.5 219.9L765.5 220.8L766.5 221.4L767.5 221.6L768.5 221.6L769.5 221.3L770.5 221.0L771.5 221.2L772.5 221.6L773.5 221.7L774.5 221.5L775.5 221.3L776.5 221.2L777.5 221.2L778.5 221.0L779.5 221.2L780.5 221.3L781.5 221.5L782.5 221.6L783.5 221.6L784.5 221.1L785.5 220.7L786.5 220.6L787.5 221.0L788.5 221.5L789.5 221.3L790.5 219.7L791.5 220.0M798.5 335.3L799.5 339.6L800.5 339.0L801.5 338.5L802.5 337.9L803.5 337.5L804.5 337.1L805.5 336.8L806.5 336.6L807.5 337.1L808.5 337.1L809.5 337.1L810.5 336.9L811.5 337.2L812.5 337.1L813.5 337.0L814.5 336.9L815.5 336.8L816.5 337.0L817.5 336.9L818.5 336.9L819.5 336.8L820.5 336.8L821.5 337.0L822.5 337.1L823.5 336.9L824.5 333.1L825.5 328.5M826.5 322.4L827.5 322.4M828.5 328.2L829.5 331.8L830.5 335.4L831.5 336.9L832.5 337.2L833.5 337.2L834.5 337.4L835.5 337.4L836.5 337.3L837.5 337.2L838.5 337.2L839.5 337.2L840.5 337.2L841.5 337.3L842.5 337.4L843.5 337.4L844.5 337.1L845.5 337.0L846.5 336.7L847.5 337.0L848.5 336.9L849.5 337.4L850.5 337.7L851.5 337.8L852.5 337.8L853.5 337.4L854.5 337.4L855.5 337.1L856.5 337.1L857.5 337.4L858.5 337.5L859.5 337.2L860.5 336.9L861.5 336.8L862.5 337.2L863.5 337.4L864.5 337.5L865.5 337.5L866.5 337.4L867.5 337.3L868.5 337.1L869.5 336.9L870.5 337.0L871.5 337.1L872.5 337.5L873.5 337.2L874.5 337.0L875.5 337.0L876.5 337.3L877.5 337.6L878.5 337.3L879.5 337.3L880.5 337.0L881.5 337.2L882.5 337.1L883.5 337.3L884.5 337.4L885.5 337.5L886.5 337.2L887.5 337.2L888.5 337.1L889.5 337.3L890.5 337.0L891.5 336.9L892.5 337.2L893.5 337.2L894.5 337.0L895.5 336.9L896.5 337.0L897.5 337.6L898.5 337.4L899.5 337.8L900.5 337.6L901.5 337.9L902.5 337.8L903.5 337.5L904.5 337.6L905.5 337.3L906.5 337.2L907.5 336.9L908.5 336.8L909.5 336.8L910.5 336.8L911.5 337.1L912.5 337.4L913.5 337.5L914.5 337.4L915.5 337.2L916.5 337.0L917.5 337.0L918.5 337.0L919.5 337.2L920.5 337.0L921.5 336.7L922.5 336.7L923.5 336.9L924.5 337.4L925.5 337.6L926.5 337.8L927.5 337.6L928.5 337.6L929.5 337.4L930.5 337.4L931.5 337.4L932.5 337.8L933.5 337.8L934.5 337.4L935.5 337.3L936.5 337.1L937.5 337.3L938.5 337.0L939.5 337.0L940.5 337.2L941.5 337.4L942.5 337.4L943.5 337.2L944.5 337.1L945.5 337.2L946.5 337.2L947.5 337.1L948.5 336.9L949.5 336.9L950.5 337.1L951.5 337.0L952.5 337.1L953.5 337.1L954.5 337.6L955.5 337.7L956.5 337.2L957.5 336.8L958.5 336.6L959.5 337.1L960.5 337.4L961.5 337.6L962.5 337.2L963.5 337.0L964.5 336.9L965.5 337.3L966.5 337.5L967.5 337.3L968.5 337.4L969.5 337.0L970.5 337.1L971.5 337.0L972.5 337.6L973.5 337.5L974.5 337.2L975.5 336.9L976.5 336.9L977.5 334.0M985.5 225.8L986.5 222.5L987.5 221.2L988.5 220.9L989.5 220.8L990.5 221.0L991.5 221.4L992.5 221.5L993.5 221.6L994.5 221.5L995.5 221.9L996.5 221.6L997.5 221.7L998.5 221.2L999.5 221.4L1000.5 221.1L1001.5 221.3L1002.5 221.1L1003.5 221.0L1004.5 220.8L1005.5 220.8L1006.5 221.1L1007.5 221.3L1008.5 221.3L1009.5 221.3L1010.5 221.1L1011.5 221.2L1012.5 221.1L1013.5 221.5L1014.5 221.5L1015.5 221.3L1016.5 220.9L1017.5 221.1L1018.5 221.0L1019.5 221.1L1020.5 220.9" stroke="#18e8e8" stroke-width="1.8" fill="none" stroke-linejoin="round"/><path d="M21.5 171.6V176.7M22.5 170.8V176.7M23.5 172.9V176.7M24.5 172.9V176.7M25.5 174.7V176.7M26.5 174.7V177.3M27.5 174.7V177.3M28.5 171.3V177.3M29.5 172.9V179.8M30.5 172.9V180.2M31.5 172.9V180.6M32.5 174.7V177.3M33.5 174.7V177.3M34.5 174.7V177.3M35.5 171.6V179.1M36.5 174.7V179.1M37.5 172.9V179.1M38.5 172.9V179.1M39.5 172.9V179.1M49.5 171.4V179.6M50.5 172.7V179.6M51.5 173.3V179.5M52.5 173.2V179.5M53.5 172.0V179.4M54.5 174.9V179.4M55.5 172.3V179.3M56.5 174.8V180.0M57.5 174.8V179.2M58.5 174.7V180.0M59.5 172.3V179.1M60.5 172.9V179.1M61.5 172.9V179.1M62.5 172.9V181.4M63.5 172.9V179.1M64.5 172.9V179.1M65.5 172.0V181.3M66.5 172.9V179.1M67.5 172.9V180.5M68.5 172.9V181.3M69.5 172.9V180.0M70.5 172.9V179.1M71.5 172.9V180.0M72.5 172.9V179.1M73.5 172.9V179.1M74.5 172.9V177.3M75.5 172.9V177.3M76.5 172.9V179.9M77.5 172.9V179.1M78.5 172.9V179.1M79.5 172.9V179.1M80.5 172.9V180.1M81.5 172.9V179.1M82.5 172.9V179.1M83.5 172.1V180.8M84.5 174.7V179.1M85.5 172.0V179.1M86.5 172.9V179.1M87.5 172.9V179.1M88.5 172.9V179.1M89.5 172.9V179.1M90.5 172.9V179.1M91.5 172.9V180.4M92.5 172.9V179.1M93.5 172.9V179.1M94.5 172.9V179.1M95.5 172.9V179.1M96.5 171.3V179.1M97.5 172.9V179.1M98.5 170.6V179.1M99.5 172.9V180.9M100.5 171.0V180.6M101.5 172.9V179.1M102.5 170.7V180.3M103.5 172.9V179.1M104.5 172.9V179.1M105.5 172.9V179.1M106.5 172.9V179.1M107.5 172.9V179.1M108.5 172.9V181.4M109.5 172.9V177.3M110.5 172.9V177.3M111.5 172.9V177.3M112.5 172.9V180.7M113.5 172.9V177.3M114.5 172.1V179.1M115.5 172.9V180.6M116.5 172.9V180.9M117.5 172.9V179.1M118.5 172.9V177.3M119.5 171.6V177.3M120.5 172.9V177.3M121.5 172.9V179.1M122.5 172.9V179.1M123.5 172.9V179.1M124.5 172.9V179.1M125.5 172.9V179.1M126.5 171.3V179.1M127.5 174.7V177.3M128.5 174.7V177.3M129.5 172.9V177.3M130.5 172.9V180.9M131.5 172.3V177.3M132.5 172.9V177.3M133.5 174.7V179.8M134.5 174.7V179.1M142.5 169.7V178.3M143.5 173.8V180.1M144.5 173.1V180.0M145.5 173.7V180.0M146.5 173.6V181.6M147.5 173.5V178.0M148.5 173.5V177.9M149.5 173.4V181.7M150.5 172.0V179.6M151.5 173.3V181.8M152.5 173.3V179.5M153.5 173.3V179.5M154.5 173.2V181.5M155.5 173.2V179.4M156.5 173.2V179.4M157.5 173.2V179.4M158.5 173.1V179.4M159.5 173.1V179.3M160.5 171.6V179.3M161.5 173.0V179.3M162.5 173.0V180.2M163.5 173.0V180.0M164.5 172.9V179.2M165.5 172.9V180.9M174.5 58.4V65.3M175.5 57.3V64.6M176.5 60.2V65.6M177.5 57.6V66.6M178.5 60.4V66.6M179.5 60.3V66.6M180.5 60.3V66.5M181.5 60.3V64.7M182.5 58.8V66.5M183.5 60.2V66.4M184.5 58.0V66.4M185.5 58.9V67.8M186.5 58.9V65.1M187.5 58.9V65.1M188.5 58.9V67.2M189.5 58.9V65.1M190.5 57.1V65.1M191.5 60.7V65.1M192.5 60.7V65.1M193.5 58.9V65.1M194.5 58.9V65.9M195.5 59.6V66.6M196.5 60.4V68.4M197.5 59.6V68.6M206.5 175.4V183.6M207.5 173.7V181.6M208.5 171.5V179.9M209.5 172.9V179.1M210.5 174.7V179.1M211.5 172.9V179.1M212.5 172.9V179.1M213.5 172.9V179.1M214.5 172.9V179.1M215.5 171.4V179.1M216.5 170.7V180.8M217.5 170.6V180.3M218.5 174.7V180.7M219.5 172.9V179.1M220.5 172.9V180.6M221.5 172.9V179.1M222.5 172.9V179.1M223.5 172.9V179.1M224.5 172.9V177.3M225.5 172.9V177.3M226.5 172.9V180.1M227.5 172.9V180.5M228.5 172.3V179.1M229.5 172.9V180.2M230.5 172.9V179.1M231.5 172.9V179.1M232.5 172.9V179.1M233.5 172.9V180.4M234.5 174.7V179.9M235.5 172.1V179.9M236.5 172.9V179.1M237.5 172.1V179.1M238.5 172.1V179.1M239.5 172.9V179.1M240.5 172.9V179.1M241.5 172.9V179.1M242.5 172.2V179.1M243.5 172.9V179.1M244.5 172.9V179.1M245.5 172.9V179.1M246.5 171.1V179.1M247.5 172.9V179.1M248.5 172.9V179.1M249.5 172.9V180.4M250.5 172.9V179.1M251.5 172.9V179.1M252.5 171.5V181.4M253.5 172.9V177.3M254.5 171.7V177.3M255.5 172.9V180.5M256.5 172.9V181.4M257.5 172.9V179.1M258.5 172.9V179.1M259.5 171.4V179.1M260.5 172.9V179.1M261.5 172.9V179.1M262.5 172.9V179.1M263.5 171.0V181.0M264.5 172.9V179.1M265.5 172.9V179.1M266.5 172.9V179.1M267.5 172.9V179.1M268.5 172.9V179.1M269.5 172.9V179.1M270.5 172.9V180.1M271.5 171.8V179.1M272.5 172.9V179.1M273.5 172.9V179.1M274.5 172.9V179.1M275.5 172.9V179.1M276.5 172.9V179.1M277.5 172.9V179.1M278.5 172.9V179.1M279.5 174.7V179.1M280.5 174.7V179.1M281.5 172.9V179.1M282.5 174.7V179.1M283.5 174.7V179.1M284.5 174.7V179.1M285.5 174.7V179.8M286.5 171.0V179.1M287.5 174.7V177.3M288.5 174.7V180.9M289.5 174.7V179.1M290.5 174.7V179.1M291.5 174.7V179.1M292.5 174.7V179.1M293.5 171.6V179.1M294.5 174.7V179.1M295.5 174.7V180.6M296.5 172.9V177.3M297.5 172.9V177.3M298.5 172.9V177.3M299.5 172.9V180.6M300.5 171.6V177.3M301.5 172.0V177.3M302.5 172.9V179.1M303.5 170.7V179.1M304.5 172.9V180.9M305.5 172.9V179.1M306.5 171.5V179.1M307.5 172.9V179.1M308.5 172.9V179.8M309.5 174.7V179.1M310.5 171.9V181.4M311.5 170.7V179.1M312.5 172.9V181.4M313.5 172.9V179.1M314.5 172.9V179.8M315.5 172.9V181.3M316.5 172.9V179.1M317.5 172.9V179.1M318.5 172.9V179.1M319.5 172.9V177.3M320.5 172.9V177.3M321.5 171.6V177.3M322.5 172.9V177.3M323.5 172.9V179.1M324.5 172.9V179.1M325.5 172.9V180.4M326.5 172.9V179.8M327.5 171.2V179.1M328.5 171.3V179.1M329.5 172.3V180.5M330.5 172.0V177.3M331.5 172.9V179.1M332.5 172.9V180.5M333.5 172.9V179.1M334.5 170.9V179.1M335.5 172.9V179.1M336.5 171.8V179.1M337.5 172.9V179.1M338.5 172.9V179.1M339.5 172.9V179.1M340.5 172.9V179.1M341.5 172.9V180.6M342.5 172.9V179.1M343.5 172.9V179.1M344.5 172.9V179.1M345.5 172.1V179.1M346.5 172.9V179.1M347.5 172.9V179.1M348.5 172.9V179.1M349.5 172.9V179.1M350.5 172.9V179.1M351.5 172.9V179.1M352.5 172.9V180.0M361.5 172.7V179.6M362.5 175.2V181.1M363.5 175.1V179.6M364.5 173.3V180.2M365.5 173.2V180.5M366.5 171.8V179.4M367.5 173.1V179.4M368.5 171.9V179.3M369.5 173.0V179.3M370.5 173.0V179.2M371.5 170.7V181.4M372.5 172.1V179.1M373.5 174.7V180.2M374.5 171.4V179.1M375.5 174.7V179.1M376.5 174.7V179.1M377.5 174.7V179.1M378.5 174.7V179.1M379.5 171.3V179.1M380.5 172.1V180.0M381.5 174.7V179.1M382.5 174.7V179.1M383.5 172.1V179.1M384.5 174.7V179.1M385.5 174.7V180.7M386.5 172.9V179.1M387.5 172.9V179.1M388.5 172.9V179.1M389.5 172.9V179.7M390.5 171.7V180.5M391.5 172.9V181.1M392.5 172.9V177.3M393.5 174.7V177.3M394.5 172.9V179.9M395.5 172.9V179.1M396.5 172.9V179.1M397.5 172.9V177.3M398.5 172.9V179.9M399.5 172.9V177.3M400.5 172.9V177.3M401.5 172.9V179.1M402.5 171.2V180.5M403.5 172.9V177.3M404.5 172.9V179.1M405.5 172.9V179.1M406.5 172.9V179.1M407.5 172.9V179.1M408.5 174.7V179.9M409.5 170.7V179.1M410.5 174.7V179.1M411.5 172.9V180.3M412.5 172.9V177.3M413.5 172.9V177.3M414.5 171.7V180.9M415.5 171.7V177.3M416.5 172.9V179.1M417.5 172.9V181.5M418.5 172.9V179.1M419.5 172.9V179.1M420.5 172.9V180.8M421.5 172.9V179.1M422.5 172.9V180.8M423.5 172.9V179.1M424.5 171.3V179.1M425.5 172.9V179.1M426.5 171.7V179.1M427.5 172.1V180.6M428.5 172.9V180.4M429.5 172.9V179.1M430.5 172.9V179.1M431.5 170.9V179.1M432.5 172.9V179.1M433.5 171.0V179.1M434.5 170.6V181.1M435.5 172.9V179.1M436.5 172.9V179.1M437.5 171.1V180.2M438.5 172.9V179.1M439.5 171.4V179.1M440.5 172.9V179.1M441.5 171.1V179.1M442.5 170.8V179.1M443.5 172.9V179.1M444.5 172.9V179.1M445.5 172.9V177.3M446.5 172.9V180.2M447.5 169.9V179.1M455.5 172.9V180.1M456.5 173.1V178.3M457.5 173.7V180.0M458.5 173.7V179.9M459.5 173.6V179.8M460.5 175.3V179.8M461.5 175.2V179.7M462.5 172.0V179.6M463.5 175.2V179.6M464.5 175.1V177.8M465.5 173.3V180.3M466.5 173.3V180.5M467.5 173.2V181.4M468.5 173.2V177.6M469.5 173.2V177.6M470.5 173.1V177.6M471.5 173.1V179.3M472.5 172.1V180.8M473.5 173.0V179.3M474.5 173.0V179.2M475.5 173.0V177.4M476.5 173.0V179.8M477.5 172.9V177.4M478.5 171.7V177.3M486.5 58.4V68.9M487.5 58.4V64.6M488.5 58.4V66.9M489.5 58.4V66.6M490.5 58.0V66.6M491.5 60.3V66.6M492.5 60.3V66.5M493.5 59.6V66.5M494.5 60.2V66.5M495.5 60.2V66.4M496.5 59.9V66.4M497.5 61.0V66.1M498.5 60.7V65.4M499.5 60.7V65.1M500.5 60.7V65.1M501.5 58.9V65.1M502.5 58.9V65.1M503.5 60.7V65.1M504.5 60.7V66.0M505.5 60.7V65.8M506.5 57.1V65.5M507.5 61.1V66.2M508.5 60.0V67.1M509.5 60.9V68.1M510.5 60.4V70.9M518.5 178.0V184.1M519.5 176.4V184.9M520.5 174.7V181.7M521.5 174.7V179.1M522.5 174.7V179.1M523.5 174.7V180.8M524.5 174.7V179.1M525.5 172.9V180.1M526.5 172.9V179.1M527.5 172.9V179.1M528.5 172.3V179.1M529.5 172.9V179.1M530.5 172.9V179.1M531.5 172.9V179.1M532.5 172.9V179.1M533.5 172.9V179.1M534.5 172.9V179.1M535.5 172.9V179.1M536.5 172.9V179.1M537.5 171.3V179.1M538.5 172.9V180.5M539.5 172.9V179.1M540.5 172.9V181.2M541.5 172.9V179.1M542.5 172.9V179.1M543.5 171.8V179.1M544.5 172.2V179.9M545.5 172.9V179.1M546.5 172.3V179.1M547.5 174.7V181.5M548.5 172.9V179.7M549.5 172.9V179.1M550.5 172.9V179.1M551.5 172.9V179.1M552.5 172.9V179.1M553.5 170.7V179.1M554.5 172.9V179.1M555.5 172.9V177.3M556.5 171.3V177.3M557.5 172.9V181.2M558.5 172.9V179.1M559.5 172.9V179.1M560.5 172.9V179.1M561.5 172.9V179.1M562.5 170.8V179.1M563.5 172.9V179.1M564.5 172.9V177.3M565.5 172.9V181.0M566.5 172.9V181.0M567.5 172.9V180.7M568.5 172.9V177.3M569.5 172.9V179.9M570.5 172.9V179.1M571.5 172.9V179.1M572.5 174.7V179.1M573.5 172.9V179.8M574.5 172.9V179.1M575.5 171.2V179.1M576.5 174.7V179.1M577.5 172.9V179.1M578.5 172.9V177.3M579.5 174.7V179.1M580.5 174.7V179.1M581.5 172.9V179.1M582.5 172.9V179.1M583.5 172.9V179.1M584.5 171.3V179.1M585.5 172.9V179.1M586.5 172.9V179.1M587.5 172.9V179.1M588.5 172.9V179.1M589.5 172.9V179.1M590.5 172.9V179.1M591.5 172.9V181.1M592.5 172.9V179.1M593.5 172.9V180.6M594.5 172.9V180.1M595.5 172.9V180.7M596.5 172.9V179.1M597.5 172.9V179.1M598.5 172.9V179.1M599.5 172.9V179.1M600.5 172.9V179.1M601.5 172.9V179.1M602.5 172.9V179.1M603.5 172.9V179.1M604.5 172.9V179.1M605.5 172.9V177.3M606.5 172.9V177.3M607.5 172.9V180.3M608.5 172.9V180.8M609.5 172.9V177.3M610.5 174.7V179.1M611.5 171.5V179.1M612.5 170.7V179.1M613.5 172.9V179.1M614.5 174.7V180.6M615.5 172.0V179.1M616.5 172.9V179.1M617.5 172.9V180.5M618.5 171.3V179.1M619.5 171.8V179.1M620.5 170.6V179.1M621.5 172.9V179.1M622.5 172.9V180.1M623.5 172.9V179.1M624.5 171.3V179.1M625.5 171.2V179.1M626.5 172.9V180.1M627.5 172.9V177.3M628.5 172.9V177.3M629.5 172.3V181.2M630.5 172.9V179.1M631.5 172.9V181.0M632.5 172.9V179.1M633.5 174.7V180.2M634.5 174.7V179.1M635.5 172.9V179.1M636.5 172.9V179.1M637.5 172.9V180.7M638.5 170.5V179.1M639.5 172.9V179.9M640.5 172.9V179.1M641.5 172.9V179.1M642.5 172.9V179.1M643.5 172.9V179.1M644.5 172.9V180.3M645.5 171.7V179.1M646.5 172.9V179.1M647.5 171.4V179.1M648.5 171.8V180.3M649.5 172.9V179.1M650.5 171.0V179.1M651.5 172.9V179.1M652.5 170.8V179.1M653.5 171.0V179.1M654.5 170.8V179.1M655.5 172.9V180.3M656.5 172.9V179.1M657.5 172.9V179.1M658.5 174.7V179.1M659.5 174.7V179.1M660.5 172.9V179.1M661.5 174.7V179.1M662.5 170.9V180.5M663.5 172.9V180.5M664.5 171.3V179.1M674.5 172.2V179.6M675.5 171.8V181.2M676.5 173.3V180.5M677.5 171.9V179.5M678.5 170.8V179.4M679.5 173.1V179.4M680.5 173.1V179.3M681.5 173.0V179.3M682.5 173.0V179.2M683.5 172.2V179.2M684.5 172.9V179.1M685.5 172.9V179.1M686.5 170.7V179.1M687.5 172.9V177.3M688.5 174.7V177.3M689.5 172.9V179.1M690.5 172.9V179.1M691.5 172.9V179.1M692.5 172.9V179.1M693.5 172.9V181.1M694.5 172.9V181.2M695.5 170.9V179.1M696.5 172.9V181.1M697.5 172.9V179.1M698.5 172.9V179.1M699.5 172.9V181.3M700.5 171.8V181.2M701.5 172.9V180.4M702.5 172.9V179.1M703.5 172.1V179.1M704.5 171.7V179.1M705.5 172.9V179.1M706.5 172.9V179.1M707.5 172.9V179.1M708.5 172.9V179.1M709.5 172.9V179.1M710.5 171.0V179.1M711.5 172.9V179.1M712.5 172.9V179.1M713.5 174.7V181.1M714.5 174.7V179.1M715.5 174.7V179.1M716.5 174.7V179.1M717.5 174.7V177.3M718.5 174.7V177.3M719.5 171.5V179.1M720.5 172.9V179.1M721.5 171.8V179.1M722.5 172.9V179.1M723.5 172.9V179.1M724.5 172.9V179.1M725.5 172.9V179.1M726.5 172.9V180.2M727.5 171.9V179.1M728.5 172.9V179.1M729.5 171.7V179.1M730.5 172.9V179.1M731.5 172.2V179.1M732.5 174.7V179.1M733.5 172.9V180.6M734.5 172.9V179.1M735.5 172.9V179.1M736.5 172.9V181.0M737.5 172.9V179.1M738.5 172.9V179.1M739.5 172.9V179.1M740.5 172.9V179.1M741.5 171.9V180.2M742.5 172.9V179.1M743.5 172.9V181.0M744.5 172.9V179.1M745.5 172.9V179.1M746.5 172.9V179.1M747.5 172.9V179.1M748.5 172.9V180.0M749.5 174.7V179.1M750.5 174.7V180.7M751.5 172.1V179.1M752.5 172.9V179.1M753.5 172.9V179.1M754.5 172.9V179.1M755.5 172.9V179.1M756.5 174.7V179.1M757.5 174.7V179.1M758.5 172.9V180.5M759.5 172.9V179.1M767.5 170.0V180.1M768.5 171.9V180.1M769.5 173.8V180.0M770.5 175.5V181.3M771.5 173.6V179.9M772.5 173.5V179.8M773.5 173.5V179.7M774.5 173.4V179.7M775.5 173.4V179.6M776.5 173.3V181.1M777.5 173.3V179.5M778.5 173.3V181.4M779.5 173.2V179.5M780.5 171.9V179.4M781.5 171.1V179.4M782.5 173.2V179.4M783.5 171.4V179.4M784.5 173.1V179.3M785.5 173.1V179.3M786.5 173.0V179.3M787.5 173.0V179.2M788.5 173.0V177.4M789.5 172.9V179.2M790.5 172.9V179.1M799.5 58.4V65.4M800.5 56.6V64.6M801.5 58.4V65.6M802.5 59.4V66.6M803.5 60.4V66.6M804.5 60.3V66.6M805.5 60.3V66.5M806.5 60.3V68.6M807.5 60.2V66.5M808.5 60.2V66.4M809.5 58.8V66.4M810.5 58.9V68.0M811.5 57.1V66.7M812.5 60.7V65.1M813.5 60.7V65.1M814.5 60.7V65.1M815.5 60.7V65.1M816.5 56.9V66.0M817.5 58.9V65.9M818.5 58.9V65.1M819.5 58.9V65.9M820.5 59.6V66.6M821.5 60.4V67.6M822.5 60.3V68.6M831.5 175.4V181.8M832.5 173.7V179.8M833.5 172.9V178.1M834.5 172.9V177.3M835.5 172.9V177.3M836.5 172.9V177.3M837.5 171.7V177.3M838.5 172.9V179.1M839.5 172.9V179.1M840.5 172.9V179.1M841.5 172.9V177.3M842.5 172.9V179.1M843.5 172.9V179.1M844.5 171.5V179.1M845.5 172.9V179.1M846.5 172.9V179.1M847.5 172.9V179.1M848.5 172.9V177.3M849.5 172.9V177.3M850.5 171.2V179.1M851.5 172.9V179.1M852.5 174.7V179.1M853.5 174.7V177.3M854.5 172.9V179.8M855.5 172.9V179.1M856.5 172.1V179.1M857.5 172.9V179.1M858.5 172.9V179.1M859.5 172.9V180.1M860.5 171.3V181.4M861.5 172.9V180.3M862.5 172.9V180.1M863.5 172.9V179.1M864.5 170.6V181.1M865.5 172.9V177.3M866.5 171.7V181.1M867.5 172.9V177.3M868.5 172.9V177.3M869.5 171.5V180.3M870.5 172.9V179.1M871.5 172.3V179.1M872.5 172.9V179.1M873.5 172.9V181.2M874.5 172.9V179.1M875.5 172.9V179.1M876.5 172.9V179.1M877.5 172.0V179.1M878.5 174.7V180.5M879.5 174.7V179.1M880.5 174.7V180.9M881.5 172.9V180.6M882.5 172.9V181.5M883.5 172.9V179.1M884.5 172.9V180.4M885.5 171.7V179.1M886.5 172.1V179.1M887.5 170.7V179.1M888.5 174.7V179.1M889.5 174.7V179.1M890.5 174.7V179.1M891.5 172.9V179.1M892.5 174.7V181.4M893.5 174.7V180.6M894.5 172.9V179.1M895.5 172.9V179.1M896.5 172.9V179.1M897.5 172.9V179.1M898.5 171.2V179.1M899.5 172.9V179.1M900.5 172.9V179.1M901.5 172.9V181.3M902.5 172.9V179.1M903.5 172.9V179.1M904.5 172.9V179.1M905.5 172.9V179.1M906.5 171.0V179.1M907.5 171.5V179.1M908.5 172.9V180.0M909.5 172.9V179.1M910.5 172.9V179.1M911.5 172.1V180.2M912.5 172.9V179.1M913.5 172.9V181.0M914.5 172.9V179.1M915.5 171.6V179.9M916.5 172.9V177.3M917.5 172.9V177.3M918.5 172.9V179.1M919.5 172.9V180.6M920.5 172.9V181.5M921.5 172.9V179.1M922.5 170.6V179.1M923.5 172.9V180.7M924.5 171.0V179.1M925.5 172.9V179.1M926.5 172.9V179.1M927.5 172.9V181.0M928.5 172.9V177.3M929.5 172.9V177.3M930.5 172.9V177.3M931.5 172.9V177.3M932.5 172.9V177.3M933.5 172.9V177.3M934.5 174.7V177.3M935.5 172.9V179.1M936.5 172.9V179.1M937.5 172.9V179.1M938.5 172.9V177.3M939.5 172.9V179.1M940.5 172.9V177.3M941.5 172.9V179.1M942.5 171.0V179.1M943.5 172.9V179.1M944.5 172.9V179.1M945.5 172.9V179.1M946.5 172.9V179.1M947.5 172.9V181.4M948.5 172.9V180.4M949.5 170.8V179.1M950.5 172.9V179.1M951.5 172.9V179.1M952.5 170.8V179.1M953.5 172.9V179.1M954.5 172.9V180.1M955.5 172.9V179.1M956.5 172.9V180.9M957.5 172.9V179.1M958.5 172.9V179.1M959.5 172.9V179.1M960.5 172.9V179.1M961.5 171.5V179.1M962.5 172.9V179.1M963.5 172.9V179.1M964.5 170.7V180.4M965.5 172.9V179.1M966.5 172.9V181.2M967.5 172.9V179.1M968.5 171.7V179.1M969.5 172.9V179.1M970.5 172.9V179.1M971.5 172.9V179.1M972.5 171.3V179.1M973.5 170.9V179.1M974.5 172.9V179.1M975.5 172.9V180.9M976.5 172.9V180.4M977.5 172.9V179.1M986.5 170.9V181.9M987.5 173.4V180.6M988.5 173.3V179.6M989.5 173.3V179.5M990.5 172.6V180.3M991.5 171.6V179.4M992.5 173.1V179.4M993.5 173.1V179.3M994.5 173.0V179.3M995.5 173.0V179.2M996.5 172.9V179.2M997.5 172.9V179.1M998.5 172.9V179.1M999.5 172.9V179.1M1000.5 172.9V179.1M1001.5 172.9V181.4M1002.5 172.9V181.0M1003.5 172.2V179.1M1004.5 172.9V179.1M1005.5 172.9V179.1M1006.5 172.9V177.3M1007.5 172.9V179.1M1008.5 172.9V179.1M1009.5 172.9V179.1M1010.5 172.9V179.1M1011.5 172.9V179.1M1012.5 172.9V180.2M1013.5 172.9V179.1M1014.5 172.9V179.1M1015.5 172.9V179.1M1016.5 172.9V179.1M1017.5 174.7V179.1M1018.5 174.7V179.1M1019.5 174.7V179.9M1020.5 172.9V179.1" stroke="#969008" stroke-width="1" fill="none" shape-rendering="crispEdges"/><path d="M40.5 174.8L41.5 168.6L42.5 158.2L43.5 144.3L44.5 137.3L45.5 147.5L46.5 158.6L47.5 166.6L48.5 173.3M135.5 173.1L136.5 166.4L137.5 157.3M138.5 152.5L139.5 160.0L140.5 166.9L141.5 172.3M166.5 174.6L167.5 168.5L168.5 154.4L169.5 134.9L170.5 113.8L171.5 93.4L172.5 77.4L173.5 64.6M198.5 67.7L199.5 73.6L200.5 92.1L201.5 111.4L202.5 131.8L203.5 154.3L204.5 170.0L205.5 179.4M353.5 172.2L354.5 164.0L355.5 150.9L356.5 138.2M357.5 142.4L358.5 154.0L359.5 163.4L360.5 170.0L361.5 175.2M447.5 175.2L448.5 170.1L449.5 162.2L450.5 153.5M451.5 156.2L452.5 164.1L453.5 169.7L454.5 174.8M479.5 172.9L480.5 163.0L481.5 145.5L482.5 125.2L483.5 103.3L484.5 85.9L485.5 70.0L486.5 62.4M511.5 69.9L512.5 80.8L513.5 102.7L514.5 121.1L515.5 143.1L516.5 162.8L517.5 174.9L518.5 179.9M665.5 174.8L666.5 168.1L667.5 157.3L668.5 143.4L669.5 137.2L670.5 148.1L671.5 159.4L672.5 166.8L673.5 173.0M760.5 172.8L761.5 166.1L762.5 157.1M763.5 152.4L764.5 159.9L765.5 166.8L766.5 172.7M791.5 174.6L792.5 168.7L793.5 154.1L794.5 134.7L795.5 113.3L796.5 93.2L797.5 76.9L798.5 64.5M823.5 67.1L824.5 73.0L825.5 91.6L826.5 111.3L827.5 131.8L828.5 153.9L829.5 169.8L830.5 179.1M978.5 172.5L979.5 164.3L980.5 150.9L981.5 138.0M982.5 142.0L983.5 153.9L984.5 163.6L985.5 170.4" stroke="#989008" stroke-width="1.15" fill="none" stroke-linejoin="round"/><path d="M21.5 176.2L22.5 176.2L23.5 176.0L24.5 176.0L25.5 176.0L26.5 176.1L27.5 176.1L28.5 176.1L29.5 176.2L30.5 176.1L31.5 176.1L32.5 176.0L33.5 175.9L34.5 175.8L35.5 176.0L36.5 176.0L37.5 176.1L38.5 175.8L39.5 175.8L40.5 174.8M48.5 173.3L49.5 176.1L50.5 176.8L51.5 176.6L52.5 176.5L53.5 176.4L54.5 176.6L55.5 176.7L56.5 176.3L57.5 175.9L58.5 175.8L59.5 175.8L60.5 175.9L61.5 175.7L62.5 175.7L63.5 175.7L64.5 175.8L65.5 175.9L66.5 176.0L67.5 175.9L68.5 176.0L69.5 176.1L70.5 176.3L71.5 176.1L72.5 176.0L73.5 175.9L74.5 176.2L75.5 175.9L76.5 176.1L77.5 176.0L78.5 175.9L79.5 175.8L80.5 175.8L81.5 176.0L82.5 175.9L83.5 175.7L84.5 175.7L85.5 175.8L86.5 176.0L87.5 176.1L88.5 175.9L89.5 175.9L90.5 176.0L91.5 176.2L92.5 176.0L93.5 175.9L94.5 176.0L95.5 176.3L96.5 176.1L97.5 175.9L98.5 175.7L99.5 175.7L100.5 176.0L101.5 176.1L102.5 175.9L103.5 175.6L104.5 175.7L105.5 176.1L106.5 176.1L107.5 176.0L108.5 176.0L109.5 176.1L110.5 176.3L111.5 176.2L112.5 176.2L113.5 176.0L114.5 176.1L115.5 175.8L116.5 175.8L117.5 175.6L118.5 175.8L119.5 175.8L120.5 175.7L121.5 176.1L122.5 176.0L123.5 176.2L124.5 176.3L125.5 176.3L126.5 176.1L127.5 175.7L128.5 175.9L129.5 176.0L130.5 176.1L131.5 175.9L132.5 175.9L133.5 176.1L134.5 176.1L135.5 173.1M137.5 157.3L138.5 152.5M141.5 172.3L142.5 175.6L143.5 176.5L144.5 177.0L145.5 177.1L146.5 176.8L147.5 176.4L148.5 176.4L149.5 176.4L150.5 176.2L151.5 176.4L152.5 176.4L153.5 176.5L154.5 176.3L155.5 176.2L156.5 176.1L157.5 176.0L158.5 176.0L159.5 175.9L160.5 175.8L161.5 176.0L162.5 176.2L163.5 176.3L164.5 176.1L165.5 176.0L166.5 174.6M173.5 64.6L174.5 61.3L175.5 61.6L176.5 61.8L177.5 63.3L178.5 63.0L179.5 63.1L180.5 63.2L181.5 63.5L182.5 63.4L183.5 63.2L184.5 63.0L185.5 62.6L186.5 62.5L187.5 62.4L188.5 62.2L189.5 61.9L190.5 61.9L191.5 62.0L192.5 62.0L193.5 62.0L194.5 62.1L195.5 63.0L196.5 63.8L197.5 64.9L198.5 67.7M205.5 179.4L206.5 179.3L207.5 177.4L208.5 175.9L209.5 175.8L210.5 175.7L211.5 176.1L212.5 176.3L213.5 175.9L214.5 175.7L215.5 175.4L216.5 175.9L217.5 175.9L218.5 176.3L219.5 175.9L220.5 176.2L221.5 176.4L222.5 176.4L223.5 176.2L224.5 175.8L225.5 176.0L226.5 175.7L227.5 176.1L228.5 175.9L229.5 176.1L230.5 175.9L231.5 175.9L232.5 175.9L233.5 175.8L234.5 175.9L235.5 175.7L236.5 175.7L237.5 175.7L238.5 175.9L239.5 175.9L240.5 175.9L241.5 176.1L242.5 176.0L243.5 176.0L244.5 175.8L245.5 175.8L246.5 175.6L247.5 175.8L248.5 175.7L249.5 175.8L250.5 175.8L251.5 176.0L252.5 176.1L253.5 175.7L254.5 175.7L255.5 175.8L256.5 175.9L257.5 175.9L258.5 175.8L259.5 175.8L260.5 175.7L261.5 175.8L262.5 176.0L263.5 175.8L264.5 176.1L265.5 175.9L266.5 176.0L267.5 175.8L268.5 175.8L269.5 176.1L270.5 175.9L271.5 176.0L272.5 176.0L273.5 175.9L274.5 176.0L275.5 175.9L276.5 175.9L277.5 175.8L278.5 175.9L279.5 176.0L280.5 175.9L281.5 175.9L282.5 175.7L283.5 175.7L284.5 175.6L285.5 175.6L286.5 175.8L287.5 175.8L288.5 176.1L289.5 176.0L290.5 175.9L291.5 175.8L292.5 175.6L293.5 176.1L294.5 176.0L295.5 176.3L296.5 175.9L297.5 176.0L298.5 175.9L299.5 175.8L300.5 176.0L301.5 176.2L302.5 176.0L303.5 176.0L304.5 175.9L305.5 176.0L306.5 176.0L307.5 176.0L308.5 175.7L309.5 175.7L310.5 175.6L311.5 176.0L312.5 176.0L313.5 176.3L314.5 176.2L315.5 176.2L316.5 175.9L317.5 176.0L318.5 176.3L319.5 176.3L320.5 176.1L321.5 175.8L322.5 175.8L323.5 175.8L324.5 175.8L325.5 175.9L326.5 176.2L327.5 176.2L328.5 176.3L329.5 176.2L330.5 176.1L331.5 176.3L332.5 176.1L333.5 176.0L334.5 175.7L335.5 175.8L336.5 175.7L337.5 175.8L338.5 175.5L339.5 176.0L340.5 175.9L341.5 176.1L342.5 175.8L343.5 175.7L344.5 175.8L345.5 175.8L346.5 175.7L347.5 175.7L348.5 175.8L349.5 176.0L350.5 176.2L351.5 176.3L352.5 176.2L353.5 172.2M356.5 138.2L357.5 142.4M361.5 175.2L362.5 176.2L363.5 176.2L364.5 176.1L365.5 176.4L366.5 176.4L367.5 176.2L368.5 176.0L369.5 176.1L370.5 176.1L371.5 175.9L372.5 175.9L373.5 175.9L374.5 176.3L375.5 176.1L376.5 176.2L377.5 175.9L378.5 176.1L379.5 175.9L380.5 176.1L381.5 176.2L382.5 176.1L383.5 176.0L384.5 175.9L385.5 176.2L386.5 176.3L387.5 176.1L388.5 176.0L389.5 176.0L390.5 176.5L391.5 176.2L392.5 176.0L393.5 175.9L394.5 175.9L395.5 175.8L396.5 175.7L397.5 176.1L398.5 176.1L399.5 176.1L400.5 176.0L401.5 176.3L402.5 176.2L403.5 176.4L404.5 176.0L405.5 176.0L406.5 175.8L407.5 176.1L408.5 176.2L409.5 176.1L410.5 176.1L411.5 176.1L412.5 176.2L413.5 176.1L414.5 175.9L415.5 175.7L416.5 175.7L417.5 175.8L418.5 175.9L419.5 176.0L420.5 175.8L421.5 175.8L422.5 175.6L423.5 176.1L424.5 176.0L425.5 176.1L426.5 176.0L427.5 176.3L428.5 176.4L429.5 176.1L430.5 175.7L431.5 175.6L432.5 175.6L433.5 175.9L434.5 175.6L435.5 175.9L436.5 176.1L437.5 176.2L438.5 176.2L439.5 176.0L440.5 176.1L441.5 176.0L442.5 176.0L443.5 176.1L444.5 176.1L445.5 176.1L446.5 176.1L447.5 175.2M450.5 153.5L451.5 156.2M454.5 174.8L455.5 176.6L456.5 176.9L457.5 176.9L458.5 176.7L459.5 176.4L460.5 176.2L461.5 176.2L462.5 176.5L463.5 176.7L464.5 176.9L465.5 176.8L466.5 176.5L467.5 176.3L468.5 176.4L469.5 176.7L470.5 176.8L471.5 176.6L472.5 176.3L473.5 176.1L474.5 175.9L475.5 175.9L476.5 176.0L477.5 176.3L478.5 176.1L479.5 172.9M486.5 62.4L487.5 61.5L488.5 61.4L489.5 62.5L490.5 63.5L491.5 63.4L492.5 63.4L493.5 63.0L494.5 63.2L495.5 63.2L496.5 63.4L497.5 62.8L498.5 62.2L499.5 62.0L500.5 62.0L501.5 61.9L502.5 62.2L503.5 62.3L504.5 62.6L505.5 62.4L506.5 62.6L507.5 63.1L508.5 63.9L509.5 64.5L510.5 65.7L511.5 69.9M518.5 179.9L519.5 178.3L520.5 176.7L521.5 176.1L522.5 175.9L523.5 176.0L524.5 175.5L525.5 175.8L526.5 175.9L527.5 176.1L528.5 176.1L529.5 176.2L530.5 175.9L531.5 175.8L532.5 176.0L533.5 176.0L534.5 175.9L535.5 175.7L536.5 176.0L537.5 176.1L538.5 176.3L539.5 176.0L540.5 176.1L541.5 176.1L542.5 176.0L543.5 176.1L544.5 176.3L545.5 176.5L546.5 176.2L547.5 176.1L548.5 176.0L549.5 175.7L550.5 175.3L551.5 175.4L552.5 175.6L553.5 175.9L554.5 176.0L555.5 175.9L556.5 175.9L557.5 176.2L558.5 176.5L559.5 176.6L560.5 176.3L561.5 176.3L562.5 176.0L563.5 176.1L564.5 176.0L565.5 176.3L566.5 176.2L567.5 176.1L568.5 175.9L569.5 176.0L570.5 176.0L571.5 175.9L572.5 175.6L573.5 175.6L574.5 175.8L575.5 176.1L576.5 176.5L577.5 176.4L578.5 176.1L579.5 176.1L580.5 175.9L581.5 176.1L582.5 176.2L583.5 176.4L584.5 176.2L585.5 176.1L586.5 175.9L587.5 176.3L588.5 176.3L589.5 176.0L590.5 175.8L591.5 176.1L592.5 176.4L593.5 176.5L594.5 176.2L595.5 175.8L596.5 175.4L597.5 175.2L598.5 175.5L599.5 175.8L600.5 176.1L601.5 176.1L602.5 176.2L603.5 176.1L604.5 176.0L605.5 176.0L606.5 175.9L607.5 175.6L608.5 175.3L609.5 175.4L610.5 175.4L611.5 175.5L612.5 175.4L613.5 175.7L614.5 175.5L615.5 175.5L616.5 175.6L617.5 176.0L618.5 176.2L619.5 176.0L620.5 175.7L621.5 175.7L622.5 176.3L623.5 176.4L624.5 176.4L625.5 176.4L626.5 176.3L627.5 176.2L628.5 175.7L629.5 175.7L630.5 176.0L631.5 176.0L632.5 176.1L633.5 175.6L634.5 175.8L635.5 175.9L636.5 176.1L637.5 176.2L638.5 176.2L639.5 176.3L640.5 176.4L641.5 176.4L642.5 176.3L643.5 176.0L644.5 175.7L645.5 175.8L646.5 175.9L647.5 176.4L648.5 176.6L649.5 176.7L650.5 176.2L651.5 176.2L652.5 175.9L653.5 175.9L654.5 175.8L655.5 175.9L656.5 175.9L657.5 175.7L658.5 176.0L659.5 176.1L660.5 176.2L661.5 176.2L662.5 176.2L663.5 176.3L664.5 176.1L665.5 174.8M673.5 173.0L674.5 175.8L675.5 176.2L676.5 176.0L677.5 176.0L678.5 176.2L679.5 176.0L680.5 176.0L681.5 175.5L682.5 175.8L683.5 175.7L684.5 175.6L685.5 175.6L686.5 176.0L687.5 176.3L688.5 176.5L689.5 176.2L690.5 175.8L691.5 175.7L692.5 175.7L693.5 175.8L694.5 175.8L695.5 175.9L696.5 176.1L697.5 176.1L698.5 175.9L699.5 176.1L700.5 175.8L701.5 176.0L702.5 175.8L703.5 176.1L704.5 176.1L705.5 176.5L706.5 176.1L707.5 176.0L708.5 175.9L709.5 175.6L710.5 175.6L711.5 175.6L712.5 176.1L713.5 176.4L714.5 176.2L715.5 176.2L716.5 175.9L717.5 175.8L718.5 175.4L719.5 175.5L720.5 175.6L721.5 175.7L722.5 175.3L723.5 175.1L724.5 175.1L725.5 175.7L726.5 175.9L727.5 175.8L728.5 175.4L729.5 175.8L730.5 175.8L731.5 176.4L732.5 176.3L733.5 176.5L734.5 176.2L735.5 176.0L736.5 175.8L737.5 175.9L738.5 175.9L739.5 176.1L740.5 176.2L741.5 176.5L742.5 176.3L743.5 176.4L744.5 176.0L745.5 175.9L746.5 175.7L747.5 175.6L748.5 175.9L749.5 176.1L750.5 176.5L751.5 176.3L752.5 176.2L753.5 176.0L754.5 175.8L755.5 175.8L756.5 175.9L757.5 175.9L758.5 176.0L759.5 175.7L760.5 172.8M762.5 157.1L763.5 152.4M766.5 172.7L767.5 176.3L768.5 177.0L769.5 176.7L770.5 176.4L771.5 176.6L772.5 176.7L773.5 176.9L774.5 176.7L775.5 176.4L776.5 176.3L777.5 176.2L778.5 176.2L779.5 176.2L780.5 176.3L781.5 176.2L782.5 176.1L783.5 176.1L784.5 176.0L785.5 176.0L786.5 176.2L787.5 176.5L788.5 176.2L789.5 175.9L790.5 175.7L791.5 174.6M798.5 64.5L799.5 60.9L800.5 61.1L801.5 61.6L802.5 63.4L803.5 63.8L804.5 63.4L805.5 63.3L806.5 62.9L807.5 63.1L808.5 63.2L809.5 63.3L810.5 62.4L811.5 62.0L812.5 61.8L813.5 62.2L814.5 62.5L815.5 62.4L816.5 62.0L817.5 61.5L818.5 61.7L819.5 62.3L820.5 63.2L821.5 63.9L822.5 64.5L823.5 67.1M830.5 179.1L831.5 179.6L832.5 177.4L833.5 176.2L834.5 176.0L835.5 176.0L836.5 175.8L837.5 175.8L838.5 175.7L839.5 175.9L840.5 175.9L841.5 176.0L842.5 176.0L843.5 175.9L844.5 176.0L845.5 176.1L846.5 176.1L847.5 176.0L848.5 176.1L849.5 176.2L850.5 176.1L851.5 175.8L852.5 175.9L853.5 176.1L854.5 176.3L855.5 176.0L856.5 175.9L857.5 175.7L858.5 175.9L859.5 175.8L860.5 175.8L861.5 176.0L862.5 176.0L863.5 176.3L864.5 176.2L865.5 176.4L866.5 176.5L867.5 176.1L868.5 175.9L869.5 175.4L870.5 175.6L871.5 175.7L872.5 176.2L873.5 176.4L874.5 176.3L875.5 176.2L876.5 176.0L877.5 176.2L878.5 176.4L879.5 176.4L880.5 176.7L881.5 176.5L882.5 176.5L883.5 176.0L884.5 176.1L885.5 176.3L886.5 176.1L887.5 176.2L888.5 176.1L889.5 176.4L890.5 176.4L891.5 176.2L892.5 175.9L893.5 175.5L894.5 175.7L895.5 175.9L896.5 176.1L897.5 175.9L898.5 176.0L899.5 176.1L900.5 176.1L901.5 176.0L902.5 175.8L903.5 176.0L904.5 176.0L905.5 176.2L906.5 176.4L907.5 176.6L908.5 176.2L909.5 176.3L910.5 176.3L911.5 176.3L912.5 175.9L913.5 175.8L914.5 176.2L915.5 176.3L916.5 176.4L917.5 175.7L918.5 175.8L919.5 175.6L920.5 175.8L921.5 175.8L922.5 175.8L923.5 176.1L924.5 176.2L925.5 176.0L926.5 175.9L927.5 175.5L928.5 175.7L929.5 175.9L930.5 175.9L931.5 176.2L932.5 176.0L933.5 176.0L934.5 175.8L935.5 175.9L936.5 175.9L937.5 175.9L938.5 175.6L939.5 176.0L940.5 176.0L941.5 176.1L942.5 176.1L943.5 175.9L944.5 175.9L945.5 176.0L946.5 176.2L947.5 176.5L948.5 176.2L949.5 176.1L950.5 175.9L951.5 175.9L952.5 175.9L953.5 175.8L954.5 175.7L955.5 175.5L956.5 175.7L957.5 175.8L958.5 176.2L959.5 175.9L960.5 176.0L961.5 175.8L962.5 175.9L963.5 175.8L964.5 175.9L965.5 176.2L966.5 176.3L967.5 176.3L968.5 176.4L969.5 176.3L970.5 175.8L971.5 175.6L972.5 175.6L973.5 175.9L974.5 176.1L975.5 176.1L976.5 176.2L977.5 176.4L978.5 172.5M981.5 138.0L982.5 142.0M985.5 170.4L986.5 175.2L987.5 176.2L988.5 176.3L989.5 176.2L990.5 176.1L991.5 176.2L992.5 176.0L993.5 175.9L994.5 175.9L995.5 176.2L996.5 176.4L997.5 176.3L998.5 176.5L999.5 176.2L1000.5 176.0L1001.5 175.6L1002.5 175.9L1003.5 176.0L1004.5 176.3L1005.5 176.3L1006.5 176.3L1007.5 176.0L1008.5 175.7L1009.5 176.1L1010.5 176.3L1011.5 176.6L1012.5 176.2L1013.5 176.0L1014.5 175.9L1015.5 175.9L1016.5 175.5L1017.5 175.6L1018.5 175.6L1019.5 176.0L1020.5 176.0" stroke="#e8e010" stroke-width="1.8" fill="none" stroke-linejoin="round"/></g>
<!-- trigger position markers -->
<g>
<path d="M515.2 1.2V14.6M515.2 1.7H518M515.2 14.2H518M527.3 1.2V14.6M527.3 1.7H524.5M527.3 14.2H524.5" stroke="#9a98a8" stroke-width="1.5" fill="none"/>
<path d="M517.5 1H525.3L521.4 4.8Z" fill="#ff9800"/>
<path d="M517.2 5H525.2V15.6H517.2Z" fill="#ff9800"/>
<path d="M518.2 5.7H524.6V7.3H522.3V14.8H520V7.3H518.2Z" fill="#000"/>
<path d="M515.8 17H527.2L521.5 22.8Z" fill="#ff9800"/>
<path d="M515.2 25.3Q515.2 23.8 516.7 23.8H526Q527.4 23.8 527.4 25.3V36.1L521.4 39.2L515.2 36.1Z" fill="#ff9800"/>
<path d="M516.3 25.4H526.1V26.9H522.4V35.8H520V26.9H516.3Z" fill="#000"/>
</g>
<!-- trigger level arrow -->
<path d="M1009.8 438.5L1016.1 433V444Z" fill="#b800b8"/><rect x="1016" y="437.7" width="5" height="1.6" fill="#b800b8"/>
<!-- channel markers -->
<path d="M0 174.5H12.8L19.6 182.3L12.8 190.2H0Z" fill="#f8f800"/>
<path d="M0 174.2H12.8" stroke="#ffffc0" stroke-width="1"/><path d="M0 190.5H12.8L19.6 182.6" stroke="#1d2a6a" stroke-width="1" fill="none"/>
<path d="M0.5 334.6H12.8L19.3 342.5L12.8 350.6H0.5Z" fill="#000400" stroke="#00e0e0" stroke-width="1.1"/>
<path d="M0.5 493.6H12.8L19.3 501.5L12.8 509.6H0.5Z" fill="#000400" stroke="#c000c0" stroke-width="1.1"/>
<path d="M0.5 634.6H12.8L19.3 642.5L12.8 650.6H0.5Z" fill="#000400" stroke="#00a810" stroke-width="1.1"/>
</svg>
<!-- readout boxes -->
<div class="box" style="left:20px;top:670px;width:555px;height:21px"></div>
<div class="box" style="left:582px;top:670px;width:148px;height:38px"></div>
<div class="box" style="left:737px;top:670px;width:107px;height:38px"></div>
<div class="box" style="left:851px;top:670px;width:171px;height:38px"></div>
<div class="box" style="left:909px;top:729px;width:113px;height:38px"></div>
<div class="badge" style="left:26px;top:673.3px;width:25px;height:15.6px;background:#f8f800"></div><div class="badge" style="left:165px;top:673.3px;width:25px;height:15.6px;background:#00e0e0"></div><div class="badge" style="left:304px;top:673.3px;width:25px;height:15.6px;background:#a800a8"></div><div class="badge" style="left:443px;top:673.3px;width:25px;height:15.6px;background:#08a818"></div><div class="badge" style="left:882px;top:673.3px;width:25px;height:15.6px;background:#a800a8"></div>
<!-- menu -->
<div class="abs" style="left:0;top:714px;width:17px;height:60px;background:#ffff00;border-radius:0 6px 0 0"></div>
<div class="btn" style="left:20px;width:114px"></div>
<div class="btn" style="left:138px;width:114px"></div>
<div class="btn" style="left:256px;width:114px"></div>
<div class="btn pop" style="left:374px;width:114px"></div>
<div class="btn pop" style="left:492px;width:114px"></div>
<div class="btn pop" style="left:728px;width:114px"></div>
<div class="sel" style="left:24.3px;top:742px;width:29.6px;height:25px"></div>
<div class="sel" style="left:143px;top:742px;width:47px;height:25px"></div>
<div class="sel" style="left:322px;top:742px;width:39px;height:25px"></div>
<div class="sel" style="left:403px;top:742.2px;width:56.2px;height:15.8px;border-radius:0"></div>
<div class="badge" style="left:536.8px;top:724.9px;width:25.2px;height:16px;background:#f8f800"></div>
<svg class="abs" style="left:0;top:0" width="1024" height="768" viewBox="0 0 1024 768">
<path d="M10 737V747.4H8.1V739.75L6.2 740.85V738.95L8.20 737Z" fill="#000"/><path d="M40.6 676V686.3H38.1V679.62L35.8 680.16V677.66L38.23 676Z" fill="#000"/><path d="M551.2 727.7V738H549.3000000000001V730.46L546.8 731.53V729.63L549.40 727.7Z" fill="#000"/><path d="M9.4 177.2V187.8H6.9V180.82L5 181.44V178.94L7.03 177.2Z" fill="#000"/>
<!-- ground symbol -->
<path d="M116.2 748V756M109.2 756.2H122.8M111.6 756.5L107.4 762.6M117 756.5L112.8 762.6M122.4 756.5L118.2 762.6" stroke="#000" stroke-width="1.8" fill="none"/>
<!-- falling edge symbol -->
<path d="M920 675.9H925.2L928.4 685.1H932.2" stroke="#fff" stroke-width="1.9" fill="none"/>
<!-- T -> v -->
<rect x="587.1" y="691" width="12" height="13" rx="1.8" fill="#ff9800"/>
<path d="M588.6 692.7H597.6V694.6H594.3V703.6H591.9V694.6H588.6Z" fill="#000400"/>
<path d="M599.6 697.5H607" stroke="#ff9800" stroke-width="1.6" fill="none"/><path d="M604.6 693.8L609.4 697.5L604.6 701.2Z" fill="#ff9800"/>
<path d="M610.8 694.2H621.6L616.2 700.4Z" fill="#ff9800"/>
<!-- weiter triangle -->
<path d="M773.6 738.6L785 727.2L796.4 738.6Z" fill="#5a5a6a"/>
<path d="M773.6 738L785 727L796.4 738Q785 734.5 773.6 738Z" fill="#e2e9ff"/>
</svg>
<span class="t" style="left:68.24px;top:679.92px;font-size:29.33px;color:#f8f800;letter-spacing:2.31px;transform:scale(0.5200,.5)">2.00 V</span>
<span class="t" style="left:207.24px;top:679.92px;font-size:29.33px;color:#00e0e0;letter-spacing:2.31px;transform:scale(0.5200,.5)">2.00 V</span>
<span class="t" style="left:346.24px;top:679.92px;font-size:29.33px;color:#c000c0;letter-spacing:2.31px;transform:scale(0.5200,.5)">2.00 V</span>
<span class="t" style="left:485.24px;top:679.92px;font-size:29.33px;color:#00c010;letter-spacing:2.31px;transform:scale(0.5200,.5)">2.00 V</span>
<span class="t" style="left:587.49px;top:679.92px;font-size:29.33px;color:#ffffff;letter-spacing:3.31px;transform:scale(0.5200,.5)">400ns</span>
<span class="t" style="left:742.89px;top:679.92px;font-size:29.33px;color:#ffffff;letter-spacing:2.27px;transform:scale(0.5200,.5)">5.00GS/s</span>
<span class="t" style="left:966.26px;top:679.92px;font-size:29.33px;color:#ffffff;letter-spacing:1.92px;transform:scale(0.5200,.5)">1.92 V</span>
<span class="t" style="left:622.46px;top:696.82px;font-size:29.89px;color:#ff9800;letter-spacing:2.17px;transform:scale(0.5200,.5)">0.00000 s</span>
<span class="t" style="left:743.73px;top:696.82px;font-size:29.89px;color:#ffffff;letter-spacing:2.50px;transform:scale(0.5200,.5)">1M Pkte.</span>
<span class="t" style="left:38.35px;top:726.51px;font-size:29.94px;color:#000;letter-spacing:3.65px;transform:scale(0.5200,.5)">Kopplung</span>
<span class="t" style="left:28.59px;top:753.41px;font-size:29.94px;color:#000;transform:scale(0.5058,.5)">DC</span>
<span class="t" style="left:67.00px;top:753.41px;font-size:29.94px;color:#000;transform:scale(0.5064,.5)">AC</span>
<span class="t" style="left:155.00px;top:726.51px;font-size:29.94px;color:#000;letter-spacing:2.38px;transform:scale(0.5200,.5)">Abschluss</span>
<span class="t" style="left:148.68px;top:753.62px;font-size:28.77px;color:#000;letter-spacing:4.51px;transform:scale(0.5200,.5)">1MΩ</span>
<span class="t" style="left:207.10px;top:753.62px;font-size:28.77px;color:#000;letter-spacing:4.24px;transform:scale(0.5200,.5)">50Ω</span>
<span class="t" style="left:274.90px;top:726.51px;font-size:29.94px;color:#000;letter-spacing:3.69px;transform:scale(0.5200,.5)">Invertier.</span>
<span class="t" style="left:272.25px;top:753.41px;font-size:29.94px;color:#000;letter-spacing:2.59px;transform:scale(0.5200,.5)">Ein</span>
<span class="t" style="left:327.30px;top:753.41px;font-size:29.94px;color:#000;letter-spacing:2.71px;transform:scale(0.5200,.5)">Aus</span>
<span class="t" style="left:388.57px;top:731.56px;font-size:29.65px;color:#000;letter-spacing:2.58px;transform:scale(0.5200,.5)">Bandbreite</span>
<span class="t" style="left:404.25px;top:749.02px;font-size:28.77px;color:#000;letter-spacing:3.48px;transform:scale(0.5200,.5)">20MHz</span>
<span class="t" style="left:506.05px;top:749.11px;font-size:29.94px;color:#000;letter-spacing:2.22px;transform:scale(0.5200,.5)">Bezeichng.</span>
<span class="t" style="left:760.20px;top:747.01px;font-size:29.94px;color:#000;letter-spacing:2.35px;transform:scale(0.5200,.5)">Weiter</span>
<span class="t" style="left:914.92px;top:739.87px;font-size:30.17px;color:#fff;letter-spacing:2.01px;transform:scale(0.5200,.5)">23 Mai  2017</span>
<span class="t" style="left:915.65px;top:755.97px;font-size:29.61px;color:#fff;letter-spacing:2.90px;transform:scale(0.5200,.5)">16:25:16</span>
<span class="t" style="left:-0.09px;top:8.20px;font-size:39.69px;color:#000;font-weight:bold;font-family:'Liberation Serif',serif;transform:scale(0.4912,.5)">Tek</span>
<span class="t" style="left:34.05px;top:6.64px;font-size:29.80px;color:#fff;letter-spacing:3.18px;transform:scale(0.5200,.5)">Stop</span>
<span class="t" style="left:173.31px;top:680.18px;font-size:30.73px;color:#000;font-weight:bold;-webkit-text-stroke:0;transform:scale(0.5314,.5)">2</span>
<span class="t" style="left:312.48px;top:680.18px;font-size:30.73px;color:#000;font-weight:bold;-webkit-text-stroke:0;transform:scale(0.5207,.5)">3</span>
<span class="t" style="left:451.26px;top:680.18px;font-size:30.73px;color:#000;font-weight:bold;-webkit-text-stroke:0;transform:scale(0.5183,.5)">4</span>
<span class="t" style="left:890.48px;top:680.18px;font-size:30.73px;color:#000;font-weight:bold;-webkit-text-stroke:0;transform:scale(0.5207,.5)">3</span>
<span class="t" style="left:3.00px;top:341.97px;font-size:29.61px;color:#00e0e0;-webkit-text-stroke:0;transform:scale(0.5433,.5)">2</span>
<span class="t" style="left:3.26px;top:500.97px;font-size:29.61px;color:#c000c0;-webkit-text-stroke:0;transform:scale(0.5207,.5)">3</span>
<span class="t" style="left:3.19px;top:641.97px;font-size:29.61px;color:#00c010;-webkit-text-stroke:0;transform:scale(0.5298,.5)">4</span>
<span class="t" style="left:144.1px;top:679.0px;font-size:17.2px;color:#f8f800;transform:scale(0.41,.5);-webkit-text-stroke:0.45px #f8f800">B</span><span class="t" style="left:148.0px;top:683.2px;font-size:17.2px;color:#f8f800;transform:scale(0.29,.5);-webkit-text-stroke:0.6px #f8f800">W</span><span class="t" style="left:283.1px;top:679.0px;font-size:17.2px;color:#00e0e0;transform:scale(0.41,.5);-webkit-text-stroke:0.45px #00e0e0">B</span><span class="t" style="left:287.0px;top:683.2px;font-size:17.2px;color:#00e0e0;transform:scale(0.29,.5);-webkit-text-stroke:0.6px #00e0e0">W</span><span class="t" style="left:422.1px;top:679.0px;font-size:17.2px;color:#c000c0;transform:scale(0.41,.5);-webkit-text-stroke:0.45px #c000c0">B</span><span class="t" style="left:426.0px;top:683.2px;font-size:17.2px;color:#c000c0;transform:scale(0.29,.5);-webkit-text-stroke:0.6px #c000c0">W</span><span class="t" style="left:561.1px;top:679.0px;font-size:17.2px;color:#00c010;transform:scale(0.41,.5);-webkit-text-stroke:0.45px #00c010">B</span><span class="t" style="left:565.0px;top:683.2px;font-size:17.2px;color:#00c010;transform:scale(0.29,.5);-webkit-text-stroke:0.6px #00c010">W</span>
</body></html>
